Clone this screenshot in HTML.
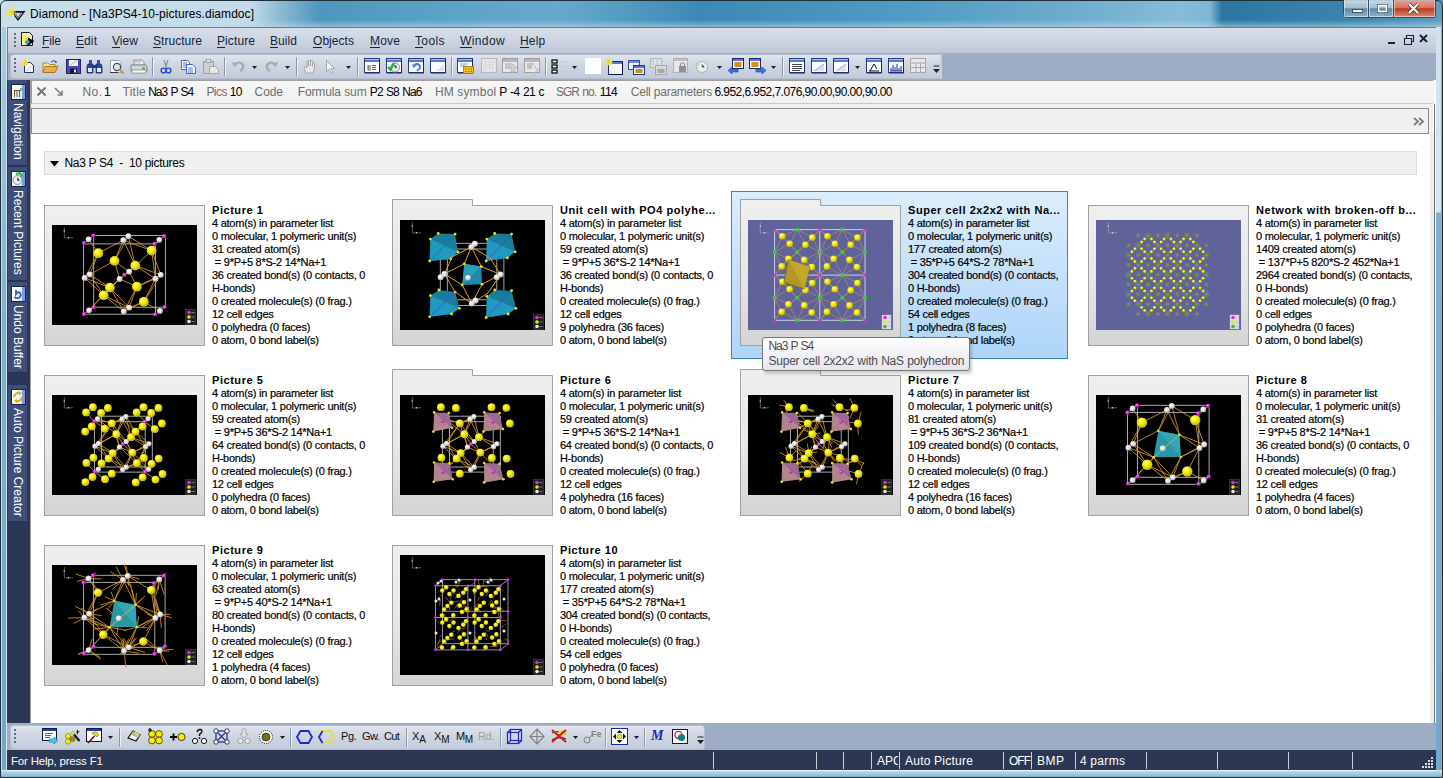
<!DOCTYPE html><html><head><meta charset="utf-8"><style>
html,body{margin:0;padding:0;}
body{width:1443px;height:778px;overflow:hidden;position:relative;font-family:"Liberation Sans",sans-serif;}
.t{position:absolute;white-space:nowrap;line-height:1;}
.b{position:absolute;}
svg{position:absolute;overflow:visible;}
</style></head><body>
<div class="b" style="left:0px;top:0px;width:1443px;height:778px;background:linear-gradient(90deg,#a3c6da 0px,#b9d5e5 8px,#b6d3e3 300px,#9cc3d9 1443px);"></div>
<div class="b" style="left:0px;top:0px;width:1443px;height:27px;background:linear-gradient(90deg,#c9dfeb 0px,#c4dbe9 250px,#8dbad4 280px,#4f95bd 320px,#5aa0c6 420px,#67a9cc 560px,#3d89b5 700px,#4f9bc4 900px,#6aa9cb 1050px,#86bcd8 1180px,#7db6d4 1210px,#2c77a2 1222px,#3a83ac 1343px,#5a9cc2 1440px);"></div>
<div class="b" style="left:0px;top:20px;width:1443px;height:7px;background:linear-gradient(180deg,rgba(255,255,255,0) 0,rgba(190,220,235,.55) 100%);"></div>
<div class="b" style="left:1px;top:27px;width:1px;height:751px;background:#c4deea;"></div>
<div class="b" style="left:2px;top:27px;width:4px;height:751px;background:linear-gradient(180deg,#a8cde0 0,#7fb0cc 40%,#74a6c2 100%);"></div>
<div class="b" style="left:6px;top:27px;width:1px;height:751px;background:#d4e8f2;"></div>
<div class="b" style="left:1435px;top:27px;width:1px;height:751px;background:#d4e8f2;"></div>
<div class="b" style="left:1436px;top:27px;width:5px;height:751px;background:linear-gradient(180deg,#cfe2ee 0,#d6e6f0 185px,#7fb0d4 186px,#74a8cc 100%);"></div>
<div class="b" style="left:1441px;top:27px;width:1px;height:751px;background:#5ab8ea;"></div>
<div class="b" style="left:0px;top:770px;width:1443px;height:8px;background:linear-gradient(180deg,#d6eaf4 0,#a9d0e4 30%,#8fc0dc 70%,#6fa8c8 100%);"></div>
<div class="b" style="left:7px;top:770px;width:1429px;height:1px;background:#e8f4fa;"></div>
<div class="b" style="left:0px;top:0px;width:1443px;height:778px;border:1px solid #1f2f3a;box-sizing:border-box;border-radius:6px 6px 0 0;"></div>
<div class="t" style="left:30px;top:8.14px;font-size:12px;color:#000;letter-spacing:0.054px;word-spacing:-0.054px;">Diamond - [Na3PS4-10-pictures.diamdoc]</div>
<div class="b" style="left:7px;top:27px;width:1429px;height:26px;background:linear-gradient(180deg,#d8dee9 0,#cdd4e1 50%,#bec7d8 100%);border-top:1px solid #6b7b94;border-left:1px solid #6b7b94;box-sizing:border-box;"></div>
<div class="b" style="left:7px;top:53px;width:1429px;height:27px;background:#9eacc4;border-left:1px solid #6b7b94;box-sizing:border-box;"></div>
<div class="t" style="left:42px;top:35.14px;font-size:12px;color:#14243a;letter-spacing:-0.125px;">File</div>
<div class="b" style="left:42px;top:47px;width:7px;height:1px;background:#14243a;"></div>
<div class="t" style="left:76px;top:35.14px;font-size:12px;color:#14243a;letter-spacing:0.094px;">Edit</div>
<div class="b" style="left:76px;top:47px;width:8px;height:1px;background:#14243a;"></div>
<div class="t" style="left:112px;top:35.14px;font-size:12px;color:#14243a;letter-spacing:0.056px;">View</div>
<div class="b" style="left:112px;top:47px;width:8px;height:1px;background:#14243a;"></div>
<div class="t" style="left:153px;top:35.14px;font-size:12px;color:#14243a;letter-spacing:0.035px;">Structure</div>
<div class="b" style="left:153px;top:47px;width:8px;height:1px;background:#14243a;"></div>
<div class="t" style="left:217px;top:35.14px;font-size:12px;color:#14243a;letter-spacing:0.102px;">Picture</div>
<div class="b" style="left:217px;top:47px;width:8px;height:1px;background:#14243a;"></div>
<div class="t" style="left:270px;top:35.14px;font-size:12px;color:#14243a;letter-spacing:0.069px;">Build</div>
<div class="b" style="left:270px;top:47px;width:8px;height:1px;background:#14243a;"></div>
<div class="t" style="left:313px;top:35.14px;font-size:12px;color:#14243a;letter-spacing:0.047px;">Objects</div>
<div class="b" style="left:313px;top:47px;width:9px;height:1px;background:#14243a;"></div>
<div class="t" style="left:370px;top:35.14px;font-size:12px;color:#14243a;letter-spacing:0.206px;">Move</div>
<div class="b" style="left:370px;top:47px;width:10px;height:1px;background:#14243a;"></div>
<div class="t" style="left:415px;top:35.14px;font-size:12px;color:#14243a;letter-spacing:0.362px;">Tools</div>
<div class="b" style="left:415px;top:47px;width:8px;height:1px;background:#14243a;"></div>
<div class="t" style="left:460px;top:35.14px;font-size:12px;color:#14243a;letter-spacing:0.396px;">Window</div>
<div class="b" style="left:460px;top:47px;width:12px;height:1px;background:#14243a;"></div>
<div class="t" style="left:520px;top:35.14px;font-size:12px;color:#14243a;letter-spacing:0.194px;">Help</div>
<div class="b" style="left:520px;top:47px;width:9px;height:1px;background:#14243a;"></div>
<div class="b" style="left:10px;top:54px;width:932px;height:25px;background:linear-gradient(180deg,#dfe4ed 0,#d0d7e3 40%,#c3cbda 100%);border-radius:3px;border:1px solid #b4bdcd;box-sizing:border-box;"></div>
<div class="b" style="left:940px;top:54px;width:2px;height:25px;background:#c9d0dd;"></div>
<div class="b" style="left:14px;top:58px;width:2px;height:2px;background:#5d6c86;"></div>
<div class="b" style="left:14px;top:62px;width:2px;height:2px;background:#5d6c86;"></div>
<div class="b" style="left:14px;top:66px;width:2px;height:2px;background:#5d6c86;"></div>
<div class="b" style="left:14px;top:70px;width:2px;height:2px;background:#5d6c86;"></div>
<div class="b" style="left:14px;top:33px;width:2px;height:2px;background:#5d6c86;"></div>
<div class="b" style="left:14px;top:37px;width:2px;height:2px;background:#5d6c86;"></div>
<div class="b" style="left:14px;top:41px;width:2px;height:2px;background:#5d6c86;"></div>
<div class="b" style="left:14px;top:45px;width:2px;height:2px;background:#5d6c86;"></div>
<svg style="left:21px;top:60px" width="14" height="14" viewBox="0 0 14 14"><path d="M3.5 2.5H9.5L12.5 5.5V12.5H3.5Z" fill="#f4f6fa" stroke="#24305a"/><path d="M5 11L11 6" stroke="#c8d0e0"/><circle cx="4" cy="3" r="3" fill="#f8e860" opacity=".9"/><path d="M1 3H7M4 0V6M2 1L6 5M6 1L2 5" stroke="#f0d000" stroke-width=".7"/></svg><svg style="left:42px;top:59px" width="18" height="15" viewBox="0 0 18 15"><path d="M1 4H6L7.5 5.5H13V13H1Z" fill="#f8e090" stroke="#8a6a10" stroke-width=".7"/><path d="M3 7.5H16L13 13.5H1Z" fill="#f0b040" stroke="#8a5a10" stroke-width=".7"/><path d="M9 3Q12 0 14.5 3" fill="none" stroke="#2a4a8a" stroke-width="1"/><path d="M13.5 1.5L15 3.5L12.5 3.8Z" fill="#2a4a8a"/></svg><svg style="left:66px;top:59px" width="15" height="15" viewBox="0 0 15 15"><rect x="0.5" y="0.5" width="14" height="14" fill="#4848b8" stroke="#202070"/><rect x="3" y="1" width="9" height="6" fill="#f0f0f8"/><path d="M4 6L11 1.5" stroke="#b0b8d0"/><rect x="4" y="9.5" width="7" height="5" fill="#181830"/><rect x="8" y="10.5" width="2" height="3" fill="#e0e0e0"/></svg><svg style="left:86px;top:59px" width="17" height="15" viewBox="0 0 17 15"><path d="M2 5H7V14H1V7Z M10 5H15L16 7V14H10Z" fill="#2848a0" stroke="#102060" stroke-width=".7"/><rect x="3" y="1" width="3" height="4" fill="#3050b0"/><rect x="11" y="1" width="3" height="4" fill="#3050b0"/><rect x="2" y="9" width="4" height="4" fill="#e8ecf8"/><rect x="11" y="9" width="4" height="4" fill="#e8ecf8"/><rect x="7" y="6" width="3" height="3" fill="#203880"/></svg><svg style="left:109px;top:59px" width="17" height="16" viewBox="0 0 17 16"><path d="M1.5 1.5H10L12 3.5V13.5H1.5Z" fill="#f8f8fc" stroke="#8890a8" stroke-width=".8"/><circle cx="8" cy="8" r="3.6" fill="#d8e4f0" stroke="#404858" stroke-width="1.2"/><path d="M10.5 10.5L14.5 14.5" stroke="#e09030" stroke-width="2.2"/><path d="M1 13.5H9" stroke="#303850"/></svg><svg style="left:130px;top:59px" width="18" height="15" viewBox="0 0 18 15"><path d="M4 1H12L14 3V6H4Z" fill="#f4f4f4" stroke="#707070" stroke-width=".7"/><path d="M1 6H16L17 8V12H1Z" fill="#d0d4dc" stroke="#606878" stroke-width=".7"/><rect x="2" y="11" width="14" height="3" fill="#f8f8f8" stroke="#707070" stroke-width=".6"/><rect x="12" y="8.5" width="3" height="2" fill="#20c020"/><path d="M5 2.5H11M5 4H11" stroke="#a0a0a0" stroke-width=".6"/></svg><div class="b" style="left:152px;top:57px;width:1px;height:19px;background:#8a96ab;"></div><div class="b" style="left:153px;top:57px;width:1px;height:19px;background:#eef1f6;"></div><svg style="left:160px;top:59px" width="12" height="15" viewBox="0 0 12 15"><path d="M4 1L6.5 8.5M8 1L5.5 8.5" stroke="#808890" stroke-width="1.1"/><circle cx="3.5" cy="11.5" r="2.4" fill="none" stroke="#2848c0" stroke-width="1.4"/><circle cx="8.5" cy="11.5" r="2.4" fill="none" stroke="#2848c0" stroke-width="1.4"/></svg><svg style="left:180px;top:59px" width="17" height="15" viewBox="0 0 17 15"><path d="M1.5 1.5H7.5L9.5 3.5V10.5H1.5Z" fill="#f4f6fc" stroke="#3858b8" stroke-width=".9"/><path d="M6.5 5.5H12.5L15.5 8.5V14.5H6.5Z" fill="#f4f6fc" stroke="#3858b8" stroke-width=".9"/><path d="M3 4H7M3 6H7M3 8H6M8 9H13M8 11H13M8 13H13" stroke="#3060d0" stroke-width=".8"/></svg><svg style="left:202px;top:59px" width="18" height="15" viewBox="0 0 18 15"><rect x="1.5" y="2.5" width="10" height="12" fill="#d0d0d0" stroke="#a0a0a0"/><rect x="4" y="0.5" width="5" height="3" fill="#e0e0e0" stroke="#a0a0a0"/><path d="M7.5 7.5H13.5L16.5 10.5V14.5H7.5Z" fill="#e8e8e8" stroke="#a8a8a8"/></svg><div class="b" style="left:224px;top:57px;width:1px;height:19px;background:#8a96ab;"></div><div class="b" style="left:225px;top:57px;width:1px;height:19px;background:#eef1f6;"></div><svg style="left:231px;top:59px" width="15" height="15" viewBox="0 0 15 15"><path d="M3 6Q8 1 12 6Q13 10 9 12" fill="none" stroke="#a8a8a8" stroke-width="2.2"/><path d="M1 3L3 8L7 5Z" fill="#a8a8a8"/></svg><svg style="left:252px;top:66px" width="6" height="4" viewBox="0 0 6 4"><path d="M0 0H5L2.5 3Z" fill="#1a1a2a"/></svg><svg style="left:264px;top:59px" width="15" height="15" viewBox="0 0 15 15"><path d="M12 6Q7 1 3 6Q2 10 6 12" fill="none" stroke="#a8a8a8" stroke-width="2.2"/><path d="M14 3L12 8L8 5Z" fill="#a8a8a8"/></svg><svg style="left:285px;top:66px" width="6" height="4" viewBox="0 0 6 4"><path d="M0 0H5L2.5 3Z" fill="#1a1a2a"/></svg><div class="b" style="left:296px;top:57px;width:1px;height:19px;background:#8a96ab;"></div><div class="b" style="left:297px;top:57px;width:1px;height:19px;background:#eef1f6;"></div><svg style="left:302px;top:59px" width="17" height="16" viewBox="0 0 17 16"><path d="M4 14L2 9Q2 7 4 8L5 9V3Q5 1.5 6.5 2V7V2Q7 0.5 8.5 1V7V2Q9.5 1 10.5 2.5V7.5V4Q11.5 3 12.5 4V10L11 14Z" fill="#e8e8e8" stroke="#a0a0a0" stroke-width=".9"/></svg><svg style="left:325px;top:59px" width="10" height="16" viewBox="0 0 10 16"><path d="M1.5 1.5V12.5L4 10L6 14.5L8 13.5L6 9.5H9.5Z" fill="#f0f0f0" stroke="#a0a0a0" stroke-width=".9"/></svg><svg style="left:346px;top:66px" width="6" height="4" viewBox="0 0 6 4"><path d="M0 0H5L2.5 3Z" fill="#1a1a2a"/></svg><div class="b" style="left:357px;top:57px;width:1px;height:19px;background:#8a96ab;"></div><div class="b" style="left:358px;top:57px;width:1px;height:19px;background:#eef1f6;"></div><svg style="left:364px;top:58px" width="17" height="16" viewBox="0 0 17 16"><rect x="0.5" y="0.5" width="15" height="14" fill="#fafbfe" stroke="#2a3a80"/><rect x="1" y="1" width="14" height="3" fill="#5878d8"/><rect x="1" y="1" width="14" height="1" fill="#a8c0f0"/><path d="M15.5 1V15H1" stroke="#1a2260" fill="none"/><path d="M4 7V12M4 8H7M4 10H7M4 12H7M8 7.5H12M8 9.5H12M8 11.5H12" stroke="#605820" stroke-width=".9"/></svg><svg style="left:386px;top:58px" width="17" height="16" viewBox="0 0 17 16"><rect x="0.5" y="0.5" width="15" height="14" fill="#fafbfe" stroke="#2a3a80"/><rect x="1" y="1" width="14" height="3" fill="#5878d8"/><rect x="1" y="1" width="14" height="1" fill="#a8c0f0"/><path d="M15.5 1V15H1" stroke="#1a2260" fill="none"/><circle cx="9" cy="9.5" r="4.5" fill="#e0e4ec" stroke="#909090"/><path d="M9 7V9.5H11" stroke="#606060"/><path d="M2 9L4.5 12L8 5" stroke="#20b020" stroke-width="2" fill="none"/></svg><svg style="left:408px;top:58px" width="17" height="16" viewBox="0 0 17 16"><rect x="0.5" y="0.5" width="15" height="14" fill="#fafbfe" stroke="#2a3a80"/><rect x="1" y="1" width="14" height="3" fill="#5878d8"/><rect x="1" y="1" width="14" height="1" fill="#a8c0f0"/><path d="M15.5 1V15H1" stroke="#1a2260" fill="none"/><path d="M6 8Q9 4 12 8Q12.5 11 9 12.5" fill="none" stroke="#4878c8" stroke-width="1.8"/><path d="M4 6L5.5 10L8.5 7.5Z" fill="#4878c8"/></svg><svg style="left:430px;top:58px" width="17" height="16" viewBox="0 0 17 16"><rect x="0.5" y="0.5" width="15" height="14" fill="#fafbfe" stroke="#2a3a80"/><rect x="1" y="1" width="14" height="3" fill="#5878d8"/><rect x="1" y="1" width="14" height="1" fill="#a8c0f0"/><path d="M15.5 1V15H1" stroke="#1a2260" fill="none"/><path d="M6 13L14 6V13Z" fill="#e0e0e8"/></svg><div class="b" style="left:451px;top:57px;width:1px;height:19px;background:#8a96ab;"></div><div class="b" style="left:452px;top:57px;width:1px;height:19px;background:#eef1f6;"></div><svg style="left:457px;top:58px" width="18" height="17" viewBox="0 0 18 17"><rect x="0.5" y="0.5" width="15" height="14" fill="#fafbfe" stroke="#2a3a80"/><rect x="1" y="1" width="14" height="3" fill="#5878d8"/><rect x="1" y="1" width="14" height="1" fill="#a8c0f0"/><path d="M15.5 1V15H1" stroke="#1a2260" fill="none"/><path d="M3 6H11M3 8H9" stroke="#707070" stroke-width=".7"/><rect x="6.5" y="8.5" width="10" height="7" fill="#f0c020" stroke="#a07010" stroke-width=".8"/><path d="M8.5 11H9.5M11.5 11H12.5M14 11H15M8.5 13.5H9.5M11.5 13.5H12.5M14 13.5H15" stroke="#805000" stroke-width="1"/></svg><svg style="left:481px;top:58px" width="17" height="16" viewBox="0 0 17 16"><rect x="0.5" y="0.5" width="15" height="14" fill="#e4e4e4" stroke="#b8b8b8"/><path d="M4 4H5M8 4H9M11 4H12M4 7H5M8 7H9M11 7H12M4 10H5M8 10H9M11 10H12" stroke="#b0b0b0"/></svg><svg style="left:502px;top:58px" width="17" height="16" viewBox="0 0 17 16"><rect x="0.5" y="0.5" width="15" height="14" fill="#e8e8e8" stroke="#a0a0a0"/><rect x="1" y="1" width="14" height="3" fill="#b8b8b8"/><path d="M3 6H10M3 8H8M3 10H8" stroke="#a0a0a0"/><path d="M9 14V10H7L11 6L15 10H13V14Z" fill="#d0d0d0" stroke="#a8a8a8" stroke-width=".6"/></svg><svg style="left:524px;top:58px" width="17" height="16" viewBox="0 0 17 16"><rect x="0.5" y="0.5" width="15" height="14" fill="#e8e8e8" stroke="#a0a0a0"/><rect x="1" y="1" width="14" height="3" fill="#b8b8b8"/><path d="M3 6H10M3 8H8M3 10H8" stroke="#a0a0a0"/><path d="M10 8L14 12L10 16" fill="none" stroke="#c0c0c0" stroke-width="1.4"/></svg><div class="b" style="left:545px;top:57px;width:1px;height:19px;background:#8a96ab;"></div><div class="b" style="left:546px;top:57px;width:1px;height:19px;background:#eef1f6;"></div><svg style="left:551px;top:59px" width="9" height="15" viewBox="0 0 9 15"><rect x="1" y="1" width="5" height="3" fill="#f0f0f0" stroke="#000" stroke-width="1.2"/><rect x="1" y="6" width="5" height="3" fill="#f0f0f0" stroke="#000" stroke-width="1.2"/><rect x="1" y="11" width="5" height="3" fill="#f0f0f0" stroke="#000" stroke-width="1.2"/></svg><svg style="left:559px;top:59px" width="12" height="15" viewBox="0 0 12 15"><path d="M1 2.5H11M1 7.5H11M1 12.5H11" stroke="#c8ccd4" stroke-width=".8"/></svg><svg style="left:572px;top:66px" width="6" height="4" viewBox="0 0 6 4"><path d="M0 0H5L2.5 3Z" fill="#1a1a2a"/></svg><svg style="left:585px;top:58px" width="16" height="16" viewBox="0 0 16 16"><rect x="0" y="0" width="16" height="16" fill="#fff"/></svg><svg style="left:605px;top:58px" width="18" height="17" viewBox="0 0 18 17"><rect x="3.5" y="3.5" width="14" height="13" fill="#f4f8fc" stroke="#1a2a70"/><rect x="4" y="4" width="13" height="2" fill="#5878d8"/><path d="M17.5 4V16.5H4" stroke="#0a1440" fill="none"/><circle cx="4" cy="4" r="3.2" fill="#f8e880"/><path d="M0.5 4H7.5M4 0.5V7.5M1.5 1.5L6.5 6.5M6.5 1.5L1.5 6.5" stroke="#e8c800" stroke-width=".7"/></svg><svg style="left:628px;top:58px" width="18" height="17" viewBox="0 0 18 17"><rect x="0.5" y="2.5" width="11" height="9" fill="#f0f4fa" stroke="#3050a0"/><rect x="1" y="3" width="10" height="2" fill="#7090d8"/><rect x="5.5" y="7.5" width="11" height="9" fill="#f0f4fa" stroke="#203880"/><rect x="6" y="8" width="10" height="2" fill="#5878d8"/><rect x="7.5" y="11" width="7" height="4" fill="#c89020"/></svg><svg style="left:650px;top:58px" width="18" height="17" viewBox="0 0 18 17"><rect x="0.5" y="0.5" width="11" height="9" fill="#e0e0e0" stroke="#b8b8b8"/><rect x="5.5" y="7.5" width="11" height="9" fill="#d8d8d8" stroke="#a8a8a8"/><rect x="7.5" y="11" width="7" height="4" fill="#a8a8a8"/><path d="M2 3H4M6 3H8M2 6H4M6 6H8" stroke="#b0b0b0"/></svg><svg style="left:673px;top:58px" width="16" height="17" viewBox="0 0 16 17"><rect x="0.5" y="0.5" width="14" height="14" fill="#e8e8e8" stroke="#b0b0b0"/><rect x="1" y="1" width="13" height="2" fill="#c0c0c0"/><rect x="6" y="8" width="7" height="6" fill="#909090"/><path d="M7.5 8V6Q9.5 3.5 11.5 6V8" fill="none" stroke="#909090" stroke-width="1.2"/></svg><svg style="left:694px;top:59px" width="15" height="15" viewBox="0 0 15 15"><circle cx="8" cy="8" r="5.5" fill="#ececec" stroke="#b8b8b8" stroke-width="1.2"/><path d="M8 5V8.5H10.5" stroke="#b0b0b0"/><path d="M1 7L3 4L5 7" fill="none" stroke="#c0c0c0"/></svg><svg style="left:717px;top:66px" width="6" height="4" viewBox="0 0 6 4"><path d="M0 0H5L2.5 3Z" fill="#1a1a2a"/></svg><svg style="left:727px;top:58px" width="18" height="17" viewBox="0 0 18 17"><rect x="5.5" y="0.5" width="11" height="10" fill="#f8f8f8" stroke="#1a2a60"/><rect x="6" y="1" width="10" height="2" fill="#5878d8"/><rect x="7.5" y="4" width="7" height="5" fill="#d09020"/><path d="M1 12.5L5 9V11H11V14H5V16Z" fill="#3078e0" stroke="#1848a0" stroke-width=".6"/></svg><svg style="left:749px;top:58px" width="18" height="17" viewBox="0 0 18 17"><rect x="0.5" y="0.5" width="11" height="10" fill="#f8f8f8" stroke="#1a2a60"/><rect x="1" y="1" width="10" height="2" fill="#5878d8"/><rect x="2.5" y="4" width="7" height="5" fill="#d09020"/><path d="M17 12.5L13 9V11H7V14H13V16Z" fill="#3078e0" stroke="#1848a0" stroke-width=".6"/></svg><svg style="left:771px;top:66px" width="6" height="4" viewBox="0 0 6 4"><path d="M0 0H5L2.5 3Z" fill="#1a1a2a"/></svg><div class="b" style="left:782px;top:57px;width:1px;height:19px;background:#8a96ab;"></div><div class="b" style="left:783px;top:57px;width:1px;height:19px;background:#eef1f6;"></div><svg style="left:789px;top:58px" width="16" height="16" viewBox="0 0 16 16"><rect x="0.5" y="0.5" width="15" height="14" fill="#fafbfe" stroke="#2a3a80"/><rect x="1" y="1" width="14" height="3" fill="#5878d8"/><rect x="1" y="1" width="14" height="1" fill="#a8c0f0"/><path d="M15.5 1V15H1" stroke="#1a2260" fill="none"/><path d="M3 6.5H13M3 8.5H13M3 10.5H13M3 12.5H11" stroke="#303030" stroke-width=".9"/></svg><svg style="left:811px;top:58px" width="16" height="16" viewBox="0 0 16 16"><rect x="0.5" y="0.5" width="15" height="14" fill="#fafbfe" stroke="#2a3a80"/><rect x="1" y="1" width="14" height="3" fill="#5878d8"/><rect x="1" y="1" width="14" height="1" fill="#a8c0f0"/><path d="M15.5 1V15H1" stroke="#1a2260" fill="none"/><path d="M3 13L13 6V13Z" fill="#d8e0ec"/><path d="M3 13L13 6" stroke="#a0b0c8"/></svg><svg style="left:833px;top:58px" width="16" height="16" viewBox="0 0 16 16"><rect x="0.5" y="0.5" width="15" height="14" fill="#fafbfe" stroke="#2a3a80"/><rect x="1" y="1" width="14" height="3" fill="#5878d8"/><rect x="1" y="1" width="14" height="1" fill="#a8c0f0"/><path d="M15.5 1V15H1" stroke="#1a2260" fill="none"/><path d="M3 13L13 6V13Z" fill="#d8e0ec"/><path d="M3 13L13 6" stroke="#a0b0c8"/></svg><svg style="left:855px;top:66px" width="6" height="4" viewBox="0 0 6 4"><path d="M0 0H5L2.5 3Z" fill="#1a1a2a"/></svg><svg style="left:866px;top:58px" width="16" height="16" viewBox="0 0 16 16"><rect x="0.5" y="0.5" width="15" height="14" fill="#fafbfe" stroke="#2a3a80"/><rect x="1" y="1" width="14" height="3" fill="#5878d8"/><rect x="1" y="1" width="14" height="1" fill="#a8c0f0"/><path d="M15.5 1V15H1" stroke="#1a2260" fill="none"/><path d="M3 13H13M4 13L8 6L11 11" fill="none" stroke="#101010" stroke-width="1"/></svg><svg style="left:888px;top:58px" width="16" height="16" viewBox="0 0 16 16"><rect x="0.5" y="0.5" width="15" height="14" fill="#fafbfe" stroke="#2a3a80"/><rect x="1" y="1" width="14" height="3" fill="#5878d8"/><rect x="1" y="1" width="14" height="1" fill="#a8c0f0"/><path d="M15.5 1V15H1" stroke="#1a2260" fill="none"/><path d="M2 13H14M3 13V10M5 13V7M7 13V9M9 13V6M11 13V10M13 13V8" stroke="#1a2aa0" stroke-width="1"/></svg><svg style="left:910px;top:58px" width="16" height="16" viewBox="0 0 16 16"><rect x="0.5" y="0.5" width="15" height="14" fill="#e8e8e8" stroke="#a8a8a8"/><path d="M1 5H15M1 9.5H15M6 5V14M10.5 5V14" stroke="#a8a8a8"/></svg><svg style="left:932px;top:64px" width="9" height="12" viewBox="0 0 9 12"><path d="M1.5 2H7.5" stroke="#202020"/><path d="M1 5H8L4.5 9Z" fill="#202020"/></svg>
<svg style="left:19px;top:31px" width="17" height="17" viewBox="0 0 17 17"><path d="M2.5 1.5H10.5L13.5 4.5V14.5H2.5Z" fill="#f8f0c0" stroke="#1a1a1a"/><path d="M8 6L15.5 10L9 15L6 11Z" fill="#101010"/><path d="M8 8L11 11L8 14L6 11Z" fill="#30b0c0"/><circle cx="6" cy="7" r="3" fill="#f8f040" opacity=".9"/></svg>
<svg style="left:3px;top:3px" width="24" height="22" viewBox="0 0 24 22"><path d="M7.5 8H22.5L15 18Z" fill="#101010"/><path d="M10.5 9.8H19.5L15 15.8Z" fill="#e8f0f8"/><path d="M12.5 10.5L15 14.5L17.5 10.5M10.5 9.8H19.5" fill="none" stroke="#404850" stroke-width=".9"/><path d="M9 11L11 13" stroke="#fff"/><circle cx="8" cy="9" r="3.2" fill="#f8f060" opacity=".8"/><path d="M3 9H13M8 4V14M4.5 5.5L11.5 12.5M11.5 5.5L4.5 12.5" stroke="#e8e000" stroke-width=".8"/><circle cx="11.5" cy="3" r=".9" fill="#f0e040"/><circle cx="6" cy="16.5" r=".9" fill="#f0e040"/></svg>
<div class="b" style="left:7px;top:80px;width:23px;height:643px;background:#2b3756;"></div>
<div class="b" style="left:8px;top:80px;width:19px;height:86px;background:#3e4e78;border-bottom:1px solid #26314d;box-sizing:border-box;"></div>
<svg style="left:11px;top:84px" width="16" height="17"><rect x="0.5" y="0.5" width="14" height="15" fill="#f6f8fc" stroke="#1a2444"/><rect x="11" y="1" width="3" height="14" fill="#7c9ae8"/><rect x="1" y="1" width="10" height="14" fill="url(#tg)"/><path d="M3.5 7V13M6 7V13M8.5 7V13M3 6.5H10M10 6.5V4" stroke="#6a6030" stroke-width="1"/></svg>
<div class="t" style="left:12px;top:103px;font-size:12px;color:#fff;transform-origin:0 0;transform:translate(12px,0) rotate(90deg);">Navigation</div>
<div class="b" style="left:8px;top:167px;width:19px;height:114px;background:#3e4e78;border-bottom:1px solid #26314d;box-sizing:border-box;"></div>
<svg style="left:11px;top:171px" width="16" height="17"><rect x="0.5" y="0.5" width="14" height="15" fill="#f6f8fc" stroke="#1a2444"/><rect x="11" y="1" width="3" height="14" fill="#7c9ae8"/><rect x="1" y="1" width="10" height="14" fill="url(#tg)"/><circle cx="6.5" cy="9" r="4.5" fill="#e8ecf0" stroke="#909090"/><path d="M6.5 6.5V9.5H8.5" stroke="#606060"/><path d="M5 3L9 2L11 6" fill="none" stroke="#20c020" stroke-width="2"/></svg>
<div class="t" style="left:12px;top:190px;font-size:12px;color:#fff;transform-origin:0 0;transform:translate(12px,0) rotate(90deg);">Recent Pictures</div>
<div class="b" style="left:8px;top:282px;width:19px;height:91px;background:#3e4e78;border-bottom:1px solid #26314d;box-sizing:border-box;"></div>
<svg style="left:11px;top:286px" width="16" height="17"><rect x="0.5" y="0.5" width="14" height="15" fill="#f6f8fc" stroke="#1a2444"/><rect x="11" y="1" width="3" height="14" fill="#7c9ae8"/><rect x="1" y="1" width="10" height="14" fill="url(#tg)"/><path d="M5 4V8Q7 5 9 7Q11 10 7.5 12Q5 12.5 3.5 11" fill="none" stroke="#3858c0" stroke-width="1.8"/></svg>
<div class="t" style="left:12px;top:305px;font-size:12px;color:#fff;transform-origin:0 0;transform:translate(12px,0) rotate(90deg);">Undo Buffer</div>
<div class="b" style="left:8px;top:385px;width:19px;height:137px;background:#3e4e78;border-bottom:1px solid #26314d;box-sizing:border-box;"></div>
<svg style="left:11px;top:389px" width="16" height="17"><rect x="0.5" y="0.5" width="14" height="15" fill="#f6f8fc" stroke="#1a2444"/><rect x="11" y="1" width="3" height="14" fill="#7c9ae8"/><rect x="1" y="1" width="10" height="14" fill="url(#tg)"/><path d="M3 8Q4 3 9 4M11 8Q10 13 5 12" fill="none" stroke="#e0b000" stroke-width="2"/><path d="M8 2L11 4.5L8 6Z M6 10L3 11.5L6 14Z" fill="#e0b000"/></svg>
<div class="t" style="left:12px;top:408px;font-size:12px;color:#fff;transform-origin:0 0;transform:translate(12px,0) rotate(90deg);">Auto Picture Creator</div>
<div class="b" style="left:30px;top:80px;width:1406px;height:643px;background:#fff;"></div>
<div class="b" style="left:31px;top:80px;width:1402px;height:24px;background:linear-gradient(180deg,#f7f7f7 0,#f0f0f0 100%);border-left:1px solid #9a9a9a;border-top:1px solid #a0a0a0;border-bottom:1px solid #c8c8c8;box-sizing:border-box;"></div>
<div class="b" style="left:31px;top:104px;width:1402px;height:30px;background:#f0f0f0;"></div>
<div class="b" style="left:31px;top:108px;width:1398px;height:26px;background:#f0f0f0;border:1px solid #8c8c8c;box-sizing:border-box;"></div>
<div class="b" style="left:30px;top:80px;width:1px;height:643px;background:#a0a0a0;"></div>
<div class="b" style="left:1430px;top:134px;width:4px;height:589px;background:#ececec;"></div>
<div class="b" style="left:1434px;top:104px;width:1px;height:619px;background:#707070;"></div>
<div class="b" style="left:1433px;top:80px;width:2px;height:24px;background:#f4f4f4;"></div>
<div class="t" style="left:82.5px;top:86.14px;font-size:12px;color:#6d6d6d;letter-spacing:0.393px;">No.</div>
<div class="t" style="left:104px;top:86.14px;font-size:12px;color:#000;">1</div>
<div class="t" style="left:122.6px;top:86.14px;font-size:12px;color:#6d6d6d;letter-spacing:0.234px;">Title</div>
<div class="t" style="left:148.2px;top:86.14px;font-size:12px;color:#000;letter-spacing:-1.017px;word-spacing:1.017px;">Na3 P S4</div>
<div class="t" style="left:206.4px;top:86.14px;font-size:12px;color:#6d6d6d;letter-spacing:-0.537px;">Pics</div>
<div class="t" style="left:229.7px;top:86.14px;font-size:12px;color:#000;letter-spacing:-0.586px;">10</div>
<div class="t" style="left:254.6px;top:86.14px;font-size:12px;color:#6d6d6d;letter-spacing:-0.109px;">Code</div>
<div class="t" style="left:297.7px;top:86.14px;font-size:12px;color:#6d6d6d;letter-spacing:-0.117px;word-spacing:0.117px;">Formula sum</div>
<div class="t" style="left:369.8px;top:86.14px;font-size:12px;color:#000;letter-spacing:-0.913px;word-spacing:0.913px;">P2 S8 Na6</div>
<div class="t" style="left:434.9px;top:86.14px;font-size:12px;color:#6d6d6d;letter-spacing:0.179px;word-spacing:-0.179px;">HM symbol</div>
<div class="t" style="left:499.3px;top:86.14px;font-size:12px;color:#000;letter-spacing:-0.509px;word-spacing:0.509px;">P -4 21 c</div>
<div class="t" style="left:556px;top:86.14px;font-size:12px;color:#6d6d6d;letter-spacing:-1.012px;word-spacing:1.012px;">SGR no.</div>
<div class="t" style="left:599.7px;top:86.14px;font-size:12px;color:#000;letter-spacing:-0.584px;">114</div>
<div class="t" style="left:630.8px;top:86.14px;font-size:12px;color:#6d6d6d;letter-spacing:-0.249px;word-spacing:0.249px;">Cell parameters</div>
<div class="t" style="left:714.4px;top:86.14px;font-size:12px;color:#000;letter-spacing:-0.552px;">6.952,6.952,7.076,90.00,90.00,90.00</div>
<div class="b" style="left:44px;top:151px;width:1373px;height:24px;background:#f0f0f0;border:1px solid #dcdcdc;box-sizing:border-box;"></div>
<svg style="left:50px;top:161px" width="10" height="6"><path d="M0 0H9L4.5 5.5Z" fill="#000"/></svg>
<div class="t" style="left:64.4px;top:157.14px;font-size:12px;color:#000;letter-spacing:-0.3px;">Na3 P S4&nbsp; -&nbsp; 10 pictures</div>
<svg width="0" height="0" style="left:0;top:0"><defs><radialGradient id="gy" cx="0.38" cy="0.35" r="0.7"><stop offset="0" stop-color="#ffffa0"/><stop offset="0.45" stop-color="#f4ec00"/><stop offset="1" stop-color="#b8b000"/></radialGradient><radialGradient id="gw" cx="0.38" cy="0.35" r="0.7"><stop offset="0" stop-color="#ffffff"/><stop offset="0.5" stop-color="#e4e4e4"/><stop offset="1" stop-color="#a8a8a8"/></radialGradient><radialGradient id="gm" cx="0.38" cy="0.35" r="0.7"><stop offset="0" stop-color="#ff80ff"/><stop offset="0.5" stop-color="#e020e0"/><stop offset="1" stop-color="#a000a0"/></radialGradient></defs></svg>
<svg width="0" height="0" style="left:0;top:0"><defs><linearGradient id="tg" x1="0" y1="0" x2="1" y2="1"><stop offset="0" stop-color="#ffffff"/><stop offset="1" stop-color="#dde6f2"/></linearGradient></defs></svg>
<div class="b" style="left:44px;top:205px;width:161px;height:141px;background:linear-gradient(180deg,#efefef 0,#e6e6e6 55%,#d4d4d4 100%);border:1px solid #a0a0a0;box-sizing:border-box;"></div>
<svg style="left:52px;top:225px" width="145" height="100" viewBox="0 0 145 100"><rect width="145" height="100" fill="#000"/><line x1="12.3" y1="2.0" x2="12.3" y2="13.0" stroke="#b0b0b0" stroke-width="0.5" opacity="1"/><line x1="12.3" y1="13.0" x2="21.0" y2="12.8" stroke="#b0b0b0" stroke-width="0.5" opacity="1"/><circle cx="12.3" cy="6.0" r="0.7" fill="#e0e0e0"/><circle cx="16.5" cy="12.8" r="0.7" fill="#e0e0e0"/><rect x="31.6" y="18.9" width="71.8" height="70.3" fill="none" stroke="#b8b8b8" stroke-width="0.9"/><rect x="41.7" y="10.5" width="71.7" height="71.7" fill="none" stroke="#b8b8b8" stroke-width="0.9"/><line x1="31.6" y1="18.9" x2="41.7" y2="10.5" stroke="#b8b8b8" stroke-width="0.9" opacity="1"/><line x1="103.4" y1="18.9" x2="113.4" y2="10.5" stroke="#b8b8b8" stroke-width="0.9" opacity="1"/><line x1="31.6" y1="89.2" x2="41.7" y2="82.2" stroke="#b8b8b8" stroke-width="0.9" opacity="1"/><line x1="103.4" y1="89.2" x2="113.4" y2="82.2" stroke="#b8b8b8" stroke-width="0.9" opacity="1"/><line x1="46.3" y1="28.2" x2="36.7" y2="14.3" stroke="#d89a28" stroke-width="0.85" opacity="1"/><line x1="46.3" y1="28.2" x2="71.3" y2="15.1" stroke="#d89a28" stroke-width="0.85" opacity="1"/><line x1="46.3" y1="28.2" x2="37.8" y2="49.5" stroke="#d89a28" stroke-width="0.85" opacity="1"/><line x1="46.3" y1="28.2" x2="32.7" y2="52.9" stroke="#d89a28" stroke-width="0.85" opacity="1"/><line x1="62.5" y1="35.9" x2="76.4" y2="11.2" stroke="#d89a28" stroke-width="0.85" opacity="1"/><line x1="62.5" y1="35.9" x2="71.3" y2="15.1" stroke="#d89a28" stroke-width="0.85" opacity="1"/><line x1="62.5" y1="35.9" x2="37.8" y2="49.5" stroke="#d89a28" stroke-width="0.85" opacity="1"/><line x1="62.5" y1="35.9" x2="77.2" y2="46.7" stroke="#d89a28" stroke-width="0.85" opacity="1"/><line x1="62.5" y1="35.9" x2="67.6" y2="54.0" stroke="#d89a28" stroke-width="0.85" opacity="1"/><line x1="83.3" y1="40.6" x2="76.4" y2="11.2" stroke="#d89a28" stroke-width="0.85" opacity="1"/><line x1="83.3" y1="40.6" x2="71.3" y2="15.1" stroke="#d89a28" stroke-width="0.85" opacity="1"/><line x1="83.3" y1="40.6" x2="77.2" y2="46.7" stroke="#d89a28" stroke-width="0.85" opacity="1"/><line x1="83.3" y1="40.6" x2="67.6" y2="54.0" stroke="#d89a28" stroke-width="0.85" opacity="1"/><line x1="83.3" y1="40.6" x2="108.8" y2="49.8" stroke="#d89a28" stroke-width="0.85" opacity="1"/><line x1="83.3" y1="40.6" x2="103.4" y2="53.7" stroke="#d89a28" stroke-width="0.85" opacity="1"/><line x1="99.6" y1="25.6" x2="76.4" y2="11.2" stroke="#d89a28" stroke-width="0.85" opacity="1"/><line x1="99.6" y1="25.6" x2="71.3" y2="15.1" stroke="#d89a28" stroke-width="0.85" opacity="1"/><line x1="99.6" y1="25.6" x2="107.3" y2="14.8" stroke="#d89a28" stroke-width="0.85" opacity="1"/><line x1="99.6" y1="25.6" x2="77.2" y2="46.7" stroke="#d89a28" stroke-width="0.85" opacity="1"/><line x1="99.6" y1="25.6" x2="108.8" y2="49.8" stroke="#d89a28" stroke-width="0.85" opacity="1"/><line x1="99.6" y1="25.6" x2="103.4" y2="53.7" stroke="#d89a28" stroke-width="0.85" opacity="1"/><line x1="57.9" y1="62.6" x2="37.8" y2="49.5" stroke="#d89a28" stroke-width="0.85" opacity="1"/><line x1="57.9" y1="62.6" x2="32.7" y2="52.9" stroke="#d89a28" stroke-width="0.85" opacity="1"/><line x1="57.9" y1="62.6" x2="77.2" y2="46.7" stroke="#d89a28" stroke-width="0.85" opacity="1"/><line x1="57.9" y1="62.6" x2="67.6" y2="54.0" stroke="#d89a28" stroke-width="0.85" opacity="1"/><line x1="57.9" y1="62.6" x2="37.1" y2="85.3" stroke="#d89a28" stroke-width="0.85" opacity="1"/><line x1="57.9" y1="62.6" x2="71.8" y2="86.4" stroke="#d89a28" stroke-width="0.85" opacity="1"/><line x1="57.9" y1="62.6" x2="77.2" y2="82.7" stroke="#d89a28" stroke-width="0.85" opacity="1"/><line x1="51.7" y1="70.3" x2="37.8" y2="49.5" stroke="#d89a28" stroke-width="0.85" opacity="1"/><line x1="51.7" y1="70.3" x2="32.7" y2="52.9" stroke="#d89a28" stroke-width="0.85" opacity="1"/><line x1="51.7" y1="70.3" x2="67.6" y2="54.0" stroke="#d89a28" stroke-width="0.85" opacity="1"/><line x1="51.7" y1="70.3" x2="37.1" y2="85.3" stroke="#d89a28" stroke-width="0.85" opacity="1"/><line x1="51.7" y1="70.3" x2="71.8" y2="86.4" stroke="#d89a28" stroke-width="0.85" opacity="1"/><line x1="51.7" y1="70.3" x2="77.2" y2="82.7" stroke="#d89a28" stroke-width="0.85" opacity="1"/><line x1="84.9" y1="61.7" x2="77.2" y2="46.7" stroke="#d89a28" stroke-width="0.85" opacity="1"/><line x1="84.9" y1="61.7" x2="67.6" y2="54.0" stroke="#d89a28" stroke-width="0.85" opacity="1"/><line x1="84.9" y1="61.7" x2="108.8" y2="49.8" stroke="#d89a28" stroke-width="0.85" opacity="1"/><line x1="84.9" y1="61.7" x2="103.4" y2="53.7" stroke="#d89a28" stroke-width="0.85" opacity="1"/><line x1="84.9" y1="61.7" x2="71.8" y2="86.4" stroke="#d89a28" stroke-width="0.85" opacity="1"/><line x1="84.9" y1="61.7" x2="77.2" y2="82.7" stroke="#d89a28" stroke-width="0.85" opacity="1"/><line x1="91.8" y1="76.8" x2="108.8" y2="49.8" stroke="#d89a28" stroke-width="0.85" opacity="1"/><line x1="91.8" y1="76.8" x2="103.4" y2="53.7" stroke="#d89a28" stroke-width="0.85" opacity="1"/><line x1="91.8" y1="76.8" x2="71.8" y2="86.4" stroke="#d89a28" stroke-width="0.85" opacity="1"/><line x1="91.8" y1="76.8" x2="77.2" y2="82.7" stroke="#d89a28" stroke-width="0.85" opacity="1"/><line x1="91.8" y1="76.8" x2="108.0" y2="86.0" stroke="#d89a28" stroke-width="0.85" opacity="1"/><line x1="99.6" y1="25.6" x2="102.6" y2="18.9" stroke="#d89a28" stroke-width="0.85" opacity="1"/><circle cx="41.4" cy="10.5" r="2.1" fill="url(#gm)"/><circle cx="32.1" cy="18.2" r="2.1" fill="url(#gm)"/><circle cx="112.4" cy="11.2" r="2.1" fill="url(#gm)"/><circle cx="102.6" cy="18.9" r="2.1" fill="url(#gm)"/><circle cx="72.5" cy="49.8" r="2.1" fill="url(#gm)"/><circle cx="42.0" cy="82.2" r="2.1" fill="url(#gm)"/><circle cx="32.1" cy="89.2" r="2.1" fill="url(#gm)"/><circle cx="112.7" cy="82.2" r="2.1" fill="url(#gm)"/><circle cx="103.1" cy="89.5" r="2.1" fill="url(#gm)"/><circle cx="36.7" cy="14.3" r="2.9" fill="url(#gw)"/><circle cx="76.4" cy="11.2" r="2.9" fill="url(#gw)"/><circle cx="71.3" cy="15.1" r="2.9" fill="url(#gw)"/><circle cx="107.3" cy="14.8" r="2.9" fill="url(#gw)"/><circle cx="37.8" cy="49.5" r="2.9" fill="url(#gw)"/><circle cx="32.7" cy="52.9" r="2.9" fill="url(#gw)"/><circle cx="77.2" cy="46.7" r="2.9" fill="url(#gw)"/><circle cx="67.6" cy="54.0" r="2.9" fill="url(#gw)"/><circle cx="108.8" cy="49.8" r="2.9" fill="url(#gw)"/><circle cx="103.4" cy="53.7" r="2.9" fill="url(#gw)"/><circle cx="37.1" cy="85.3" r="2.9" fill="url(#gw)"/><circle cx="71.8" cy="86.4" r="2.9" fill="url(#gw)"/><circle cx="77.2" cy="82.7" r="2.9" fill="url(#gw)"/><circle cx="108.0" cy="86.0" r="2.9" fill="url(#gw)"/><circle cx="46.3" cy="28.2" r="4.9" fill="url(#gy)"/><circle cx="62.5" cy="35.9" r="4.9" fill="url(#gy)"/><circle cx="83.3" cy="40.6" r="4.9" fill="url(#gy)"/><circle cx="99.6" cy="25.6" r="4.9" fill="url(#gy)"/><circle cx="57.9" cy="62.6" r="4.9" fill="url(#gy)"/><circle cx="51.7" cy="70.3" r="4.9" fill="url(#gy)"/><circle cx="84.9" cy="61.7" r="4.9" fill="url(#gy)"/><circle cx="91.8" cy="76.8" r="4.9" fill="url(#gy)"/><rect x="133.5" y="84.5" width="10" height="15" fill="#202020" stroke="#505050" stroke-width="0.5"/><circle cx="137.0" cy="87.5" r="1.8" fill="#e028d8"/><circle cx="137.0" cy="92.0" r="1.8" fill="#f0e800"/><circle cx="137.0" cy="96.5" r="1.8" fill="#e8e8e8"/><line x1="139.5" y1="87.5" x2="142.5" y2="87.5" stroke="#c0c0c0" stroke-width="0.6" opacity="1"/><line x1="139.5" y1="92.0" x2="142.5" y2="92.0" stroke="#c0c0c0" stroke-width="0.6" opacity="1"/><line x1="139.5" y1="96.5" x2="142.5" y2="96.5" stroke="#c0c0c0" stroke-width="0.6" opacity="1"/></svg>
<div class="t" style="left:212px;top:205.04px;font-size:11px;color:#000;font-weight:bold;letter-spacing:0.55px;">Picture 1</div>
<div class="t" style="left:212px;top:218.04px;font-size:11px;color:#000;letter-spacing:-0.25px;-webkit-text-stroke:0.2px #000;">4 atom(s) in parameter list</div>
<div class="t" style="left:212px;top:231.04px;font-size:11px;color:#000;letter-spacing:-0.25px;-webkit-text-stroke:0.2px #000;">0 molecular, 1 polymeric unit(s)</div>
<div class="t" style="left:212px;top:244.04px;font-size:11px;color:#000;letter-spacing:-0.25px;-webkit-text-stroke:0.2px #000;">31 created atom(s)</div>
<div class="t" style="left:212px;top:257.05px;font-size:11px;color:#000;letter-spacing:-0.25px;-webkit-text-stroke:0.2px #000;">&nbsp;=&nbsp;9*P+5&nbsp;8*S-2&nbsp;14*Na+1</div>
<div class="t" style="left:212px;top:270.05px;font-size:11px;color:#000;letter-spacing:-0.25px;-webkit-text-stroke:0.2px #000;">36 created bond(s) (0 contacts, 0</div>
<div class="t" style="left:212px;top:283.05px;font-size:11px;color:#000;letter-spacing:-0.25px;-webkit-text-stroke:0.2px #000;">H-bonds)</div>
<div class="t" style="left:212px;top:296.05px;font-size:11px;color:#000;letter-spacing:-0.25px;-webkit-text-stroke:0.2px #000;">0 created molecule(s) (0 frag.)</div>
<div class="t" style="left:212px;top:309.05px;font-size:11px;color:#000;letter-spacing:-0.25px;-webkit-text-stroke:0.2px #000;">12 cell edges</div>
<div class="t" style="left:212px;top:322.05px;font-size:11px;color:#000;letter-spacing:-0.25px;-webkit-text-stroke:0.2px #000;">0 polyhedra (0 faces)</div>
<div class="t" style="left:212px;top:335.05px;font-size:11px;color:#000;letter-spacing:-0.25px;-webkit-text-stroke:0.2px #000;">0 atom, 0 bond label(s)</div>
<svg style="left:392px;top:199px" width="161" height="147"><path d="M0.5 146.5V0.5H80.5V6.5H160.5V146.5Z" fill="url(#cg)" stroke="#a0a0a0"/></svg>
<svg style="left:400px;top:220px" width="145" height="110" viewBox="0 0 145 110"><rect width="145" height="110" fill="#000"/><line x1="12.3" y1="2.0" x2="12.3" y2="13.0" stroke="#b0b0b0" stroke-width="0.5" opacity="1"/><line x1="12.3" y1="13.0" x2="21.0" y2="12.8" stroke="#b0b0b0" stroke-width="0.5" opacity="1"/><circle cx="12.3" cy="6.0" r="0.7" fill="#e0e0e0"/><circle cx="16.5" cy="12.8" r="0.7" fill="#e0e0e0"/><rect x="40.3" y="29.0" width="56.5" height="56.5" fill="none" stroke="#b8b8b8" stroke-width="0.9"/><rect x="47.3" y="23.3" width="56.6" height="56.5" fill="none" stroke="#b8b8b8" stroke-width="0.9"/><line x1="40.3" y1="29.0" x2="47.3" y2="23.3" stroke="#b8b8b8" stroke-width="0.9" opacity="1"/><line x1="96.8" y1="29.0" x2="103.9" y2="23.3" stroke="#b8b8b8" stroke-width="0.9" opacity="1"/><line x1="40.3" y1="85.5" x2="47.3" y2="79.8" stroke="#b8b8b8" stroke-width="0.9" opacity="1"/><line x1="96.8" y1="85.5" x2="103.9" y2="79.8" stroke="#b8b8b8" stroke-width="0.9" opacity="1"/><polygon points="30.4,19.1 38.2,13.4 55.1,14.1 57.9,31.8 50.9,38.9 29.7,41.0" fill="#1a7d9c" opacity="1" stroke="none" stroke-width="0.6"/><polygon points="30.4,19.1 57.9,31.8 50.9,38.9 29.7,41.0" fill="#22a0c8" opacity="0.8" stroke="none" stroke-width="0.6"/><line x1="29.7" y1="41.0" x2="55.1" y2="14.1" stroke="#3050e0" stroke-width="0.8" opacity="1"/><circle cx="30.4" cy="19.1" r="1.4" fill="#f0e800"/><circle cx="38.2" cy="13.4" r="1.4" fill="#f0e800"/><circle cx="55.1" cy="14.1" r="1.4" fill="#f0e800"/><circle cx="57.9" cy="31.8" r="1.4" fill="#f0e800"/><circle cx="50.9" cy="38.9" r="1.4" fill="#f0e800"/><circle cx="29.7" cy="41.0" r="1.4" fill="#f0e800"/><polygon points="86.9,19.1 94.7,13.4 111.6,14.1 115.2,31.8 107.4,37.9 86.2,41.0" fill="#1a7d9c" opacity="1" stroke="none" stroke-width="0.6"/><polygon points="86.9,19.1 115.2,31.8 107.4,37.9 86.2,41.0" fill="#22a0c8" opacity="0.8" stroke="none" stroke-width="0.6"/><line x1="86.2" y1="41.0" x2="111.6" y2="14.1" stroke="#3050e0" stroke-width="0.8" opacity="1"/><circle cx="86.9" cy="19.1" r="1.4" fill="#f0e800"/><circle cx="94.7" cy="13.4" r="1.4" fill="#f0e800"/><circle cx="111.6" cy="14.1" r="1.4" fill="#f0e800"/><circle cx="115.2" cy="31.8" r="1.4" fill="#f0e800"/><circle cx="107.4" cy="37.9" r="1.4" fill="#f0e800"/><circle cx="86.2" cy="41.0" r="1.4" fill="#f0e800"/><polygon points="30.4,75.6 38.9,70.0 55.1,72.1 59.4,88.3 51.6,94.0 29.7,96.8" fill="#1a7d9c" opacity="1" stroke="none" stroke-width="0.6"/><polygon points="30.4,75.6 59.4,88.3 51.6,94.0 29.7,96.8" fill="#22a0c8" opacity="0.8" stroke="none" stroke-width="0.6"/><line x1="29.7" y1="96.8" x2="55.1" y2="72.1" stroke="#3050e0" stroke-width="0.8" opacity="1"/><circle cx="30.4" cy="75.6" r="1.4" fill="#f0e800"/><circle cx="38.9" cy="70.0" r="1.4" fill="#f0e800"/><circle cx="55.1" cy="72.1" r="1.4" fill="#f0e800"/><circle cx="59.4" cy="88.3" r="1.4" fill="#f0e800"/><circle cx="51.6" cy="94.0" r="1.4" fill="#f0e800"/><circle cx="29.7" cy="96.8" r="1.4" fill="#f0e800"/><polygon points="86.9,76.3 94.7,70.0 111.6,70.7 115.9,88.3 108.1,94.0 86.2,97.5" fill="#1a7d9c" opacity="1" stroke="none" stroke-width="0.6"/><polygon points="86.9,76.3 115.9,88.3 108.1,94.0 86.2,97.5" fill="#22a0c8" opacity="0.8" stroke="none" stroke-width="0.6"/><line x1="86.2" y1="97.5" x2="111.6" y2="70.7" stroke="#3050e0" stroke-width="0.8" opacity="1"/><circle cx="86.9" cy="76.3" r="1.4" fill="#f0e800"/><circle cx="94.7" cy="70.0" r="1.4" fill="#f0e800"/><circle cx="111.6" cy="70.7" r="1.4" fill="#f0e800"/><circle cx="115.9" cy="88.3" r="1.4" fill="#f0e800"/><circle cx="108.1" cy="94.0" r="1.4" fill="#f0e800"/><circle cx="86.2" cy="97.5" r="1.4" fill="#f0e800"/><line x1="71.4" y1="26.9" x2="52.0" y2="37.0" stroke="#e0a020" stroke-width="1.0" opacity="1"/><line x1="71.4" y1="26.9" x2="90.0" y2="38.0" stroke="#e0a020" stroke-width="1.0" opacity="1"/><line x1="71.4" y1="26.9" x2="64.3" y2="43.8" stroke="#e0a020" stroke-width="1.0" opacity="1"/><line x1="71.4" y1="26.9" x2="81.3" y2="46.6" stroke="#e0a020" stroke-width="1.0" opacity="1"/><line x1="44.5" y1="54.0" x2="52.0" y2="37.0" stroke="#e0a020" stroke-width="1.0" opacity="1"/><line x1="44.5" y1="54.0" x2="55.0" y2="72.0" stroke="#e0a020" stroke-width="1.0" opacity="1"/><line x1="44.5" y1="54.0" x2="64.3" y2="43.8" stroke="#e0a020" stroke-width="1.0" opacity="1"/><line x1="44.5" y1="54.0" x2="62.2" y2="65.0" stroke="#e0a020" stroke-width="1.0" opacity="1"/><line x1="100.6" y1="54.4" x2="90.0" y2="38.0" stroke="#e0a020" stroke-width="1.0" opacity="1"/><line x1="100.6" y1="54.4" x2="88.0" y2="73.0" stroke="#e0a020" stroke-width="1.0" opacity="1"/><line x1="100.6" y1="54.4" x2="81.3" y2="46.6" stroke="#e0a020" stroke-width="1.0" opacity="1"/><line x1="100.6" y1="54.4" x2="82.0" y2="64.3" stroke="#e0a020" stroke-width="1.0" opacity="1"/><line x1="71.8" y1="83.4" x2="55.0" y2="72.0" stroke="#e0a020" stroke-width="1.0" opacity="1"/><line x1="71.8" y1="83.4" x2="88.0" y2="73.0" stroke="#e0a020" stroke-width="1.0" opacity="1"/><line x1="71.8" y1="83.4" x2="82.0" y2="64.3" stroke="#e0a020" stroke-width="1.0" opacity="1"/><line x1="71.8" y1="83.4" x2="62.2" y2="65.0" stroke="#e0a020" stroke-width="1.0" opacity="1"/><polygon points="64.3,43.8 81.3,46.6 82.0,64.3 62.2,65.0" fill="#1c8aa8" opacity="1" stroke="none" stroke-width="0.6"/><polygon points="64.3,43.8 81.3,46.6 62.2,65.0" fill="#2aa8c4" opacity="0.7" stroke="none" stroke-width="0.6"/><circle cx="64.3" cy="43.8" r="1.4" fill="#f0e800"/><circle cx="81.3" cy="46.6" r="1.4" fill="#f0e800"/><circle cx="82.0" cy="64.3" r="1.4" fill="#f0e800"/><circle cx="62.2" cy="65.0" r="1.4" fill="#f0e800"/><circle cx="74.9" cy="23.7" r="3" fill="url(#gw)"/><circle cx="71.4" cy="26.9" r="3" fill="url(#gw)"/><circle cx="44.5" cy="54.0" r="3" fill="url(#gw)"/><circle cx="40.7" cy="57.2" r="3" fill="url(#gw)"/><circle cx="100.6" cy="54.4" r="3" fill="url(#gw)"/><circle cx="96.8" cy="57.2" r="3" fill="url(#gw)"/><circle cx="75.6" cy="80.6" r="3" fill="url(#gw)"/><circle cx="71.8" cy="83.4" r="3" fill="url(#gw)"/><circle cx="68.1" cy="57.7" r="2.8" fill="url(#gw)"/><rect x="133.5" y="94.5" width="10" height="15" fill="#202020" stroke="#505050" stroke-width="0.5"/><circle cx="137.0" cy="97.5" r="1.8" fill="#e028d8"/><circle cx="137.0" cy="102.0" r="1.8" fill="#f0e800"/><circle cx="137.0" cy="106.5" r="1.8" fill="#e8e8e8"/><line x1="139.5" y1="97.5" x2="142.5" y2="97.5" stroke="#c0c0c0" stroke-width="0.6" opacity="1"/><line x1="139.5" y1="102.0" x2="142.5" y2="102.0" stroke="#c0c0c0" stroke-width="0.6" opacity="1"/><line x1="139.5" y1="106.5" x2="142.5" y2="106.5" stroke="#c0c0c0" stroke-width="0.6" opacity="1"/></svg>
<div class="t" style="left:560px;top:205.04px;font-size:11px;color:#000;font-weight:bold;letter-spacing:0.55px;">Unit cell with PO4 polyhe...</div>
<div class="t" style="left:560px;top:218.04px;font-size:11px;color:#000;letter-spacing:-0.25px;-webkit-text-stroke:0.2px #000;">4 atom(s) in parameter list</div>
<div class="t" style="left:560px;top:231.04px;font-size:11px;color:#000;letter-spacing:-0.25px;-webkit-text-stroke:0.2px #000;">0 molecular, 1 polymeric unit(s)</div>
<div class="t" style="left:560px;top:244.04px;font-size:11px;color:#000;letter-spacing:-0.25px;-webkit-text-stroke:0.2px #000;">59 created atom(s)</div>
<div class="t" style="left:560px;top:257.05px;font-size:11px;color:#000;letter-spacing:-0.25px;-webkit-text-stroke:0.2px #000;">&nbsp;=&nbsp;9*P+5&nbsp;36*S-2&nbsp;14*Na+1</div>
<div class="t" style="left:560px;top:270.05px;font-size:11px;color:#000;letter-spacing:-0.25px;-webkit-text-stroke:0.2px #000;">36 created bond(s) (0 contacts, 0</div>
<div class="t" style="left:560px;top:283.05px;font-size:11px;color:#000;letter-spacing:-0.25px;-webkit-text-stroke:0.2px #000;">H-bonds)</div>
<div class="t" style="left:560px;top:296.05px;font-size:11px;color:#000;letter-spacing:-0.25px;-webkit-text-stroke:0.2px #000;">0 created molecule(s) (0 frag.)</div>
<div class="t" style="left:560px;top:309.05px;font-size:11px;color:#000;letter-spacing:-0.25px;-webkit-text-stroke:0.2px #000;">12 cell edges</div>
<div class="t" style="left:560px;top:322.05px;font-size:11px;color:#000;letter-spacing:-0.25px;-webkit-text-stroke:0.2px #000;">9 polyhedra (36 faces)</div>
<div class="t" style="left:560px;top:335.05px;font-size:11px;color:#000;letter-spacing:-0.25px;-webkit-text-stroke:0.2px #000;">0 atom, 0 bond label(s)</div>
<div class="b" style="left:731px;top:191px;width:337px;height:168px;background:linear-gradient(180deg,#dcedfc 0,#c4e0fa 50%,#aed5f8 100%);border:1px solid #3d80c4;box-sizing:border-box;"></div>
<svg style="left:740px;top:199px" width="161" height="147"><path d="M0.5 146.5V0.5H80.5V6.5H160.5V146.5Z" fill="url(#cg)" stroke="#a0a0a0"/></svg>
<svg style="left:748px;top:220px" width="145" height="110" viewBox="0 0 145 110"><rect width="145" height="110" fill="#60639a"/><line x1="12.3" y1="2.0" x2="12.3" y2="13.0" stroke="#b0b0b0" stroke-width="0.5" opacity="1"/><line x1="12.3" y1="13.0" x2="21.0" y2="12.8" stroke="#b0b0b0" stroke-width="0.5" opacity="1"/><circle cx="12.3" cy="6.0" r="0.7" fill="#e0e0e0"/><circle cx="16.5" cy="12.8" r="0.7" fill="#e0e0e0"/><line x1="34.3" y1="16.2" x2="26.6" y2="32.3" stroke="#c8905a" stroke-width="0.6" opacity="1"/><line x1="34.3" y1="16.2" x2="49.2" y2="9.6" stroke="#c8905a" stroke-width="0.6" opacity="1"/><line x1="34.3" y1="16.2" x2="49.2" y2="32.3" stroke="#c8905a" stroke-width="0.6" opacity="1"/><line x1="34.3" y1="16.2" x2="26.6" y2="9.6" stroke="#c8905a" stroke-width="0.6" opacity="1"/><line x1="64.3" y1="17.6" x2="49.2" y2="9.6" stroke="#c8905a" stroke-width="0.6" opacity="1"/><line x1="64.3" y1="17.6" x2="49.2" y2="32.3" stroke="#c8905a" stroke-width="0.6" opacity="1"/><line x1="64.3" y1="17.6" x2="71.8" y2="32.3" stroke="#c8905a" stroke-width="0.6" opacity="1"/><line x1="64.3" y1="17.6" x2="71.8" y2="9.6" stroke="#c8905a" stroke-width="0.6" opacity="1"/><line x1="41.7" y1="23.7" x2="26.6" y2="32.3" stroke="#c8905a" stroke-width="0.6" opacity="1"/><line x1="41.7" y1="23.7" x2="49.2" y2="9.6" stroke="#c8905a" stroke-width="0.6" opacity="1"/><line x1="41.7" y1="23.7" x2="49.2" y2="32.3" stroke="#c8905a" stroke-width="0.6" opacity="1"/><line x1="41.7" y1="23.7" x2="26.6" y2="9.6" stroke="#c8905a" stroke-width="0.6" opacity="1"/><line x1="57.5" y1="24.7" x2="49.2" y2="9.6" stroke="#c8905a" stroke-width="0.6" opacity="1"/><line x1="57.5" y1="24.7" x2="49.2" y2="32.3" stroke="#c8905a" stroke-width="0.6" opacity="1"/><line x1="57.5" y1="24.7" x2="71.8" y2="32.3" stroke="#c8905a" stroke-width="0.6" opacity="1"/><line x1="57.5" y1="24.7" x2="71.8" y2="9.6" stroke="#c8905a" stroke-width="0.6" opacity="1"/><line x1="40.5" y1="38.8" x2="26.6" y2="32.3" stroke="#c8905a" stroke-width="0.6" opacity="1"/><line x1="40.5" y1="38.8" x2="49.2" y2="32.3" stroke="#c8905a" stroke-width="0.6" opacity="1"/><line x1="40.5" y1="38.8" x2="49.2" y2="55.1" stroke="#c8905a" stroke-width="0.6" opacity="1"/><line x1="40.5" y1="38.8" x2="26.6" y2="55.1" stroke="#c8905a" stroke-width="0.6" opacity="1"/><line x1="56.3" y1="39.9" x2="49.2" y2="32.3" stroke="#c8905a" stroke-width="0.6" opacity="1"/><line x1="56.3" y1="39.9" x2="49.2" y2="55.1" stroke="#c8905a" stroke-width="0.6" opacity="1"/><line x1="56.3" y1="39.9" x2="71.8" y2="32.3" stroke="#c8905a" stroke-width="0.6" opacity="1"/><line x1="56.3" y1="39.9" x2="71.8" y2="55.1" stroke="#c8905a" stroke-width="0.6" opacity="1"/><line x1="33.7" y1="46.4" x2="26.6" y2="32.3" stroke="#c8905a" stroke-width="0.6" opacity="1"/><line x1="33.7" y1="46.4" x2="49.2" y2="32.3" stroke="#c8905a" stroke-width="0.6" opacity="1"/><line x1="33.7" y1="46.4" x2="49.2" y2="55.1" stroke="#c8905a" stroke-width="0.6" opacity="1"/><line x1="33.7" y1="46.4" x2="26.6" y2="55.1" stroke="#c8905a" stroke-width="0.6" opacity="1"/><line x1="63.8" y1="47.1" x2="49.2" y2="32.3" stroke="#c8905a" stroke-width="0.6" opacity="1"/><line x1="63.8" y1="47.1" x2="49.2" y2="55.1" stroke="#c8905a" stroke-width="0.6" opacity="1"/><line x1="63.8" y1="47.1" x2="71.8" y2="32.3" stroke="#c8905a" stroke-width="0.6" opacity="1"/><line x1="63.8" y1="47.1" x2="71.8" y2="55.1" stroke="#c8905a" stroke-width="0.6" opacity="1"/><line x1="34.3" y1="61.7" x2="26.6" y2="77.7" stroke="#c8905a" stroke-width="0.6" opacity="1"/><line x1="34.3" y1="61.7" x2="49.2" y2="55.1" stroke="#c8905a" stroke-width="0.6" opacity="1"/><line x1="34.3" y1="61.7" x2="49.2" y2="77.7" stroke="#c8905a" stroke-width="0.6" opacity="1"/><line x1="34.3" y1="61.7" x2="26.6" y2="55.1" stroke="#c8905a" stroke-width="0.6" opacity="1"/><line x1="64.3" y1="63.1" x2="49.2" y2="55.1" stroke="#c8905a" stroke-width="0.6" opacity="1"/><line x1="64.3" y1="63.1" x2="49.2" y2="77.7" stroke="#c8905a" stroke-width="0.6" opacity="1"/><line x1="64.3" y1="63.1" x2="71.8" y2="77.7" stroke="#c8905a" stroke-width="0.6" opacity="1"/><line x1="64.3" y1="63.1" x2="71.8" y2="55.1" stroke="#c8905a" stroke-width="0.6" opacity="1"/><line x1="41.7" y1="69.2" x2="26.6" y2="77.7" stroke="#c8905a" stroke-width="0.6" opacity="1"/><line x1="41.7" y1="69.2" x2="49.2" y2="55.1" stroke="#c8905a" stroke-width="0.6" opacity="1"/><line x1="41.7" y1="69.2" x2="49.2" y2="77.7" stroke="#c8905a" stroke-width="0.6" opacity="1"/><line x1="41.7" y1="69.2" x2="26.6" y2="55.1" stroke="#c8905a" stroke-width="0.6" opacity="1"/><line x1="57.5" y1="70.2" x2="49.2" y2="55.1" stroke="#c8905a" stroke-width="0.6" opacity="1"/><line x1="57.5" y1="70.2" x2="49.2" y2="77.7" stroke="#c8905a" stroke-width="0.6" opacity="1"/><line x1="57.5" y1="70.2" x2="71.8" y2="77.7" stroke="#c8905a" stroke-width="0.6" opacity="1"/><line x1="57.5" y1="70.2" x2="71.8" y2="55.1" stroke="#c8905a" stroke-width="0.6" opacity="1"/><line x1="40.5" y1="84.3" x2="26.6" y2="77.7" stroke="#c8905a" stroke-width="0.6" opacity="1"/><line x1="40.5" y1="84.3" x2="49.2" y2="77.7" stroke="#c8905a" stroke-width="0.6" opacity="1"/><line x1="40.5" y1="84.3" x2="49.2" y2="100.3" stroke="#c8905a" stroke-width="0.6" opacity="1"/><line x1="40.5" y1="84.3" x2="26.6" y2="100.3" stroke="#c8905a" stroke-width="0.6" opacity="1"/><line x1="56.3" y1="85.4" x2="49.2" y2="77.7" stroke="#c8905a" stroke-width="0.6" opacity="1"/><line x1="56.3" y1="85.4" x2="49.2" y2="100.3" stroke="#c8905a" stroke-width="0.6" opacity="1"/><line x1="56.3" y1="85.4" x2="71.8" y2="77.7" stroke="#c8905a" stroke-width="0.6" opacity="1"/><line x1="56.3" y1="85.4" x2="71.8" y2="100.3" stroke="#c8905a" stroke-width="0.6" opacity="1"/><line x1="33.7" y1="91.9" x2="26.6" y2="77.7" stroke="#c8905a" stroke-width="0.6" opacity="1"/><line x1="33.7" y1="91.9" x2="49.2" y2="77.7" stroke="#c8905a" stroke-width="0.6" opacity="1"/><line x1="33.7" y1="91.9" x2="49.2" y2="100.3" stroke="#c8905a" stroke-width="0.6" opacity="1"/><line x1="33.7" y1="91.9" x2="26.6" y2="100.3" stroke="#c8905a" stroke-width="0.6" opacity="1"/><line x1="63.8" y1="92.6" x2="49.2" y2="77.7" stroke="#c8905a" stroke-width="0.6" opacity="1"/><line x1="63.8" y1="92.6" x2="49.2" y2="100.3" stroke="#c8905a" stroke-width="0.6" opacity="1"/><line x1="63.8" y1="92.6" x2="71.8" y2="77.7" stroke="#c8905a" stroke-width="0.6" opacity="1"/><line x1="63.8" y1="92.6" x2="71.8" y2="100.3" stroke="#c8905a" stroke-width="0.6" opacity="1"/><line x1="79.5" y1="16.2" x2="71.8" y2="32.3" stroke="#c8905a" stroke-width="0.6" opacity="1"/><line x1="79.5" y1="16.2" x2="94.4" y2="9.6" stroke="#c8905a" stroke-width="0.6" opacity="1"/><line x1="79.5" y1="16.2" x2="94.4" y2="32.3" stroke="#c8905a" stroke-width="0.6" opacity="1"/><line x1="79.5" y1="16.2" x2="71.8" y2="9.6" stroke="#c8905a" stroke-width="0.6" opacity="1"/><line x1="109.5" y1="17.6" x2="94.4" y2="9.6" stroke="#c8905a" stroke-width="0.6" opacity="1"/><line x1="109.5" y1="17.6" x2="94.4" y2="32.3" stroke="#c8905a" stroke-width="0.6" opacity="1"/><line x1="109.5" y1="17.6" x2="117.0" y2="32.3" stroke="#c8905a" stroke-width="0.6" opacity="1"/><line x1="109.5" y1="17.6" x2="117.0" y2="9.6" stroke="#c8905a" stroke-width="0.6" opacity="1"/><line x1="86.9" y1="23.7" x2="71.8" y2="32.3" stroke="#c8905a" stroke-width="0.6" opacity="1"/><line x1="86.9" y1="23.7" x2="94.4" y2="9.6" stroke="#c8905a" stroke-width="0.6" opacity="1"/><line x1="86.9" y1="23.7" x2="94.4" y2="32.3" stroke="#c8905a" stroke-width="0.6" opacity="1"/><line x1="86.9" y1="23.7" x2="71.8" y2="9.6" stroke="#c8905a" stroke-width="0.6" opacity="1"/><line x1="102.7" y1="24.7" x2="94.4" y2="9.6" stroke="#c8905a" stroke-width="0.6" opacity="1"/><line x1="102.7" y1="24.7" x2="94.4" y2="32.3" stroke="#c8905a" stroke-width="0.6" opacity="1"/><line x1="102.7" y1="24.7" x2="117.0" y2="32.3" stroke="#c8905a" stroke-width="0.6" opacity="1"/><line x1="102.7" y1="24.7" x2="117.0" y2="9.6" stroke="#c8905a" stroke-width="0.6" opacity="1"/><line x1="85.7" y1="38.8" x2="71.8" y2="32.3" stroke="#c8905a" stroke-width="0.6" opacity="1"/><line x1="85.7" y1="38.8" x2="94.4" y2="32.3" stroke="#c8905a" stroke-width="0.6" opacity="1"/><line x1="85.7" y1="38.8" x2="94.4" y2="55.1" stroke="#c8905a" stroke-width="0.6" opacity="1"/><line x1="85.7" y1="38.8" x2="71.8" y2="55.1" stroke="#c8905a" stroke-width="0.6" opacity="1"/><line x1="101.5" y1="39.9" x2="94.4" y2="32.3" stroke="#c8905a" stroke-width="0.6" opacity="1"/><line x1="101.5" y1="39.9" x2="94.4" y2="55.1" stroke="#c8905a" stroke-width="0.6" opacity="1"/><line x1="101.5" y1="39.9" x2="117.0" y2="32.3" stroke="#c8905a" stroke-width="0.6" opacity="1"/><line x1="101.5" y1="39.9" x2="117.0" y2="55.1" stroke="#c8905a" stroke-width="0.6" opacity="1"/><line x1="78.9" y1="46.4" x2="71.8" y2="32.3" stroke="#c8905a" stroke-width="0.6" opacity="1"/><line x1="78.9" y1="46.4" x2="94.4" y2="32.3" stroke="#c8905a" stroke-width="0.6" opacity="1"/><line x1="78.9" y1="46.4" x2="94.4" y2="55.1" stroke="#c8905a" stroke-width="0.6" opacity="1"/><line x1="78.9" y1="46.4" x2="71.8" y2="55.1" stroke="#c8905a" stroke-width="0.6" opacity="1"/><line x1="109.0" y1="47.1" x2="94.4" y2="32.3" stroke="#c8905a" stroke-width="0.6" opacity="1"/><line x1="109.0" y1="47.1" x2="94.4" y2="55.1" stroke="#c8905a" stroke-width="0.6" opacity="1"/><line x1="109.0" y1="47.1" x2="117.0" y2="32.3" stroke="#c8905a" stroke-width="0.6" opacity="1"/><line x1="109.0" y1="47.1" x2="117.0" y2="55.1" stroke="#c8905a" stroke-width="0.6" opacity="1"/><line x1="79.5" y1="61.7" x2="71.8" y2="77.7" stroke="#c8905a" stroke-width="0.6" opacity="1"/><line x1="79.5" y1="61.7" x2="94.4" y2="55.1" stroke="#c8905a" stroke-width="0.6" opacity="1"/><line x1="79.5" y1="61.7" x2="94.4" y2="77.7" stroke="#c8905a" stroke-width="0.6" opacity="1"/><line x1="79.5" y1="61.7" x2="71.8" y2="55.1" stroke="#c8905a" stroke-width="0.6" opacity="1"/><line x1="109.5" y1="63.1" x2="94.4" y2="55.1" stroke="#c8905a" stroke-width="0.6" opacity="1"/><line x1="109.5" y1="63.1" x2="94.4" y2="77.7" stroke="#c8905a" stroke-width="0.6" opacity="1"/><line x1="109.5" y1="63.1" x2="117.0" y2="77.7" stroke="#c8905a" stroke-width="0.6" opacity="1"/><line x1="109.5" y1="63.1" x2="117.0" y2="55.1" stroke="#c8905a" stroke-width="0.6" opacity="1"/><line x1="86.9" y1="69.2" x2="71.8" y2="77.7" stroke="#c8905a" stroke-width="0.6" opacity="1"/><line x1="86.9" y1="69.2" x2="94.4" y2="55.1" stroke="#c8905a" stroke-width="0.6" opacity="1"/><line x1="86.9" y1="69.2" x2="94.4" y2="77.7" stroke="#c8905a" stroke-width="0.6" opacity="1"/><line x1="86.9" y1="69.2" x2="71.8" y2="55.1" stroke="#c8905a" stroke-width="0.6" opacity="1"/><line x1="102.7" y1="70.2" x2="94.4" y2="55.1" stroke="#c8905a" stroke-width="0.6" opacity="1"/><line x1="102.7" y1="70.2" x2="94.4" y2="77.7" stroke="#c8905a" stroke-width="0.6" opacity="1"/><line x1="102.7" y1="70.2" x2="117.0" y2="77.7" stroke="#c8905a" stroke-width="0.6" opacity="1"/><line x1="102.7" y1="70.2" x2="117.0" y2="55.1" stroke="#c8905a" stroke-width="0.6" opacity="1"/><line x1="85.7" y1="84.3" x2="71.8" y2="77.7" stroke="#c8905a" stroke-width="0.6" opacity="1"/><line x1="85.7" y1="84.3" x2="94.4" y2="77.7" stroke="#c8905a" stroke-width="0.6" opacity="1"/><line x1="85.7" y1="84.3" x2="94.4" y2="100.3" stroke="#c8905a" stroke-width="0.6" opacity="1"/><line x1="85.7" y1="84.3" x2="71.8" y2="100.3" stroke="#c8905a" stroke-width="0.6" opacity="1"/><line x1="101.5" y1="85.4" x2="94.4" y2="77.7" stroke="#c8905a" stroke-width="0.6" opacity="1"/><line x1="101.5" y1="85.4" x2="94.4" y2="100.3" stroke="#c8905a" stroke-width="0.6" opacity="1"/><line x1="101.5" y1="85.4" x2="117.0" y2="77.7" stroke="#c8905a" stroke-width="0.6" opacity="1"/><line x1="101.5" y1="85.4" x2="117.0" y2="100.3" stroke="#c8905a" stroke-width="0.6" opacity="1"/><line x1="78.9" y1="91.9" x2="71.8" y2="77.7" stroke="#c8905a" stroke-width="0.6" opacity="1"/><line x1="78.9" y1="91.9" x2="94.4" y2="77.7" stroke="#c8905a" stroke-width="0.6" opacity="1"/><line x1="78.9" y1="91.9" x2="94.4" y2="100.3" stroke="#c8905a" stroke-width="0.6" opacity="1"/><line x1="78.9" y1="91.9" x2="71.8" y2="100.3" stroke="#c8905a" stroke-width="0.6" opacity="1"/><line x1="109.0" y1="92.6" x2="94.4" y2="77.7" stroke="#c8905a" stroke-width="0.6" opacity="1"/><line x1="109.0" y1="92.6" x2="94.4" y2="100.3" stroke="#c8905a" stroke-width="0.6" opacity="1"/><line x1="109.0" y1="92.6" x2="117.0" y2="77.7" stroke="#c8905a" stroke-width="0.6" opacity="1"/><line x1="109.0" y1="92.6" x2="117.0" y2="100.3" stroke="#c8905a" stroke-width="0.6" opacity="1"/><line x1="26.6" y1="9.6" x2="117.0" y2="9.6" stroke="#e8e8f4" stroke-width="0.8" opacity="1"/><line x1="26.6" y1="9.6" x2="26.6" y2="100.3" stroke="#e8e8f4" stroke-width="0.8" opacity="1"/><line x1="26.6" y1="55.1" x2="117.0" y2="55.1" stroke="#e8e8f4" stroke-width="0.8" opacity="1"/><line x1="71.8" y1="9.6" x2="71.8" y2="100.3" stroke="#e8e8f4" stroke-width="0.8" opacity="1"/><line x1="26.6" y1="100.3" x2="117.0" y2="100.3" stroke="#e8e8f4" stroke-width="0.8" opacity="1"/><line x1="117.0" y1="9.6" x2="117.0" y2="100.3" stroke="#e8e8f4" stroke-width="0.8" opacity="1"/><circle cx="26.6" cy="9.6" r="1.6" fill="#d030d0"/><circle cx="26.6" cy="55.1" r="1.6" fill="#d030d0"/><circle cx="26.6" cy="100.3" r="1.6" fill="#d030d0"/><circle cx="71.8" cy="9.6" r="1.6" fill="#d030d0"/><circle cx="71.8" cy="55.1" r="1.6" fill="#d030d0"/><circle cx="71.8" cy="100.3" r="1.6" fill="#d030d0"/><circle cx="117.0" cy="9.6" r="1.6" fill="#d030d0"/><circle cx="117.0" cy="55.1" r="1.6" fill="#d030d0"/><circle cx="117.0" cy="100.3" r="1.6" fill="#d030d0"/><circle cx="26.6" cy="32.3" r="2.0" fill="#30d040"/><circle cx="26.6" cy="77.7" r="2.0" fill="#30d040"/><circle cx="49.2" cy="9.6" r="2.0" fill="#30d040"/><circle cx="49.2" cy="32.3" r="2.0" fill="#30d040"/><circle cx="49.2" cy="55.1" r="2.0" fill="#30d040"/><circle cx="49.2" cy="77.7" r="2.0" fill="#30d040"/><circle cx="49.2" cy="100.3" r="2.0" fill="#30d040"/><circle cx="71.8" cy="32.3" r="2.0" fill="#30d040"/><circle cx="71.8" cy="77.7" r="2.0" fill="#30d040"/><circle cx="94.4" cy="9.6" r="2.0" fill="#30d040"/><circle cx="94.4" cy="32.3" r="2.0" fill="#30d040"/><circle cx="94.4" cy="55.1" r="2.0" fill="#30d040"/><circle cx="94.4" cy="77.7" r="2.0" fill="#30d040"/><circle cx="94.4" cy="100.3" r="2.0" fill="#30d040"/><circle cx="117.0" cy="32.3" r="2.0" fill="#30d040"/><circle cx="117.0" cy="77.7" r="2.0" fill="#30d040"/><circle cx="34.3" cy="16.2" r="3.3" fill="url(#gy)"/><circle cx="64.3" cy="17.6" r="3.3" fill="url(#gy)"/><circle cx="41.7" cy="23.7" r="3.3" fill="url(#gy)"/><circle cx="57.5" cy="24.7" r="3.3" fill="url(#gy)"/><circle cx="40.5" cy="38.8" r="3.3" fill="url(#gy)"/><circle cx="56.3" cy="39.9" r="3.3" fill="url(#gy)"/><circle cx="33.7" cy="46.4" r="3.3" fill="url(#gy)"/><circle cx="63.8" cy="47.1" r="3.3" fill="url(#gy)"/><circle cx="34.3" cy="61.7" r="3.3" fill="url(#gy)"/><circle cx="64.3" cy="63.1" r="3.3" fill="url(#gy)"/><circle cx="41.7" cy="69.2" r="3.3" fill="url(#gy)"/><circle cx="57.5" cy="70.2" r="3.3" fill="url(#gy)"/><circle cx="40.5" cy="84.3" r="3.3" fill="url(#gy)"/><circle cx="56.3" cy="85.4" r="3.3" fill="url(#gy)"/><circle cx="33.7" cy="91.9" r="3.3" fill="url(#gy)"/><circle cx="63.8" cy="92.6" r="3.3" fill="url(#gy)"/><circle cx="79.5" cy="16.2" r="3.3" fill="url(#gy)"/><circle cx="109.5" cy="17.6" r="3.3" fill="url(#gy)"/><circle cx="86.9" cy="23.7" r="3.3" fill="url(#gy)"/><circle cx="102.7" cy="24.7" r="3.3" fill="url(#gy)"/><circle cx="85.7" cy="38.8" r="3.3" fill="url(#gy)"/><circle cx="101.5" cy="39.9" r="3.3" fill="url(#gy)"/><circle cx="78.9" cy="46.4" r="3.3" fill="url(#gy)"/><circle cx="109.0" cy="47.1" r="3.3" fill="url(#gy)"/><circle cx="79.5" cy="61.7" r="3.3" fill="url(#gy)"/><circle cx="109.5" cy="63.1" r="3.3" fill="url(#gy)"/><circle cx="86.9" cy="69.2" r="3.3" fill="url(#gy)"/><circle cx="102.7" cy="70.2" r="3.3" fill="url(#gy)"/><circle cx="85.7" cy="84.3" r="3.3" fill="url(#gy)"/><circle cx="101.5" cy="85.4" r="3.3" fill="url(#gy)"/><circle cx="78.9" cy="91.9" r="3.3" fill="url(#gy)"/><circle cx="109.0" cy="92.6" r="3.3" fill="url(#gy)"/><polygon points="40.3,39.6 62.2,46.6 56.5,69.2 36.0,62.2" fill="#b89a20" opacity="0.95" stroke="#6a5a10" stroke-width="0.6"/><polygon points="40.3,39.6 62.2,46.6 56.5,69.2" fill="#d0b030" opacity="0.6" stroke="none" stroke-width="0.6"/><rect x="133.5" y="94.5" width="10" height="15" fill="#d8d8e8" stroke="#505050" stroke-width="0.5"/><circle cx="137.0" cy="97.5" r="1.8" fill="#e028d8"/><circle cx="137.0" cy="102.0" r="1.8" fill="#f0e800"/><circle cx="137.0" cy="106.5" r="1.8" fill="#30c030"/><line x1="139.5" y1="97.5" x2="142.5" y2="97.5" stroke="#c0c0c0" stroke-width="0.6" opacity="1"/><line x1="139.5" y1="102.0" x2="142.5" y2="102.0" stroke="#c0c0c0" stroke-width="0.6" opacity="1"/><line x1="139.5" y1="106.5" x2="142.5" y2="106.5" stroke="#c0c0c0" stroke-width="0.6" opacity="1"/></svg>
<div class="t" style="left:908px;top:205.04px;font-size:11px;color:#000;font-weight:bold;letter-spacing:0.55px;">Super cell 2x2x2 with Na...</div>
<div class="t" style="left:908px;top:218.04px;font-size:11px;color:#000;letter-spacing:-0.25px;-webkit-text-stroke:0.2px #000;">4 atom(s) in parameter list</div>
<div class="t" style="left:908px;top:231.04px;font-size:11px;color:#000;letter-spacing:-0.25px;-webkit-text-stroke:0.2px #000;">0 molecular, 1 polymeric unit(s)</div>
<div class="t" style="left:908px;top:244.04px;font-size:11px;color:#000;letter-spacing:-0.25px;-webkit-text-stroke:0.2px #000;">177 created atom(s)</div>
<div class="t" style="left:908px;top:257.05px;font-size:11px;color:#000;letter-spacing:-0.25px;-webkit-text-stroke:0.2px #000;">&nbsp;=&nbsp;35*P+5&nbsp;64*S-2&nbsp;78*Na+1</div>
<div class="t" style="left:908px;top:270.05px;font-size:11px;color:#000;letter-spacing:-0.25px;-webkit-text-stroke:0.2px #000;">304 created bond(s) (0 contacts,</div>
<div class="t" style="left:908px;top:283.05px;font-size:11px;color:#000;letter-spacing:-0.25px;-webkit-text-stroke:0.2px #000;">0 H-bonds)</div>
<div class="t" style="left:908px;top:296.05px;font-size:11px;color:#000;letter-spacing:-0.25px;-webkit-text-stroke:0.2px #000;">0 created molecule(s) (0 frag.)</div>
<div class="t" style="left:908px;top:309.05px;font-size:11px;color:#000;letter-spacing:-0.25px;-webkit-text-stroke:0.2px #000;">54 cell edges</div>
<div class="t" style="left:908px;top:322.05px;font-size:11px;color:#000;letter-spacing:-0.25px;-webkit-text-stroke:0.2px #000;">1 polyhedra (8 faces)</div>
<div class="t" style="left:908px;top:335.05px;font-size:11px;color:#000;letter-spacing:-0.25px;-webkit-text-stroke:0.2px #000;">0 atom, 0 bond label(s)</div>
<div class="b" style="left:1088px;top:205px;width:161px;height:141px;background:linear-gradient(180deg,#efefef 0,#e6e6e6 55%,#d4d4d4 100%);border:1px solid #a0a0a0;box-sizing:border-box;"></div>
<svg style="left:1096px;top:220px" width="145" height="110" viewBox="0 0 145 110"><rect width="145" height="110" fill="#60639a"/><line x1="12.3" y1="2.0" x2="12.3" y2="13.0" stroke="#b0b0b0" stroke-width="0.5" opacity="1"/><line x1="12.3" y1="13.0" x2="21.0" y2="12.8" stroke="#b0b0b0" stroke-width="0.5" opacity="1"/><circle cx="12.3" cy="6.0" r="0.7" fill="#e0e0e0"/><circle cx="16.5" cy="12.8" r="0.7" fill="#e0e0e0"/><line x1="32.5" y1="25.3" x2="34.7" y2="26.2" stroke="#b88a60" stroke-width="0.55" opacity="0.8"/><line x1="32.5" y1="25.3" x2="33.4" y2="27.5" stroke="#b88a60" stroke-width="0.55" opacity="0.8"/><line x1="32.5" y1="25.3" x2="31.6" y2="27.6" stroke="#b88a60" stroke-width="0.55" opacity="0.8"/><line x1="32.5" y1="25.3" x2="30.3" y2="26.3" stroke="#b88a60" stroke-width="0.55" opacity="0.8"/><line x1="32.5" y1="25.3" x2="30.3" y2="24.4" stroke="#b88a60" stroke-width="0.55" opacity="0.8"/><line x1="32.5" y1="25.3" x2="31.6" y2="23.1" stroke="#b88a60" stroke-width="0.55" opacity="0.8"/><line x1="32.5" y1="25.3" x2="33.4" y2="23.1" stroke="#b88a60" stroke-width="0.55" opacity="0.8"/><line x1="32.5" y1="25.3" x2="34.7" y2="24.4" stroke="#b88a60" stroke-width="0.55" opacity="0.8"/><line x1="32.5" y1="35.1" x2="35.8" y2="36.5" stroke="#b88a60" stroke-width="0.55" opacity="0.8"/><line x1="32.5" y1="35.1" x2="33.9" y2="38.4" stroke="#b88a60" stroke-width="0.55" opacity="0.8"/><line x1="32.5" y1="35.1" x2="31.2" y2="38.5" stroke="#b88a60" stroke-width="0.55" opacity="0.8"/><line x1="32.5" y1="35.1" x2="29.2" y2="36.5" stroke="#b88a60" stroke-width="0.55" opacity="0.8"/><line x1="32.5" y1="35.1" x2="29.2" y2="33.8" stroke="#b88a60" stroke-width="0.55" opacity="0.8"/><line x1="32.5" y1="35.1" x2="31.1" y2="31.8" stroke="#b88a60" stroke-width="0.55" opacity="0.8"/><line x1="32.5" y1="35.1" x2="33.9" y2="31.8" stroke="#b88a60" stroke-width="0.55" opacity="0.8"/><line x1="32.5" y1="35.1" x2="35.8" y2="33.7" stroke="#b88a60" stroke-width="0.55" opacity="0.8"/><line x1="32.5" y1="44.9" x2="34.7" y2="45.8" stroke="#b88a60" stroke-width="0.55" opacity="0.8"/><line x1="32.5" y1="44.9" x2="33.4" y2="47.1" stroke="#b88a60" stroke-width="0.55" opacity="0.8"/><line x1="32.5" y1="44.9" x2="31.6" y2="47.2" stroke="#b88a60" stroke-width="0.55" opacity="0.8"/><line x1="32.5" y1="44.9" x2="30.3" y2="45.9" stroke="#b88a60" stroke-width="0.55" opacity="0.8"/><line x1="32.5" y1="44.9" x2="30.3" y2="44.0" stroke="#b88a60" stroke-width="0.55" opacity="0.8"/><line x1="32.5" y1="44.9" x2="31.6" y2="42.7" stroke="#b88a60" stroke-width="0.55" opacity="0.8"/><line x1="32.5" y1="44.9" x2="33.4" y2="42.7" stroke="#b88a60" stroke-width="0.55" opacity="0.8"/><line x1="32.5" y1="44.9" x2="34.7" y2="44.0" stroke="#b88a60" stroke-width="0.55" opacity="0.8"/><line x1="32.5" y1="54.7" x2="35.8" y2="56.1" stroke="#b88a60" stroke-width="0.55" opacity="0.8"/><line x1="32.5" y1="54.7" x2="33.9" y2="58.0" stroke="#b88a60" stroke-width="0.55" opacity="0.8"/><line x1="32.5" y1="54.7" x2="31.2" y2="58.1" stroke="#b88a60" stroke-width="0.55" opacity="0.8"/><line x1="32.5" y1="54.7" x2="29.2" y2="56.1" stroke="#b88a60" stroke-width="0.55" opacity="0.8"/><line x1="32.5" y1="54.7" x2="29.2" y2="53.4" stroke="#b88a60" stroke-width="0.55" opacity="0.8"/><line x1="32.5" y1="54.7" x2="31.1" y2="51.4" stroke="#b88a60" stroke-width="0.55" opacity="0.8"/><line x1="32.5" y1="54.7" x2="33.9" y2="51.4" stroke="#b88a60" stroke-width="0.55" opacity="0.8"/><line x1="32.5" y1="54.7" x2="35.8" y2="53.3" stroke="#b88a60" stroke-width="0.55" opacity="0.8"/><line x1="32.5" y1="64.5" x2="34.7" y2="65.4" stroke="#b88a60" stroke-width="0.55" opacity="0.8"/><line x1="32.5" y1="64.5" x2="33.4" y2="66.7" stroke="#b88a60" stroke-width="0.55" opacity="0.8"/><line x1="32.5" y1="64.5" x2="31.6" y2="66.7" stroke="#b88a60" stroke-width="0.55" opacity="0.8"/><line x1="32.5" y1="64.5" x2="30.3" y2="65.5" stroke="#b88a60" stroke-width="0.55" opacity="0.8"/><line x1="32.5" y1="64.5" x2="30.3" y2="63.6" stroke="#b88a60" stroke-width="0.55" opacity="0.8"/><line x1="32.5" y1="64.5" x2="31.6" y2="62.3" stroke="#b88a60" stroke-width="0.55" opacity="0.8"/><line x1="32.5" y1="64.5" x2="33.4" y2="62.3" stroke="#b88a60" stroke-width="0.55" opacity="0.8"/><line x1="32.5" y1="64.5" x2="34.7" y2="63.6" stroke="#b88a60" stroke-width="0.55" opacity="0.8"/><line x1="32.5" y1="74.3" x2="35.8" y2="75.7" stroke="#b88a60" stroke-width="0.55" opacity="0.8"/><line x1="32.5" y1="74.3" x2="33.9" y2="77.6" stroke="#b88a60" stroke-width="0.55" opacity="0.8"/><line x1="32.5" y1="74.3" x2="31.2" y2="77.6" stroke="#b88a60" stroke-width="0.55" opacity="0.8"/><line x1="32.5" y1="74.3" x2="29.2" y2="75.7" stroke="#b88a60" stroke-width="0.55" opacity="0.8"/><line x1="32.5" y1="74.3" x2="29.2" y2="73.0" stroke="#b88a60" stroke-width="0.55" opacity="0.8"/><line x1="32.5" y1="74.3" x2="31.1" y2="71.0" stroke="#b88a60" stroke-width="0.55" opacity="0.8"/><line x1="32.5" y1="74.3" x2="33.9" y2="71.0" stroke="#b88a60" stroke-width="0.55" opacity="0.8"/><line x1="32.5" y1="74.3" x2="35.8" y2="72.9" stroke="#b88a60" stroke-width="0.55" opacity="0.8"/><line x1="32.5" y1="84.1" x2="34.7" y2="85.0" stroke="#b88a60" stroke-width="0.55" opacity="0.8"/><line x1="32.5" y1="84.1" x2="33.4" y2="86.3" stroke="#b88a60" stroke-width="0.55" opacity="0.8"/><line x1="32.5" y1="84.1" x2="31.6" y2="86.3" stroke="#b88a60" stroke-width="0.55" opacity="0.8"/><line x1="32.5" y1="84.1" x2="30.3" y2="85.0" stroke="#b88a60" stroke-width="0.55" opacity="0.8"/><line x1="32.5" y1="84.1" x2="30.3" y2="83.2" stroke="#b88a60" stroke-width="0.55" opacity="0.8"/><line x1="32.5" y1="84.1" x2="31.6" y2="81.9" stroke="#b88a60" stroke-width="0.55" opacity="0.8"/><line x1="32.5" y1="84.1" x2="33.4" y2="81.9" stroke="#b88a60" stroke-width="0.55" opacity="0.8"/><line x1="32.5" y1="84.1" x2="34.7" y2="83.2" stroke="#b88a60" stroke-width="0.55" opacity="0.8"/><line x1="42.3" y1="15.5" x2="44.5" y2="16.4" stroke="#b88a60" stroke-width="0.55" opacity="0.8"/><line x1="42.3" y1="15.5" x2="43.2" y2="17.8" stroke="#b88a60" stroke-width="0.55" opacity="0.8"/><line x1="42.3" y1="15.5" x2="41.4" y2="17.8" stroke="#b88a60" stroke-width="0.55" opacity="0.8"/><line x1="42.3" y1="15.5" x2="40.0" y2="16.5" stroke="#b88a60" stroke-width="0.55" opacity="0.8"/><line x1="42.3" y1="15.5" x2="40.0" y2="14.6" stroke="#b88a60" stroke-width="0.55" opacity="0.8"/><line x1="42.3" y1="15.5" x2="41.3" y2="13.3" stroke="#b88a60" stroke-width="0.55" opacity="0.8"/><line x1="42.3" y1="15.5" x2="43.2" y2="13.3" stroke="#b88a60" stroke-width="0.55" opacity="0.8"/><line x1="42.3" y1="15.5" x2="44.5" y2="14.6" stroke="#b88a60" stroke-width="0.55" opacity="0.8"/><line x1="42.3" y1="25.3" x2="45.6" y2="26.7" stroke="#b88a60" stroke-width="0.55" opacity="0.8"/><line x1="42.3" y1="25.3" x2="43.7" y2="28.7" stroke="#b88a60" stroke-width="0.55" opacity="0.8"/><line x1="42.3" y1="25.3" x2="40.9" y2="28.7" stroke="#b88a60" stroke-width="0.55" opacity="0.8"/><line x1="42.3" y1="25.3" x2="38.9" y2="26.7" stroke="#b88a60" stroke-width="0.55" opacity="0.8"/><line x1="42.3" y1="25.3" x2="38.9" y2="24.0" stroke="#b88a60" stroke-width="0.55" opacity="0.8"/><line x1="42.3" y1="25.3" x2="40.8" y2="22.0" stroke="#b88a60" stroke-width="0.55" opacity="0.8"/><line x1="42.3" y1="25.3" x2="43.6" y2="22.0" stroke="#b88a60" stroke-width="0.55" opacity="0.8"/><line x1="42.3" y1="25.3" x2="45.6" y2="23.9" stroke="#b88a60" stroke-width="0.55" opacity="0.8"/><line x1="42.3" y1="35.1" x2="44.5" y2="36.0" stroke="#b88a60" stroke-width="0.55" opacity="0.8"/><line x1="42.3" y1="35.1" x2="43.2" y2="37.3" stroke="#b88a60" stroke-width="0.55" opacity="0.8"/><line x1="42.3" y1="35.1" x2="41.4" y2="37.4" stroke="#b88a60" stroke-width="0.55" opacity="0.8"/><line x1="42.3" y1="35.1" x2="40.0" y2="36.1" stroke="#b88a60" stroke-width="0.55" opacity="0.8"/><line x1="42.3" y1="35.1" x2="40.0" y2="34.2" stroke="#b88a60" stroke-width="0.55" opacity="0.8"/><line x1="42.3" y1="35.1" x2="41.3" y2="32.9" stroke="#b88a60" stroke-width="0.55" opacity="0.8"/><line x1="42.3" y1="35.1" x2="43.2" y2="32.9" stroke="#b88a60" stroke-width="0.55" opacity="0.8"/><line x1="42.3" y1="35.1" x2="44.5" y2="34.2" stroke="#b88a60" stroke-width="0.55" opacity="0.8"/><line x1="42.3" y1="44.9" x2="45.6" y2="46.3" stroke="#b88a60" stroke-width="0.55" opacity="0.8"/><line x1="42.3" y1="44.9" x2="43.7" y2="48.2" stroke="#b88a60" stroke-width="0.55" opacity="0.8"/><line x1="42.3" y1="44.9" x2="40.9" y2="48.3" stroke="#b88a60" stroke-width="0.55" opacity="0.8"/><line x1="42.3" y1="44.9" x2="38.9" y2="46.3" stroke="#b88a60" stroke-width="0.55" opacity="0.8"/><line x1="42.3" y1="44.9" x2="38.9" y2="43.6" stroke="#b88a60" stroke-width="0.55" opacity="0.8"/><line x1="42.3" y1="44.9" x2="40.8" y2="41.6" stroke="#b88a60" stroke-width="0.55" opacity="0.8"/><line x1="42.3" y1="44.9" x2="43.6" y2="41.6" stroke="#b88a60" stroke-width="0.55" opacity="0.8"/><line x1="42.3" y1="44.9" x2="45.6" y2="43.5" stroke="#b88a60" stroke-width="0.55" opacity="0.8"/><line x1="42.3" y1="54.7" x2="44.5" y2="55.6" stroke="#b88a60" stroke-width="0.55" opacity="0.8"/><line x1="42.3" y1="54.7" x2="43.2" y2="56.9" stroke="#b88a60" stroke-width="0.55" opacity="0.8"/><line x1="42.3" y1="54.7" x2="41.4" y2="56.9" stroke="#b88a60" stroke-width="0.55" opacity="0.8"/><line x1="42.3" y1="54.7" x2="40.0" y2="55.7" stroke="#b88a60" stroke-width="0.55" opacity="0.8"/><line x1="42.3" y1="54.7" x2="40.0" y2="53.8" stroke="#b88a60" stroke-width="0.55" opacity="0.8"/><line x1="42.3" y1="54.7" x2="41.3" y2="52.5" stroke="#b88a60" stroke-width="0.55" opacity="0.8"/><line x1="42.3" y1="54.7" x2="43.2" y2="52.5" stroke="#b88a60" stroke-width="0.55" opacity="0.8"/><line x1="42.3" y1="54.7" x2="44.5" y2="53.8" stroke="#b88a60" stroke-width="0.55" opacity="0.8"/><line x1="42.3" y1="64.5" x2="45.6" y2="65.9" stroke="#b88a60" stroke-width="0.55" opacity="0.8"/><line x1="42.3" y1="64.5" x2="43.7" y2="67.8" stroke="#b88a60" stroke-width="0.55" opacity="0.8"/><line x1="42.3" y1="64.5" x2="40.9" y2="67.9" stroke="#b88a60" stroke-width="0.55" opacity="0.8"/><line x1="42.3" y1="64.5" x2="38.9" y2="65.9" stroke="#b88a60" stroke-width="0.55" opacity="0.8"/><line x1="42.3" y1="64.5" x2="38.9" y2="63.2" stroke="#b88a60" stroke-width="0.55" opacity="0.8"/><line x1="42.3" y1="64.5" x2="40.8" y2="61.2" stroke="#b88a60" stroke-width="0.55" opacity="0.8"/><line x1="42.3" y1="64.5" x2="43.6" y2="61.2" stroke="#b88a60" stroke-width="0.55" opacity="0.8"/><line x1="42.3" y1="64.5" x2="45.6" y2="63.1" stroke="#b88a60" stroke-width="0.55" opacity="0.8"/><line x1="42.3" y1="74.3" x2="44.5" y2="75.2" stroke="#b88a60" stroke-width="0.55" opacity="0.8"/><line x1="42.3" y1="74.3" x2="43.2" y2="76.5" stroke="#b88a60" stroke-width="0.55" opacity="0.8"/><line x1="42.3" y1="74.3" x2="41.4" y2="76.5" stroke="#b88a60" stroke-width="0.55" opacity="0.8"/><line x1="42.3" y1="74.3" x2="40.0" y2="75.2" stroke="#b88a60" stroke-width="0.55" opacity="0.8"/><line x1="42.3" y1="74.3" x2="40.0" y2="73.4" stroke="#b88a60" stroke-width="0.55" opacity="0.8"/><line x1="42.3" y1="74.3" x2="41.3" y2="72.1" stroke="#b88a60" stroke-width="0.55" opacity="0.8"/><line x1="42.3" y1="74.3" x2="43.2" y2="72.1" stroke="#b88a60" stroke-width="0.55" opacity="0.8"/><line x1="42.3" y1="74.3" x2="44.5" y2="73.4" stroke="#b88a60" stroke-width="0.55" opacity="0.8"/><line x1="42.3" y1="84.1" x2="45.6" y2="85.4" stroke="#b88a60" stroke-width="0.55" opacity="0.8"/><line x1="42.3" y1="84.1" x2="43.7" y2="87.4" stroke="#b88a60" stroke-width="0.55" opacity="0.8"/><line x1="42.3" y1="84.1" x2="40.9" y2="87.4" stroke="#b88a60" stroke-width="0.55" opacity="0.8"/><line x1="42.3" y1="84.1" x2="38.9" y2="85.5" stroke="#b88a60" stroke-width="0.55" opacity="0.8"/><line x1="42.3" y1="84.1" x2="38.9" y2="82.8" stroke="#b88a60" stroke-width="0.55" opacity="0.8"/><line x1="42.3" y1="84.1" x2="40.8" y2="80.8" stroke="#b88a60" stroke-width="0.55" opacity="0.8"/><line x1="42.3" y1="84.1" x2="43.6" y2="80.8" stroke="#b88a60" stroke-width="0.55" opacity="0.8"/><line x1="42.3" y1="84.1" x2="45.6" y2="82.7" stroke="#b88a60" stroke-width="0.55" opacity="0.8"/><line x1="42.3" y1="93.9" x2="44.5" y2="94.8" stroke="#b88a60" stroke-width="0.55" opacity="0.8"/><line x1="42.3" y1="93.9" x2="43.2" y2="96.1" stroke="#b88a60" stroke-width="0.55" opacity="0.8"/><line x1="42.3" y1="93.9" x2="41.4" y2="96.1" stroke="#b88a60" stroke-width="0.55" opacity="0.8"/><line x1="42.3" y1="93.9" x2="40.0" y2="94.8" stroke="#b88a60" stroke-width="0.55" opacity="0.8"/><line x1="42.3" y1="93.9" x2="40.0" y2="93.0" stroke="#b88a60" stroke-width="0.55" opacity="0.8"/><line x1="42.3" y1="93.9" x2="41.3" y2="91.7" stroke="#b88a60" stroke-width="0.55" opacity="0.8"/><line x1="42.3" y1="93.9" x2="43.2" y2="91.7" stroke="#b88a60" stroke-width="0.55" opacity="0.8"/><line x1="42.3" y1="93.9" x2="44.5" y2="93.0" stroke="#b88a60" stroke-width="0.55" opacity="0.8"/><line x1="52.0" y1="15.5" x2="55.3" y2="16.9" stroke="#b88a60" stroke-width="0.55" opacity="0.8"/><line x1="52.0" y1="15.5" x2="53.4" y2="18.9" stroke="#b88a60" stroke-width="0.55" opacity="0.8"/><line x1="52.0" y1="15.5" x2="50.7" y2="18.9" stroke="#b88a60" stroke-width="0.55" opacity="0.8"/><line x1="52.0" y1="15.5" x2="48.7" y2="17.0" stroke="#b88a60" stroke-width="0.55" opacity="0.8"/><line x1="52.0" y1="15.5" x2="48.7" y2="14.2" stroke="#b88a60" stroke-width="0.55" opacity="0.8"/><line x1="52.0" y1="15.5" x2="50.6" y2="12.2" stroke="#b88a60" stroke-width="0.55" opacity="0.8"/><line x1="52.0" y1="15.5" x2="53.4" y2="12.2" stroke="#b88a60" stroke-width="0.55" opacity="0.8"/><line x1="52.0" y1="15.5" x2="55.3" y2="14.1" stroke="#b88a60" stroke-width="0.55" opacity="0.8"/><line x1="52.0" y1="25.3" x2="54.2" y2="26.2" stroke="#b88a60" stroke-width="0.55" opacity="0.8"/><line x1="52.0" y1="25.3" x2="52.9" y2="27.5" stroke="#b88a60" stroke-width="0.55" opacity="0.8"/><line x1="52.0" y1="25.3" x2="51.1" y2="27.6" stroke="#b88a60" stroke-width="0.55" opacity="0.8"/><line x1="52.0" y1="25.3" x2="49.8" y2="26.3" stroke="#b88a60" stroke-width="0.55" opacity="0.8"/><line x1="52.0" y1="25.3" x2="49.8" y2="24.4" stroke="#b88a60" stroke-width="0.55" opacity="0.8"/><line x1="52.0" y1="25.3" x2="51.1" y2="23.1" stroke="#b88a60" stroke-width="0.55" opacity="0.8"/><line x1="52.0" y1="25.3" x2="52.9" y2="23.1" stroke="#b88a60" stroke-width="0.55" opacity="0.8"/><line x1="52.0" y1="25.3" x2="54.2" y2="24.4" stroke="#b88a60" stroke-width="0.55" opacity="0.8"/><line x1="52.0" y1="35.1" x2="55.3" y2="36.5" stroke="#b88a60" stroke-width="0.55" opacity="0.8"/><line x1="52.0" y1="35.1" x2="53.4" y2="38.4" stroke="#b88a60" stroke-width="0.55" opacity="0.8"/><line x1="52.0" y1="35.1" x2="50.7" y2="38.5" stroke="#b88a60" stroke-width="0.55" opacity="0.8"/><line x1="52.0" y1="35.1" x2="48.7" y2="36.5" stroke="#b88a60" stroke-width="0.55" opacity="0.8"/><line x1="52.0" y1="35.1" x2="48.7" y2="33.8" stroke="#b88a60" stroke-width="0.55" opacity="0.8"/><line x1="52.0" y1="35.1" x2="50.6" y2="31.8" stroke="#b88a60" stroke-width="0.55" opacity="0.8"/><line x1="52.0" y1="35.1" x2="53.4" y2="31.8" stroke="#b88a60" stroke-width="0.55" opacity="0.8"/><line x1="52.0" y1="35.1" x2="55.3" y2="33.7" stroke="#b88a60" stroke-width="0.55" opacity="0.8"/><line x1="52.0" y1="44.9" x2="54.2" y2="45.8" stroke="#b88a60" stroke-width="0.55" opacity="0.8"/><line x1="52.0" y1="44.9" x2="52.9" y2="47.1" stroke="#b88a60" stroke-width="0.55" opacity="0.8"/><line x1="52.0" y1="44.9" x2="51.1" y2="47.2" stroke="#b88a60" stroke-width="0.55" opacity="0.8"/><line x1="52.0" y1="44.9" x2="49.8" y2="45.9" stroke="#b88a60" stroke-width="0.55" opacity="0.8"/><line x1="52.0" y1="44.9" x2="49.8" y2="44.0" stroke="#b88a60" stroke-width="0.55" opacity="0.8"/><line x1="52.0" y1="44.9" x2="51.1" y2="42.7" stroke="#b88a60" stroke-width="0.55" opacity="0.8"/><line x1="52.0" y1="44.9" x2="52.9" y2="42.7" stroke="#b88a60" stroke-width="0.55" opacity="0.8"/><line x1="52.0" y1="44.9" x2="54.2" y2="44.0" stroke="#b88a60" stroke-width="0.55" opacity="0.8"/><line x1="52.0" y1="54.7" x2="55.3" y2="56.1" stroke="#b88a60" stroke-width="0.55" opacity="0.8"/><line x1="52.0" y1="54.7" x2="53.4" y2="58.0" stroke="#b88a60" stroke-width="0.55" opacity="0.8"/><line x1="52.0" y1="54.7" x2="50.7" y2="58.1" stroke="#b88a60" stroke-width="0.55" opacity="0.8"/><line x1="52.0" y1="54.7" x2="48.7" y2="56.1" stroke="#b88a60" stroke-width="0.55" opacity="0.8"/><line x1="52.0" y1="54.7" x2="48.7" y2="53.4" stroke="#b88a60" stroke-width="0.55" opacity="0.8"/><line x1="52.0" y1="54.7" x2="50.6" y2="51.4" stroke="#b88a60" stroke-width="0.55" opacity="0.8"/><line x1="52.0" y1="54.7" x2="53.4" y2="51.4" stroke="#b88a60" stroke-width="0.55" opacity="0.8"/><line x1="52.0" y1="54.7" x2="55.3" y2="53.3" stroke="#b88a60" stroke-width="0.55" opacity="0.8"/><line x1="52.0" y1="64.5" x2="54.2" y2="65.4" stroke="#b88a60" stroke-width="0.55" opacity="0.8"/><line x1="52.0" y1="64.5" x2="52.9" y2="66.7" stroke="#b88a60" stroke-width="0.55" opacity="0.8"/><line x1="52.0" y1="64.5" x2="51.1" y2="66.7" stroke="#b88a60" stroke-width="0.55" opacity="0.8"/><line x1="52.0" y1="64.5" x2="49.8" y2="65.5" stroke="#b88a60" stroke-width="0.55" opacity="0.8"/><line x1="52.0" y1="64.5" x2="49.8" y2="63.6" stroke="#b88a60" stroke-width="0.55" opacity="0.8"/><line x1="52.0" y1="64.5" x2="51.1" y2="62.3" stroke="#b88a60" stroke-width="0.55" opacity="0.8"/><line x1="52.0" y1="64.5" x2="52.9" y2="62.3" stroke="#b88a60" stroke-width="0.55" opacity="0.8"/><line x1="52.0" y1="64.5" x2="54.2" y2="63.6" stroke="#b88a60" stroke-width="0.55" opacity="0.8"/><line x1="52.0" y1="74.3" x2="55.3" y2="75.7" stroke="#b88a60" stroke-width="0.55" opacity="0.8"/><line x1="52.0" y1="74.3" x2="53.4" y2="77.6" stroke="#b88a60" stroke-width="0.55" opacity="0.8"/><line x1="52.0" y1="74.3" x2="50.7" y2="77.6" stroke="#b88a60" stroke-width="0.55" opacity="0.8"/><line x1="52.0" y1="74.3" x2="48.7" y2="75.7" stroke="#b88a60" stroke-width="0.55" opacity="0.8"/><line x1="52.0" y1="74.3" x2="48.7" y2="73.0" stroke="#b88a60" stroke-width="0.55" opacity="0.8"/><line x1="52.0" y1="74.3" x2="50.6" y2="71.0" stroke="#b88a60" stroke-width="0.55" opacity="0.8"/><line x1="52.0" y1="74.3" x2="53.4" y2="71.0" stroke="#b88a60" stroke-width="0.55" opacity="0.8"/><line x1="52.0" y1="74.3" x2="55.3" y2="72.9" stroke="#b88a60" stroke-width="0.55" opacity="0.8"/><line x1="52.0" y1="84.1" x2="54.2" y2="85.0" stroke="#b88a60" stroke-width="0.55" opacity="0.8"/><line x1="52.0" y1="84.1" x2="52.9" y2="86.3" stroke="#b88a60" stroke-width="0.55" opacity="0.8"/><line x1="52.0" y1="84.1" x2="51.1" y2="86.3" stroke="#b88a60" stroke-width="0.55" opacity="0.8"/><line x1="52.0" y1="84.1" x2="49.8" y2="85.0" stroke="#b88a60" stroke-width="0.55" opacity="0.8"/><line x1="52.0" y1="84.1" x2="49.8" y2="83.2" stroke="#b88a60" stroke-width="0.55" opacity="0.8"/><line x1="52.0" y1="84.1" x2="51.1" y2="81.9" stroke="#b88a60" stroke-width="0.55" opacity="0.8"/><line x1="52.0" y1="84.1" x2="52.9" y2="81.9" stroke="#b88a60" stroke-width="0.55" opacity="0.8"/><line x1="52.0" y1="84.1" x2="54.2" y2="83.2" stroke="#b88a60" stroke-width="0.55" opacity="0.8"/><line x1="52.0" y1="93.9" x2="55.3" y2="95.2" stroke="#b88a60" stroke-width="0.55" opacity="0.8"/><line x1="52.0" y1="93.9" x2="53.4" y2="97.2" stroke="#b88a60" stroke-width="0.55" opacity="0.8"/><line x1="52.0" y1="93.9" x2="50.7" y2="97.2" stroke="#b88a60" stroke-width="0.55" opacity="0.8"/><line x1="52.0" y1="93.9" x2="48.7" y2="95.3" stroke="#b88a60" stroke-width="0.55" opacity="0.8"/><line x1="52.0" y1="93.9" x2="48.7" y2="92.5" stroke="#b88a60" stroke-width="0.55" opacity="0.8"/><line x1="52.0" y1="93.9" x2="50.6" y2="90.6" stroke="#b88a60" stroke-width="0.55" opacity="0.8"/><line x1="52.0" y1="93.9" x2="53.4" y2="90.6" stroke="#b88a60" stroke-width="0.55" opacity="0.8"/><line x1="52.0" y1="93.9" x2="55.3" y2="92.5" stroke="#b88a60" stroke-width="0.55" opacity="0.8"/><line x1="61.8" y1="15.5" x2="64.0" y2="16.4" stroke="#b88a60" stroke-width="0.55" opacity="0.8"/><line x1="61.8" y1="15.5" x2="62.7" y2="17.8" stroke="#b88a60" stroke-width="0.55" opacity="0.8"/><line x1="61.8" y1="15.5" x2="60.9" y2="17.8" stroke="#b88a60" stroke-width="0.55" opacity="0.8"/><line x1="61.8" y1="15.5" x2="59.5" y2="16.5" stroke="#b88a60" stroke-width="0.55" opacity="0.8"/><line x1="61.8" y1="15.5" x2="59.5" y2="14.6" stroke="#b88a60" stroke-width="0.55" opacity="0.8"/><line x1="61.8" y1="15.5" x2="60.8" y2="13.3" stroke="#b88a60" stroke-width="0.55" opacity="0.8"/><line x1="61.8" y1="15.5" x2="62.7" y2="13.3" stroke="#b88a60" stroke-width="0.55" opacity="0.8"/><line x1="61.8" y1="15.5" x2="64.0" y2="14.6" stroke="#b88a60" stroke-width="0.55" opacity="0.8"/><line x1="61.8" y1="25.3" x2="65.1" y2="26.7" stroke="#b88a60" stroke-width="0.55" opacity="0.8"/><line x1="61.8" y1="25.3" x2="63.2" y2="28.7" stroke="#b88a60" stroke-width="0.55" opacity="0.8"/><line x1="61.8" y1="25.3" x2="60.4" y2="28.7" stroke="#b88a60" stroke-width="0.55" opacity="0.8"/><line x1="61.8" y1="25.3" x2="58.4" y2="26.7" stroke="#b88a60" stroke-width="0.55" opacity="0.8"/><line x1="61.8" y1="25.3" x2="58.4" y2="24.0" stroke="#b88a60" stroke-width="0.55" opacity="0.8"/><line x1="61.8" y1="25.3" x2="60.4" y2="22.0" stroke="#b88a60" stroke-width="0.55" opacity="0.8"/><line x1="61.8" y1="25.3" x2="63.1" y2="22.0" stroke="#b88a60" stroke-width="0.55" opacity="0.8"/><line x1="61.8" y1="25.3" x2="65.1" y2="23.9" stroke="#b88a60" stroke-width="0.55" opacity="0.8"/><line x1="61.8" y1="35.1" x2="64.0" y2="36.0" stroke="#b88a60" stroke-width="0.55" opacity="0.8"/><line x1="61.8" y1="35.1" x2="62.7" y2="37.3" stroke="#b88a60" stroke-width="0.55" opacity="0.8"/><line x1="61.8" y1="35.1" x2="60.9" y2="37.4" stroke="#b88a60" stroke-width="0.55" opacity="0.8"/><line x1="61.8" y1="35.1" x2="59.5" y2="36.1" stroke="#b88a60" stroke-width="0.55" opacity="0.8"/><line x1="61.8" y1="35.1" x2="59.5" y2="34.2" stroke="#b88a60" stroke-width="0.55" opacity="0.8"/><line x1="61.8" y1="35.1" x2="60.8" y2="32.9" stroke="#b88a60" stroke-width="0.55" opacity="0.8"/><line x1="61.8" y1="35.1" x2="62.7" y2="32.9" stroke="#b88a60" stroke-width="0.55" opacity="0.8"/><line x1="61.8" y1="35.1" x2="64.0" y2="34.2" stroke="#b88a60" stroke-width="0.55" opacity="0.8"/><line x1="61.8" y1="44.9" x2="65.1" y2="46.3" stroke="#b88a60" stroke-width="0.55" opacity="0.8"/><line x1="61.8" y1="44.9" x2="63.2" y2="48.2" stroke="#b88a60" stroke-width="0.55" opacity="0.8"/><line x1="61.8" y1="44.9" x2="60.4" y2="48.3" stroke="#b88a60" stroke-width="0.55" opacity="0.8"/><line x1="61.8" y1="44.9" x2="58.4" y2="46.3" stroke="#b88a60" stroke-width="0.55" opacity="0.8"/><line x1="61.8" y1="44.9" x2="58.4" y2="43.6" stroke="#b88a60" stroke-width="0.55" opacity="0.8"/><line x1="61.8" y1="44.9" x2="60.4" y2="41.6" stroke="#b88a60" stroke-width="0.55" opacity="0.8"/><line x1="61.8" y1="44.9" x2="63.1" y2="41.6" stroke="#b88a60" stroke-width="0.55" opacity="0.8"/><line x1="61.8" y1="44.9" x2="65.1" y2="43.5" stroke="#b88a60" stroke-width="0.55" opacity="0.8"/><line x1="61.8" y1="54.7" x2="64.0" y2="55.6" stroke="#b88a60" stroke-width="0.55" opacity="0.8"/><line x1="61.8" y1="54.7" x2="62.7" y2="56.9" stroke="#b88a60" stroke-width="0.55" opacity="0.8"/><line x1="61.8" y1="54.7" x2="60.9" y2="56.9" stroke="#b88a60" stroke-width="0.55" opacity="0.8"/><line x1="61.8" y1="54.7" x2="59.5" y2="55.7" stroke="#b88a60" stroke-width="0.55" opacity="0.8"/><line x1="61.8" y1="54.7" x2="59.5" y2="53.8" stroke="#b88a60" stroke-width="0.55" opacity="0.8"/><line x1="61.8" y1="54.7" x2="60.8" y2="52.5" stroke="#b88a60" stroke-width="0.55" opacity="0.8"/><line x1="61.8" y1="54.7" x2="62.7" y2="52.5" stroke="#b88a60" stroke-width="0.55" opacity="0.8"/><line x1="61.8" y1="54.7" x2="64.0" y2="53.8" stroke="#b88a60" stroke-width="0.55" opacity="0.8"/><line x1="61.8" y1="64.5" x2="65.1" y2="65.9" stroke="#b88a60" stroke-width="0.55" opacity="0.8"/><line x1="61.8" y1="64.5" x2="63.2" y2="67.8" stroke="#b88a60" stroke-width="0.55" opacity="0.8"/><line x1="61.8" y1="64.5" x2="60.4" y2="67.9" stroke="#b88a60" stroke-width="0.55" opacity="0.8"/><line x1="61.8" y1="64.5" x2="58.4" y2="65.9" stroke="#b88a60" stroke-width="0.55" opacity="0.8"/><line x1="61.8" y1="64.5" x2="58.4" y2="63.2" stroke="#b88a60" stroke-width="0.55" opacity="0.8"/><line x1="61.8" y1="64.5" x2="60.4" y2="61.2" stroke="#b88a60" stroke-width="0.55" opacity="0.8"/><line x1="61.8" y1="64.5" x2="63.1" y2="61.2" stroke="#b88a60" stroke-width="0.55" opacity="0.8"/><line x1="61.8" y1="64.5" x2="65.1" y2="63.1" stroke="#b88a60" stroke-width="0.55" opacity="0.8"/><line x1="61.8" y1="74.3" x2="64.0" y2="75.2" stroke="#b88a60" stroke-width="0.55" opacity="0.8"/><line x1="61.8" y1="74.3" x2="62.7" y2="76.5" stroke="#b88a60" stroke-width="0.55" opacity="0.8"/><line x1="61.8" y1="74.3" x2="60.9" y2="76.5" stroke="#b88a60" stroke-width="0.55" opacity="0.8"/><line x1="61.8" y1="74.3" x2="59.5" y2="75.2" stroke="#b88a60" stroke-width="0.55" opacity="0.8"/><line x1="61.8" y1="74.3" x2="59.5" y2="73.4" stroke="#b88a60" stroke-width="0.55" opacity="0.8"/><line x1="61.8" y1="74.3" x2="60.8" y2="72.1" stroke="#b88a60" stroke-width="0.55" opacity="0.8"/><line x1="61.8" y1="74.3" x2="62.7" y2="72.1" stroke="#b88a60" stroke-width="0.55" opacity="0.8"/><line x1="61.8" y1="74.3" x2="64.0" y2="73.4" stroke="#b88a60" stroke-width="0.55" opacity="0.8"/><line x1="61.8" y1="84.1" x2="65.1" y2="85.4" stroke="#b88a60" stroke-width="0.55" opacity="0.8"/><line x1="61.8" y1="84.1" x2="63.2" y2="87.4" stroke="#b88a60" stroke-width="0.55" opacity="0.8"/><line x1="61.8" y1="84.1" x2="60.4" y2="87.4" stroke="#b88a60" stroke-width="0.55" opacity="0.8"/><line x1="61.8" y1="84.1" x2="58.4" y2="85.5" stroke="#b88a60" stroke-width="0.55" opacity="0.8"/><line x1="61.8" y1="84.1" x2="58.4" y2="82.8" stroke="#b88a60" stroke-width="0.55" opacity="0.8"/><line x1="61.8" y1="84.1" x2="60.4" y2="80.8" stroke="#b88a60" stroke-width="0.55" opacity="0.8"/><line x1="61.8" y1="84.1" x2="63.1" y2="80.8" stroke="#b88a60" stroke-width="0.55" opacity="0.8"/><line x1="61.8" y1="84.1" x2="65.1" y2="82.7" stroke="#b88a60" stroke-width="0.55" opacity="0.8"/><line x1="61.8" y1="93.9" x2="64.0" y2="94.8" stroke="#b88a60" stroke-width="0.55" opacity="0.8"/><line x1="61.8" y1="93.9" x2="62.7" y2="96.1" stroke="#b88a60" stroke-width="0.55" opacity="0.8"/><line x1="61.8" y1="93.9" x2="60.9" y2="96.1" stroke="#b88a60" stroke-width="0.55" opacity="0.8"/><line x1="61.8" y1="93.9" x2="59.5" y2="94.8" stroke="#b88a60" stroke-width="0.55" opacity="0.8"/><line x1="61.8" y1="93.9" x2="59.5" y2="93.0" stroke="#b88a60" stroke-width="0.55" opacity="0.8"/><line x1="61.8" y1="93.9" x2="60.8" y2="91.7" stroke="#b88a60" stroke-width="0.55" opacity="0.8"/><line x1="61.8" y1="93.9" x2="62.7" y2="91.7" stroke="#b88a60" stroke-width="0.55" opacity="0.8"/><line x1="61.8" y1="93.9" x2="64.0" y2="93.0" stroke="#b88a60" stroke-width="0.55" opacity="0.8"/><line x1="71.5" y1="15.5" x2="74.8" y2="16.9" stroke="#b88a60" stroke-width="0.55" opacity="0.8"/><line x1="71.5" y1="15.5" x2="72.9" y2="18.9" stroke="#b88a60" stroke-width="0.55" opacity="0.8"/><line x1="71.5" y1="15.5" x2="70.2" y2="18.9" stroke="#b88a60" stroke-width="0.55" opacity="0.8"/><line x1="71.5" y1="15.5" x2="68.2" y2="17.0" stroke="#b88a60" stroke-width="0.55" opacity="0.8"/><line x1="71.5" y1="15.5" x2="68.2" y2="14.2" stroke="#b88a60" stroke-width="0.55" opacity="0.8"/><line x1="71.5" y1="15.5" x2="70.1" y2="12.2" stroke="#b88a60" stroke-width="0.55" opacity="0.8"/><line x1="71.5" y1="15.5" x2="72.9" y2="12.2" stroke="#b88a60" stroke-width="0.55" opacity="0.8"/><line x1="71.5" y1="15.5" x2="74.8" y2="14.1" stroke="#b88a60" stroke-width="0.55" opacity="0.8"/><line x1="71.5" y1="25.3" x2="73.7" y2="26.2" stroke="#b88a60" stroke-width="0.55" opacity="0.8"/><line x1="71.5" y1="25.3" x2="72.4" y2="27.5" stroke="#b88a60" stroke-width="0.55" opacity="0.8"/><line x1="71.5" y1="25.3" x2="70.6" y2="27.6" stroke="#b88a60" stroke-width="0.55" opacity="0.8"/><line x1="71.5" y1="25.3" x2="69.3" y2="26.3" stroke="#b88a60" stroke-width="0.55" opacity="0.8"/><line x1="71.5" y1="25.3" x2="69.3" y2="24.4" stroke="#b88a60" stroke-width="0.55" opacity="0.8"/><line x1="71.5" y1="25.3" x2="70.6" y2="23.1" stroke="#b88a60" stroke-width="0.55" opacity="0.8"/><line x1="71.5" y1="25.3" x2="72.4" y2="23.1" stroke="#b88a60" stroke-width="0.55" opacity="0.8"/><line x1="71.5" y1="25.3" x2="73.7" y2="24.4" stroke="#b88a60" stroke-width="0.55" opacity="0.8"/><line x1="71.5" y1="35.1" x2="74.8" y2="36.5" stroke="#b88a60" stroke-width="0.55" opacity="0.8"/><line x1="71.5" y1="35.1" x2="72.9" y2="38.4" stroke="#b88a60" stroke-width="0.55" opacity="0.8"/><line x1="71.5" y1="35.1" x2="70.2" y2="38.5" stroke="#b88a60" stroke-width="0.55" opacity="0.8"/><line x1="71.5" y1="35.1" x2="68.2" y2="36.5" stroke="#b88a60" stroke-width="0.55" opacity="0.8"/><line x1="71.5" y1="35.1" x2="68.2" y2="33.8" stroke="#b88a60" stroke-width="0.55" opacity="0.8"/><line x1="71.5" y1="35.1" x2="70.1" y2="31.8" stroke="#b88a60" stroke-width="0.55" opacity="0.8"/><line x1="71.5" y1="35.1" x2="72.9" y2="31.8" stroke="#b88a60" stroke-width="0.55" opacity="0.8"/><line x1="71.5" y1="35.1" x2="74.8" y2="33.7" stroke="#b88a60" stroke-width="0.55" opacity="0.8"/><line x1="71.5" y1="44.9" x2="73.7" y2="45.8" stroke="#b88a60" stroke-width="0.55" opacity="0.8"/><line x1="71.5" y1="44.9" x2="72.4" y2="47.1" stroke="#b88a60" stroke-width="0.55" opacity="0.8"/><line x1="71.5" y1="44.9" x2="70.6" y2="47.2" stroke="#b88a60" stroke-width="0.55" opacity="0.8"/><line x1="71.5" y1="44.9" x2="69.3" y2="45.9" stroke="#b88a60" stroke-width="0.55" opacity="0.8"/><line x1="71.5" y1="44.9" x2="69.3" y2="44.0" stroke="#b88a60" stroke-width="0.55" opacity="0.8"/><line x1="71.5" y1="44.9" x2="70.6" y2="42.7" stroke="#b88a60" stroke-width="0.55" opacity="0.8"/><line x1="71.5" y1="44.9" x2="72.4" y2="42.7" stroke="#b88a60" stroke-width="0.55" opacity="0.8"/><line x1="71.5" y1="44.9" x2="73.7" y2="44.0" stroke="#b88a60" stroke-width="0.55" opacity="0.8"/><line x1="71.5" y1="54.7" x2="74.8" y2="56.1" stroke="#b88a60" stroke-width="0.55" opacity="0.8"/><line x1="71.5" y1="54.7" x2="72.9" y2="58.0" stroke="#b88a60" stroke-width="0.55" opacity="0.8"/><line x1="71.5" y1="54.7" x2="70.2" y2="58.1" stroke="#b88a60" stroke-width="0.55" opacity="0.8"/><line x1="71.5" y1="54.7" x2="68.2" y2="56.1" stroke="#b88a60" stroke-width="0.55" opacity="0.8"/><line x1="71.5" y1="54.7" x2="68.2" y2="53.4" stroke="#b88a60" stroke-width="0.55" opacity="0.8"/><line x1="71.5" y1="54.7" x2="70.1" y2="51.4" stroke="#b88a60" stroke-width="0.55" opacity="0.8"/><line x1="71.5" y1="54.7" x2="72.9" y2="51.4" stroke="#b88a60" stroke-width="0.55" opacity="0.8"/><line x1="71.5" y1="54.7" x2="74.8" y2="53.3" stroke="#b88a60" stroke-width="0.55" opacity="0.8"/><line x1="71.5" y1="64.5" x2="73.7" y2="65.4" stroke="#b88a60" stroke-width="0.55" opacity="0.8"/><line x1="71.5" y1="64.5" x2="72.4" y2="66.7" stroke="#b88a60" stroke-width="0.55" opacity="0.8"/><line x1="71.5" y1="64.5" x2="70.6" y2="66.7" stroke="#b88a60" stroke-width="0.55" opacity="0.8"/><line x1="71.5" y1="64.5" x2="69.3" y2="65.5" stroke="#b88a60" stroke-width="0.55" opacity="0.8"/><line x1="71.5" y1="64.5" x2="69.3" y2="63.6" stroke="#b88a60" stroke-width="0.55" opacity="0.8"/><line x1="71.5" y1="64.5" x2="70.6" y2="62.3" stroke="#b88a60" stroke-width="0.55" opacity="0.8"/><line x1="71.5" y1="64.5" x2="72.4" y2="62.3" stroke="#b88a60" stroke-width="0.55" opacity="0.8"/><line x1="71.5" y1="64.5" x2="73.7" y2="63.6" stroke="#b88a60" stroke-width="0.55" opacity="0.8"/><line x1="71.5" y1="74.3" x2="74.8" y2="75.7" stroke="#b88a60" stroke-width="0.55" opacity="0.8"/><line x1="71.5" y1="74.3" x2="72.9" y2="77.6" stroke="#b88a60" stroke-width="0.55" opacity="0.8"/><line x1="71.5" y1="74.3" x2="70.2" y2="77.6" stroke="#b88a60" stroke-width="0.55" opacity="0.8"/><line x1="71.5" y1="74.3" x2="68.2" y2="75.7" stroke="#b88a60" stroke-width="0.55" opacity="0.8"/><line x1="71.5" y1="74.3" x2="68.2" y2="73.0" stroke="#b88a60" stroke-width="0.55" opacity="0.8"/><line x1="71.5" y1="74.3" x2="70.1" y2="71.0" stroke="#b88a60" stroke-width="0.55" opacity="0.8"/><line x1="71.5" y1="74.3" x2="72.9" y2="71.0" stroke="#b88a60" stroke-width="0.55" opacity="0.8"/><line x1="71.5" y1="74.3" x2="74.8" y2="72.9" stroke="#b88a60" stroke-width="0.55" opacity="0.8"/><line x1="71.5" y1="84.1" x2="73.7" y2="85.0" stroke="#b88a60" stroke-width="0.55" opacity="0.8"/><line x1="71.5" y1="84.1" x2="72.4" y2="86.3" stroke="#b88a60" stroke-width="0.55" opacity="0.8"/><line x1="71.5" y1="84.1" x2="70.6" y2="86.3" stroke="#b88a60" stroke-width="0.55" opacity="0.8"/><line x1="71.5" y1="84.1" x2="69.3" y2="85.0" stroke="#b88a60" stroke-width="0.55" opacity="0.8"/><line x1="71.5" y1="84.1" x2="69.3" y2="83.2" stroke="#b88a60" stroke-width="0.55" opacity="0.8"/><line x1="71.5" y1="84.1" x2="70.6" y2="81.9" stroke="#b88a60" stroke-width="0.55" opacity="0.8"/><line x1="71.5" y1="84.1" x2="72.4" y2="81.9" stroke="#b88a60" stroke-width="0.55" opacity="0.8"/><line x1="71.5" y1="84.1" x2="73.7" y2="83.2" stroke="#b88a60" stroke-width="0.55" opacity="0.8"/><line x1="71.5" y1="93.9" x2="74.8" y2="95.2" stroke="#b88a60" stroke-width="0.55" opacity="0.8"/><line x1="71.5" y1="93.9" x2="72.9" y2="97.2" stroke="#b88a60" stroke-width="0.55" opacity="0.8"/><line x1="71.5" y1="93.9" x2="70.2" y2="97.2" stroke="#b88a60" stroke-width="0.55" opacity="0.8"/><line x1="71.5" y1="93.9" x2="68.2" y2="95.3" stroke="#b88a60" stroke-width="0.55" opacity="0.8"/><line x1="71.5" y1="93.9" x2="68.2" y2="92.5" stroke="#b88a60" stroke-width="0.55" opacity="0.8"/><line x1="71.5" y1="93.9" x2="70.1" y2="90.6" stroke="#b88a60" stroke-width="0.55" opacity="0.8"/><line x1="71.5" y1="93.9" x2="72.9" y2="90.6" stroke="#b88a60" stroke-width="0.55" opacity="0.8"/><line x1="71.5" y1="93.9" x2="74.8" y2="92.5" stroke="#b88a60" stroke-width="0.55" opacity="0.8"/><line x1="81.3" y1="15.5" x2="83.5" y2="16.4" stroke="#b88a60" stroke-width="0.55" opacity="0.8"/><line x1="81.3" y1="15.5" x2="82.2" y2="17.8" stroke="#b88a60" stroke-width="0.55" opacity="0.8"/><line x1="81.3" y1="15.5" x2="80.4" y2="17.8" stroke="#b88a60" stroke-width="0.55" opacity="0.8"/><line x1="81.3" y1="15.5" x2="79.1" y2="16.5" stroke="#b88a60" stroke-width="0.55" opacity="0.8"/><line x1="81.3" y1="15.5" x2="79.0" y2="14.6" stroke="#b88a60" stroke-width="0.55" opacity="0.8"/><line x1="81.3" y1="15.5" x2="80.3" y2="13.3" stroke="#b88a60" stroke-width="0.55" opacity="0.8"/><line x1="81.3" y1="15.5" x2="82.2" y2="13.3" stroke="#b88a60" stroke-width="0.55" opacity="0.8"/><line x1="81.3" y1="15.5" x2="83.5" y2="14.6" stroke="#b88a60" stroke-width="0.55" opacity="0.8"/><line x1="81.3" y1="25.3" x2="84.6" y2="26.7" stroke="#b88a60" stroke-width="0.55" opacity="0.8"/><line x1="81.3" y1="25.3" x2="82.7" y2="28.7" stroke="#b88a60" stroke-width="0.55" opacity="0.8"/><line x1="81.3" y1="25.3" x2="79.9" y2="28.7" stroke="#b88a60" stroke-width="0.55" opacity="0.8"/><line x1="81.3" y1="25.3" x2="77.9" y2="26.7" stroke="#b88a60" stroke-width="0.55" opacity="0.8"/><line x1="81.3" y1="25.3" x2="77.9" y2="24.0" stroke="#b88a60" stroke-width="0.55" opacity="0.8"/><line x1="81.3" y1="25.3" x2="79.9" y2="22.0" stroke="#b88a60" stroke-width="0.55" opacity="0.8"/><line x1="81.3" y1="25.3" x2="82.6" y2="22.0" stroke="#b88a60" stroke-width="0.55" opacity="0.8"/><line x1="81.3" y1="25.3" x2="84.6" y2="23.9" stroke="#b88a60" stroke-width="0.55" opacity="0.8"/><line x1="81.3" y1="35.1" x2="83.5" y2="36.0" stroke="#b88a60" stroke-width="0.55" opacity="0.8"/><line x1="81.3" y1="35.1" x2="82.2" y2="37.3" stroke="#b88a60" stroke-width="0.55" opacity="0.8"/><line x1="81.3" y1="35.1" x2="80.4" y2="37.4" stroke="#b88a60" stroke-width="0.55" opacity="0.8"/><line x1="81.3" y1="35.1" x2="79.1" y2="36.1" stroke="#b88a60" stroke-width="0.55" opacity="0.8"/><line x1="81.3" y1="35.1" x2="79.0" y2="34.2" stroke="#b88a60" stroke-width="0.55" opacity="0.8"/><line x1="81.3" y1="35.1" x2="80.3" y2="32.9" stroke="#b88a60" stroke-width="0.55" opacity="0.8"/><line x1="81.3" y1="35.1" x2="82.2" y2="32.9" stroke="#b88a60" stroke-width="0.55" opacity="0.8"/><line x1="81.3" y1="35.1" x2="83.5" y2="34.2" stroke="#b88a60" stroke-width="0.55" opacity="0.8"/><line x1="81.3" y1="44.9" x2="84.6" y2="46.3" stroke="#b88a60" stroke-width="0.55" opacity="0.8"/><line x1="81.3" y1="44.9" x2="82.7" y2="48.2" stroke="#b88a60" stroke-width="0.55" opacity="0.8"/><line x1="81.3" y1="44.9" x2="79.9" y2="48.3" stroke="#b88a60" stroke-width="0.55" opacity="0.8"/><line x1="81.3" y1="44.9" x2="77.9" y2="46.3" stroke="#b88a60" stroke-width="0.55" opacity="0.8"/><line x1="81.3" y1="44.9" x2="77.9" y2="43.6" stroke="#b88a60" stroke-width="0.55" opacity="0.8"/><line x1="81.3" y1="44.9" x2="79.9" y2="41.6" stroke="#b88a60" stroke-width="0.55" opacity="0.8"/><line x1="81.3" y1="44.9" x2="82.6" y2="41.6" stroke="#b88a60" stroke-width="0.55" opacity="0.8"/><line x1="81.3" y1="44.9" x2="84.6" y2="43.5" stroke="#b88a60" stroke-width="0.55" opacity="0.8"/><line x1="81.3" y1="54.7" x2="83.5" y2="55.6" stroke="#b88a60" stroke-width="0.55" opacity="0.8"/><line x1="81.3" y1="54.7" x2="82.2" y2="56.9" stroke="#b88a60" stroke-width="0.55" opacity="0.8"/><line x1="81.3" y1="54.7" x2="80.4" y2="56.9" stroke="#b88a60" stroke-width="0.55" opacity="0.8"/><line x1="81.3" y1="54.7" x2="79.1" y2="55.7" stroke="#b88a60" stroke-width="0.55" opacity="0.8"/><line x1="81.3" y1="54.7" x2="79.0" y2="53.8" stroke="#b88a60" stroke-width="0.55" opacity="0.8"/><line x1="81.3" y1="54.7" x2="80.3" y2="52.5" stroke="#b88a60" stroke-width="0.55" opacity="0.8"/><line x1="81.3" y1="54.7" x2="82.2" y2="52.5" stroke="#b88a60" stroke-width="0.55" opacity="0.8"/><line x1="81.3" y1="54.7" x2="83.5" y2="53.8" stroke="#b88a60" stroke-width="0.55" opacity="0.8"/><line x1="81.3" y1="64.5" x2="84.6" y2="65.9" stroke="#b88a60" stroke-width="0.55" opacity="0.8"/><line x1="81.3" y1="64.5" x2="82.7" y2="67.8" stroke="#b88a60" stroke-width="0.55" opacity="0.8"/><line x1="81.3" y1="64.5" x2="79.9" y2="67.9" stroke="#b88a60" stroke-width="0.55" opacity="0.8"/><line x1="81.3" y1="64.5" x2="77.9" y2="65.9" stroke="#b88a60" stroke-width="0.55" opacity="0.8"/><line x1="81.3" y1="64.5" x2="77.9" y2="63.2" stroke="#b88a60" stroke-width="0.55" opacity="0.8"/><line x1="81.3" y1="64.5" x2="79.9" y2="61.2" stroke="#b88a60" stroke-width="0.55" opacity="0.8"/><line x1="81.3" y1="64.5" x2="82.6" y2="61.2" stroke="#b88a60" stroke-width="0.55" opacity="0.8"/><line x1="81.3" y1="64.5" x2="84.6" y2="63.1" stroke="#b88a60" stroke-width="0.55" opacity="0.8"/><line x1="81.3" y1="74.3" x2="83.5" y2="75.2" stroke="#b88a60" stroke-width="0.55" opacity="0.8"/><line x1="81.3" y1="74.3" x2="82.2" y2="76.5" stroke="#b88a60" stroke-width="0.55" opacity="0.8"/><line x1="81.3" y1="74.3" x2="80.4" y2="76.5" stroke="#b88a60" stroke-width="0.55" opacity="0.8"/><line x1="81.3" y1="74.3" x2="79.1" y2="75.2" stroke="#b88a60" stroke-width="0.55" opacity="0.8"/><line x1="81.3" y1="74.3" x2="79.0" y2="73.4" stroke="#b88a60" stroke-width="0.55" opacity="0.8"/><line x1="81.3" y1="74.3" x2="80.3" y2="72.1" stroke="#b88a60" stroke-width="0.55" opacity="0.8"/><line x1="81.3" y1="74.3" x2="82.2" y2="72.1" stroke="#b88a60" stroke-width="0.55" opacity="0.8"/><line x1="81.3" y1="74.3" x2="83.5" y2="73.4" stroke="#b88a60" stroke-width="0.55" opacity="0.8"/><line x1="81.3" y1="84.1" x2="84.6" y2="85.4" stroke="#b88a60" stroke-width="0.55" opacity="0.8"/><line x1="81.3" y1="84.1" x2="82.7" y2="87.4" stroke="#b88a60" stroke-width="0.55" opacity="0.8"/><line x1="81.3" y1="84.1" x2="79.9" y2="87.4" stroke="#b88a60" stroke-width="0.55" opacity="0.8"/><line x1="81.3" y1="84.1" x2="77.9" y2="85.5" stroke="#b88a60" stroke-width="0.55" opacity="0.8"/><line x1="81.3" y1="84.1" x2="77.9" y2="82.8" stroke="#b88a60" stroke-width="0.55" opacity="0.8"/><line x1="81.3" y1="84.1" x2="79.9" y2="80.8" stroke="#b88a60" stroke-width="0.55" opacity="0.8"/><line x1="81.3" y1="84.1" x2="82.6" y2="80.8" stroke="#b88a60" stroke-width="0.55" opacity="0.8"/><line x1="81.3" y1="84.1" x2="84.6" y2="82.7" stroke="#b88a60" stroke-width="0.55" opacity="0.8"/><line x1="81.3" y1="93.9" x2="83.5" y2="94.8" stroke="#b88a60" stroke-width="0.55" opacity="0.8"/><line x1="81.3" y1="93.9" x2="82.2" y2="96.1" stroke="#b88a60" stroke-width="0.55" opacity="0.8"/><line x1="81.3" y1="93.9" x2="80.4" y2="96.1" stroke="#b88a60" stroke-width="0.55" opacity="0.8"/><line x1="81.3" y1="93.9" x2="79.1" y2="94.8" stroke="#b88a60" stroke-width="0.55" opacity="0.8"/><line x1="81.3" y1="93.9" x2="79.0" y2="93.0" stroke="#b88a60" stroke-width="0.55" opacity="0.8"/><line x1="81.3" y1="93.9" x2="80.3" y2="91.7" stroke="#b88a60" stroke-width="0.55" opacity="0.8"/><line x1="81.3" y1="93.9" x2="82.2" y2="91.7" stroke="#b88a60" stroke-width="0.55" opacity="0.8"/><line x1="81.3" y1="93.9" x2="83.5" y2="93.0" stroke="#b88a60" stroke-width="0.55" opacity="0.8"/><line x1="91.0" y1="15.5" x2="94.3" y2="16.9" stroke="#b88a60" stroke-width="0.55" opacity="0.8"/><line x1="91.0" y1="15.5" x2="92.4" y2="18.9" stroke="#b88a60" stroke-width="0.55" opacity="0.8"/><line x1="91.0" y1="15.5" x2="89.7" y2="18.9" stroke="#b88a60" stroke-width="0.55" opacity="0.8"/><line x1="91.0" y1="15.5" x2="87.7" y2="17.0" stroke="#b88a60" stroke-width="0.55" opacity="0.8"/><line x1="91.0" y1="15.5" x2="87.7" y2="14.2" stroke="#b88a60" stroke-width="0.55" opacity="0.8"/><line x1="91.0" y1="15.5" x2="89.6" y2="12.2" stroke="#b88a60" stroke-width="0.55" opacity="0.8"/><line x1="91.0" y1="15.5" x2="92.4" y2="12.2" stroke="#b88a60" stroke-width="0.55" opacity="0.8"/><line x1="91.0" y1="15.5" x2="94.3" y2="14.1" stroke="#b88a60" stroke-width="0.55" opacity="0.8"/><line x1="91.0" y1="25.3" x2="93.2" y2="26.2" stroke="#b88a60" stroke-width="0.55" opacity="0.8"/><line x1="91.0" y1="25.3" x2="91.9" y2="27.5" stroke="#b88a60" stroke-width="0.55" opacity="0.8"/><line x1="91.0" y1="25.3" x2="90.1" y2="27.6" stroke="#b88a60" stroke-width="0.55" opacity="0.8"/><line x1="91.0" y1="25.3" x2="88.8" y2="26.3" stroke="#b88a60" stroke-width="0.55" opacity="0.8"/><line x1="91.0" y1="25.3" x2="88.8" y2="24.4" stroke="#b88a60" stroke-width="0.55" opacity="0.8"/><line x1="91.0" y1="25.3" x2="90.1" y2="23.1" stroke="#b88a60" stroke-width="0.55" opacity="0.8"/><line x1="91.0" y1="25.3" x2="91.9" y2="23.1" stroke="#b88a60" stroke-width="0.55" opacity="0.8"/><line x1="91.0" y1="25.3" x2="93.2" y2="24.4" stroke="#b88a60" stroke-width="0.55" opacity="0.8"/><line x1="91.0" y1="35.1" x2="94.3" y2="36.5" stroke="#b88a60" stroke-width="0.55" opacity="0.8"/><line x1="91.0" y1="35.1" x2="92.4" y2="38.4" stroke="#b88a60" stroke-width="0.55" opacity="0.8"/><line x1="91.0" y1="35.1" x2="89.7" y2="38.5" stroke="#b88a60" stroke-width="0.55" opacity="0.8"/><line x1="91.0" y1="35.1" x2="87.7" y2="36.5" stroke="#b88a60" stroke-width="0.55" opacity="0.8"/><line x1="91.0" y1="35.1" x2="87.7" y2="33.8" stroke="#b88a60" stroke-width="0.55" opacity="0.8"/><line x1="91.0" y1="35.1" x2="89.6" y2="31.8" stroke="#b88a60" stroke-width="0.55" opacity="0.8"/><line x1="91.0" y1="35.1" x2="92.4" y2="31.8" stroke="#b88a60" stroke-width="0.55" opacity="0.8"/><line x1="91.0" y1="35.1" x2="94.3" y2="33.7" stroke="#b88a60" stroke-width="0.55" opacity="0.8"/><line x1="91.0" y1="44.9" x2="93.2" y2="45.8" stroke="#b88a60" stroke-width="0.55" opacity="0.8"/><line x1="91.0" y1="44.9" x2="91.9" y2="47.1" stroke="#b88a60" stroke-width="0.55" opacity="0.8"/><line x1="91.0" y1="44.9" x2="90.1" y2="47.2" stroke="#b88a60" stroke-width="0.55" opacity="0.8"/><line x1="91.0" y1="44.9" x2="88.8" y2="45.9" stroke="#b88a60" stroke-width="0.55" opacity="0.8"/><line x1="91.0" y1="44.9" x2="88.8" y2="44.0" stroke="#b88a60" stroke-width="0.55" opacity="0.8"/><line x1="91.0" y1="44.9" x2="90.1" y2="42.7" stroke="#b88a60" stroke-width="0.55" opacity="0.8"/><line x1="91.0" y1="44.9" x2="91.9" y2="42.7" stroke="#b88a60" stroke-width="0.55" opacity="0.8"/><line x1="91.0" y1="44.9" x2="93.2" y2="44.0" stroke="#b88a60" stroke-width="0.55" opacity="0.8"/><line x1="91.0" y1="54.7" x2="94.3" y2="56.1" stroke="#b88a60" stroke-width="0.55" opacity="0.8"/><line x1="91.0" y1="54.7" x2="92.4" y2="58.0" stroke="#b88a60" stroke-width="0.55" opacity="0.8"/><line x1="91.0" y1="54.7" x2="89.7" y2="58.1" stroke="#b88a60" stroke-width="0.55" opacity="0.8"/><line x1="91.0" y1="54.7" x2="87.7" y2="56.1" stroke="#b88a60" stroke-width="0.55" opacity="0.8"/><line x1="91.0" y1="54.7" x2="87.7" y2="53.4" stroke="#b88a60" stroke-width="0.55" opacity="0.8"/><line x1="91.0" y1="54.7" x2="89.6" y2="51.4" stroke="#b88a60" stroke-width="0.55" opacity="0.8"/><line x1="91.0" y1="54.7" x2="92.4" y2="51.4" stroke="#b88a60" stroke-width="0.55" opacity="0.8"/><line x1="91.0" y1="54.7" x2="94.3" y2="53.3" stroke="#b88a60" stroke-width="0.55" opacity="0.8"/><line x1="91.0" y1="64.5" x2="93.2" y2="65.4" stroke="#b88a60" stroke-width="0.55" opacity="0.8"/><line x1="91.0" y1="64.5" x2="91.9" y2="66.7" stroke="#b88a60" stroke-width="0.55" opacity="0.8"/><line x1="91.0" y1="64.5" x2="90.1" y2="66.7" stroke="#b88a60" stroke-width="0.55" opacity="0.8"/><line x1="91.0" y1="64.5" x2="88.8" y2="65.5" stroke="#b88a60" stroke-width="0.55" opacity="0.8"/><line x1="91.0" y1="64.5" x2="88.8" y2="63.6" stroke="#b88a60" stroke-width="0.55" opacity="0.8"/><line x1="91.0" y1="64.5" x2="90.1" y2="62.3" stroke="#b88a60" stroke-width="0.55" opacity="0.8"/><line x1="91.0" y1="64.5" x2="91.9" y2="62.3" stroke="#b88a60" stroke-width="0.55" opacity="0.8"/><line x1="91.0" y1="64.5" x2="93.2" y2="63.6" stroke="#b88a60" stroke-width="0.55" opacity="0.8"/><line x1="91.0" y1="74.3" x2="94.3" y2="75.7" stroke="#b88a60" stroke-width="0.55" opacity="0.8"/><line x1="91.0" y1="74.3" x2="92.4" y2="77.6" stroke="#b88a60" stroke-width="0.55" opacity="0.8"/><line x1="91.0" y1="74.3" x2="89.7" y2="77.6" stroke="#b88a60" stroke-width="0.55" opacity="0.8"/><line x1="91.0" y1="74.3" x2="87.7" y2="75.7" stroke="#b88a60" stroke-width="0.55" opacity="0.8"/><line x1="91.0" y1="74.3" x2="87.7" y2="73.0" stroke="#b88a60" stroke-width="0.55" opacity="0.8"/><line x1="91.0" y1="74.3" x2="89.6" y2="71.0" stroke="#b88a60" stroke-width="0.55" opacity="0.8"/><line x1="91.0" y1="74.3" x2="92.4" y2="71.0" stroke="#b88a60" stroke-width="0.55" opacity="0.8"/><line x1="91.0" y1="74.3" x2="94.3" y2="72.9" stroke="#b88a60" stroke-width="0.55" opacity="0.8"/><line x1="91.0" y1="84.1" x2="93.2" y2="85.0" stroke="#b88a60" stroke-width="0.55" opacity="0.8"/><line x1="91.0" y1="84.1" x2="91.9" y2="86.3" stroke="#b88a60" stroke-width="0.55" opacity="0.8"/><line x1="91.0" y1="84.1" x2="90.1" y2="86.3" stroke="#b88a60" stroke-width="0.55" opacity="0.8"/><line x1="91.0" y1="84.1" x2="88.8" y2="85.0" stroke="#b88a60" stroke-width="0.55" opacity="0.8"/><line x1="91.0" y1="84.1" x2="88.8" y2="83.2" stroke="#b88a60" stroke-width="0.55" opacity="0.8"/><line x1="91.0" y1="84.1" x2="90.1" y2="81.9" stroke="#b88a60" stroke-width="0.55" opacity="0.8"/><line x1="91.0" y1="84.1" x2="91.9" y2="81.9" stroke="#b88a60" stroke-width="0.55" opacity="0.8"/><line x1="91.0" y1="84.1" x2="93.2" y2="83.2" stroke="#b88a60" stroke-width="0.55" opacity="0.8"/><line x1="91.0" y1="93.9" x2="94.3" y2="95.2" stroke="#b88a60" stroke-width="0.55" opacity="0.8"/><line x1="91.0" y1="93.9" x2="92.4" y2="97.2" stroke="#b88a60" stroke-width="0.55" opacity="0.8"/><line x1="91.0" y1="93.9" x2="89.7" y2="97.2" stroke="#b88a60" stroke-width="0.55" opacity="0.8"/><line x1="91.0" y1="93.9" x2="87.7" y2="95.3" stroke="#b88a60" stroke-width="0.55" opacity="0.8"/><line x1="91.0" y1="93.9" x2="87.7" y2="92.5" stroke="#b88a60" stroke-width="0.55" opacity="0.8"/><line x1="91.0" y1="93.9" x2="89.6" y2="90.6" stroke="#b88a60" stroke-width="0.55" opacity="0.8"/><line x1="91.0" y1="93.9" x2="92.4" y2="90.6" stroke="#b88a60" stroke-width="0.55" opacity="0.8"/><line x1="91.0" y1="93.9" x2="94.3" y2="92.5" stroke="#b88a60" stroke-width="0.55" opacity="0.8"/><line x1="100.8" y1="15.5" x2="103.0" y2="16.4" stroke="#b88a60" stroke-width="0.55" opacity="0.8"/><line x1="100.8" y1="15.5" x2="101.7" y2="17.8" stroke="#b88a60" stroke-width="0.55" opacity="0.8"/><line x1="100.8" y1="15.5" x2="99.9" y2="17.8" stroke="#b88a60" stroke-width="0.55" opacity="0.8"/><line x1="100.8" y1="15.5" x2="98.6" y2="16.5" stroke="#b88a60" stroke-width="0.55" opacity="0.8"/><line x1="100.8" y1="15.5" x2="98.5" y2="14.6" stroke="#b88a60" stroke-width="0.55" opacity="0.8"/><line x1="100.8" y1="15.5" x2="99.8" y2="13.3" stroke="#b88a60" stroke-width="0.55" opacity="0.8"/><line x1="100.8" y1="15.5" x2="101.7" y2="13.3" stroke="#b88a60" stroke-width="0.55" opacity="0.8"/><line x1="100.8" y1="15.5" x2="103.0" y2="14.6" stroke="#b88a60" stroke-width="0.55" opacity="0.8"/><line x1="100.8" y1="25.3" x2="104.1" y2="26.7" stroke="#b88a60" stroke-width="0.55" opacity="0.8"/><line x1="100.8" y1="25.3" x2="102.2" y2="28.7" stroke="#b88a60" stroke-width="0.55" opacity="0.8"/><line x1="100.8" y1="25.3" x2="99.4" y2="28.7" stroke="#b88a60" stroke-width="0.55" opacity="0.8"/><line x1="100.8" y1="25.3" x2="97.4" y2="26.7" stroke="#b88a60" stroke-width="0.55" opacity="0.8"/><line x1="100.8" y1="25.3" x2="97.4" y2="24.0" stroke="#b88a60" stroke-width="0.55" opacity="0.8"/><line x1="100.8" y1="25.3" x2="99.4" y2="22.0" stroke="#b88a60" stroke-width="0.55" opacity="0.8"/><line x1="100.8" y1="25.3" x2="102.1" y2="22.0" stroke="#b88a60" stroke-width="0.55" opacity="0.8"/><line x1="100.8" y1="25.3" x2="104.1" y2="23.9" stroke="#b88a60" stroke-width="0.55" opacity="0.8"/><line x1="100.8" y1="35.1" x2="103.0" y2="36.0" stroke="#b88a60" stroke-width="0.55" opacity="0.8"/><line x1="100.8" y1="35.1" x2="101.7" y2="37.3" stroke="#b88a60" stroke-width="0.55" opacity="0.8"/><line x1="100.8" y1="35.1" x2="99.9" y2="37.4" stroke="#b88a60" stroke-width="0.55" opacity="0.8"/><line x1="100.8" y1="35.1" x2="98.6" y2="36.1" stroke="#b88a60" stroke-width="0.55" opacity="0.8"/><line x1="100.8" y1="35.1" x2="98.5" y2="34.2" stroke="#b88a60" stroke-width="0.55" opacity="0.8"/><line x1="100.8" y1="35.1" x2="99.8" y2="32.9" stroke="#b88a60" stroke-width="0.55" opacity="0.8"/><line x1="100.8" y1="35.1" x2="101.7" y2="32.9" stroke="#b88a60" stroke-width="0.55" opacity="0.8"/><line x1="100.8" y1="35.1" x2="103.0" y2="34.2" stroke="#b88a60" stroke-width="0.55" opacity="0.8"/><line x1="100.8" y1="44.9" x2="104.1" y2="46.3" stroke="#b88a60" stroke-width="0.55" opacity="0.8"/><line x1="100.8" y1="44.9" x2="102.2" y2="48.2" stroke="#b88a60" stroke-width="0.55" opacity="0.8"/><line x1="100.8" y1="44.9" x2="99.4" y2="48.3" stroke="#b88a60" stroke-width="0.55" opacity="0.8"/><line x1="100.8" y1="44.9" x2="97.4" y2="46.3" stroke="#b88a60" stroke-width="0.55" opacity="0.8"/><line x1="100.8" y1="44.9" x2="97.4" y2="43.6" stroke="#b88a60" stroke-width="0.55" opacity="0.8"/><line x1="100.8" y1="44.9" x2="99.4" y2="41.6" stroke="#b88a60" stroke-width="0.55" opacity="0.8"/><line x1="100.8" y1="44.9" x2="102.1" y2="41.6" stroke="#b88a60" stroke-width="0.55" opacity="0.8"/><line x1="100.8" y1="44.9" x2="104.1" y2="43.5" stroke="#b88a60" stroke-width="0.55" opacity="0.8"/><line x1="100.8" y1="54.7" x2="103.0" y2="55.6" stroke="#b88a60" stroke-width="0.55" opacity="0.8"/><line x1="100.8" y1="54.7" x2="101.7" y2="56.9" stroke="#b88a60" stroke-width="0.55" opacity="0.8"/><line x1="100.8" y1="54.7" x2="99.9" y2="56.9" stroke="#b88a60" stroke-width="0.55" opacity="0.8"/><line x1="100.8" y1="54.7" x2="98.6" y2="55.7" stroke="#b88a60" stroke-width="0.55" opacity="0.8"/><line x1="100.8" y1="54.7" x2="98.5" y2="53.8" stroke="#b88a60" stroke-width="0.55" opacity="0.8"/><line x1="100.8" y1="54.7" x2="99.8" y2="52.5" stroke="#b88a60" stroke-width="0.55" opacity="0.8"/><line x1="100.8" y1="54.7" x2="101.7" y2="52.5" stroke="#b88a60" stroke-width="0.55" opacity="0.8"/><line x1="100.8" y1="54.7" x2="103.0" y2="53.8" stroke="#b88a60" stroke-width="0.55" opacity="0.8"/><line x1="100.8" y1="64.5" x2="104.1" y2="65.9" stroke="#b88a60" stroke-width="0.55" opacity="0.8"/><line x1="100.8" y1="64.5" x2="102.2" y2="67.8" stroke="#b88a60" stroke-width="0.55" opacity="0.8"/><line x1="100.8" y1="64.5" x2="99.4" y2="67.9" stroke="#b88a60" stroke-width="0.55" opacity="0.8"/><line x1="100.8" y1="64.5" x2="97.4" y2="65.9" stroke="#b88a60" stroke-width="0.55" opacity="0.8"/><line x1="100.8" y1="64.5" x2="97.4" y2="63.2" stroke="#b88a60" stroke-width="0.55" opacity="0.8"/><line x1="100.8" y1="64.5" x2="99.4" y2="61.2" stroke="#b88a60" stroke-width="0.55" opacity="0.8"/><line x1="100.8" y1="64.5" x2="102.1" y2="61.2" stroke="#b88a60" stroke-width="0.55" opacity="0.8"/><line x1="100.8" y1="64.5" x2="104.1" y2="63.1" stroke="#b88a60" stroke-width="0.55" opacity="0.8"/><line x1="100.8" y1="74.3" x2="103.0" y2="75.2" stroke="#b88a60" stroke-width="0.55" opacity="0.8"/><line x1="100.8" y1="74.3" x2="101.7" y2="76.5" stroke="#b88a60" stroke-width="0.55" opacity="0.8"/><line x1="100.8" y1="74.3" x2="99.9" y2="76.5" stroke="#b88a60" stroke-width="0.55" opacity="0.8"/><line x1="100.8" y1="74.3" x2="98.6" y2="75.2" stroke="#b88a60" stroke-width="0.55" opacity="0.8"/><line x1="100.8" y1="74.3" x2="98.5" y2="73.4" stroke="#b88a60" stroke-width="0.55" opacity="0.8"/><line x1="100.8" y1="74.3" x2="99.8" y2="72.1" stroke="#b88a60" stroke-width="0.55" opacity="0.8"/><line x1="100.8" y1="74.3" x2="101.7" y2="72.1" stroke="#b88a60" stroke-width="0.55" opacity="0.8"/><line x1="100.8" y1="74.3" x2="103.0" y2="73.4" stroke="#b88a60" stroke-width="0.55" opacity="0.8"/><line x1="100.8" y1="84.1" x2="104.1" y2="85.4" stroke="#b88a60" stroke-width="0.55" opacity="0.8"/><line x1="100.8" y1="84.1" x2="102.2" y2="87.4" stroke="#b88a60" stroke-width="0.55" opacity="0.8"/><line x1="100.8" y1="84.1" x2="99.4" y2="87.4" stroke="#b88a60" stroke-width="0.55" opacity="0.8"/><line x1="100.8" y1="84.1" x2="97.4" y2="85.5" stroke="#b88a60" stroke-width="0.55" opacity="0.8"/><line x1="100.8" y1="84.1" x2="97.4" y2="82.8" stroke="#b88a60" stroke-width="0.55" opacity="0.8"/><line x1="100.8" y1="84.1" x2="99.4" y2="80.8" stroke="#b88a60" stroke-width="0.55" opacity="0.8"/><line x1="100.8" y1="84.1" x2="102.1" y2="80.8" stroke="#b88a60" stroke-width="0.55" opacity="0.8"/><line x1="100.8" y1="84.1" x2="104.1" y2="82.7" stroke="#b88a60" stroke-width="0.55" opacity="0.8"/><line x1="100.8" y1="93.9" x2="103.0" y2="94.8" stroke="#b88a60" stroke-width="0.55" opacity="0.8"/><line x1="100.8" y1="93.9" x2="101.7" y2="96.1" stroke="#b88a60" stroke-width="0.55" opacity="0.8"/><line x1="100.8" y1="93.9" x2="99.9" y2="96.1" stroke="#b88a60" stroke-width="0.55" opacity="0.8"/><line x1="100.8" y1="93.9" x2="98.6" y2="94.8" stroke="#b88a60" stroke-width="0.55" opacity="0.8"/><line x1="100.8" y1="93.9" x2="98.5" y2="93.0" stroke="#b88a60" stroke-width="0.55" opacity="0.8"/><line x1="100.8" y1="93.9" x2="99.8" y2="91.7" stroke="#b88a60" stroke-width="0.55" opacity="0.8"/><line x1="100.8" y1="93.9" x2="101.7" y2="91.7" stroke="#b88a60" stroke-width="0.55" opacity="0.8"/><line x1="100.8" y1="93.9" x2="103.0" y2="93.0" stroke="#b88a60" stroke-width="0.55" opacity="0.8"/><line x1="110.5" y1="25.3" x2="112.7" y2="26.2" stroke="#b88a60" stroke-width="0.55" opacity="0.8"/><line x1="110.5" y1="25.3" x2="111.5" y2="27.5" stroke="#b88a60" stroke-width="0.55" opacity="0.8"/><line x1="110.5" y1="25.3" x2="109.6" y2="27.6" stroke="#b88a60" stroke-width="0.55" opacity="0.8"/><line x1="110.5" y1="25.3" x2="108.3" y2="26.3" stroke="#b88a60" stroke-width="0.55" opacity="0.8"/><line x1="110.5" y1="25.3" x2="108.3" y2="24.4" stroke="#b88a60" stroke-width="0.55" opacity="0.8"/><line x1="110.5" y1="25.3" x2="109.6" y2="23.1" stroke="#b88a60" stroke-width="0.55" opacity="0.8"/><line x1="110.5" y1="25.3" x2="111.4" y2="23.1" stroke="#b88a60" stroke-width="0.55" opacity="0.8"/><line x1="110.5" y1="25.3" x2="112.7" y2="24.4" stroke="#b88a60" stroke-width="0.55" opacity="0.8"/><line x1="110.5" y1="35.1" x2="113.9" y2="36.5" stroke="#b88a60" stroke-width="0.55" opacity="0.8"/><line x1="110.5" y1="35.1" x2="111.9" y2="38.4" stroke="#b88a60" stroke-width="0.55" opacity="0.8"/><line x1="110.5" y1="35.1" x2="109.2" y2="38.5" stroke="#b88a60" stroke-width="0.55" opacity="0.8"/><line x1="110.5" y1="35.1" x2="107.2" y2="36.5" stroke="#b88a60" stroke-width="0.55" opacity="0.8"/><line x1="110.5" y1="35.1" x2="107.2" y2="33.8" stroke="#b88a60" stroke-width="0.55" opacity="0.8"/><line x1="110.5" y1="35.1" x2="109.1" y2="31.8" stroke="#b88a60" stroke-width="0.55" opacity="0.8"/><line x1="110.5" y1="35.1" x2="111.9" y2="31.8" stroke="#b88a60" stroke-width="0.55" opacity="0.8"/><line x1="110.5" y1="35.1" x2="113.8" y2="33.7" stroke="#b88a60" stroke-width="0.55" opacity="0.8"/><line x1="110.5" y1="44.9" x2="112.7" y2="45.8" stroke="#b88a60" stroke-width="0.55" opacity="0.8"/><line x1="110.5" y1="44.9" x2="111.5" y2="47.1" stroke="#b88a60" stroke-width="0.55" opacity="0.8"/><line x1="110.5" y1="44.9" x2="109.6" y2="47.2" stroke="#b88a60" stroke-width="0.55" opacity="0.8"/><line x1="110.5" y1="44.9" x2="108.3" y2="45.9" stroke="#b88a60" stroke-width="0.55" opacity="0.8"/><line x1="110.5" y1="44.9" x2="108.3" y2="44.0" stroke="#b88a60" stroke-width="0.55" opacity="0.8"/><line x1="110.5" y1="44.9" x2="109.6" y2="42.7" stroke="#b88a60" stroke-width="0.55" opacity="0.8"/><line x1="110.5" y1="44.9" x2="111.4" y2="42.7" stroke="#b88a60" stroke-width="0.55" opacity="0.8"/><line x1="110.5" y1="44.9" x2="112.7" y2="44.0" stroke="#b88a60" stroke-width="0.55" opacity="0.8"/><line x1="110.5" y1="54.7" x2="113.9" y2="56.1" stroke="#b88a60" stroke-width="0.55" opacity="0.8"/><line x1="110.5" y1="54.7" x2="111.9" y2="58.0" stroke="#b88a60" stroke-width="0.55" opacity="0.8"/><line x1="110.5" y1="54.7" x2="109.2" y2="58.1" stroke="#b88a60" stroke-width="0.55" opacity="0.8"/><line x1="110.5" y1="54.7" x2="107.2" y2="56.1" stroke="#b88a60" stroke-width="0.55" opacity="0.8"/><line x1="110.5" y1="54.7" x2="107.2" y2="53.4" stroke="#b88a60" stroke-width="0.55" opacity="0.8"/><line x1="110.5" y1="54.7" x2="109.1" y2="51.4" stroke="#b88a60" stroke-width="0.55" opacity="0.8"/><line x1="110.5" y1="54.7" x2="111.9" y2="51.4" stroke="#b88a60" stroke-width="0.55" opacity="0.8"/><line x1="110.5" y1="54.7" x2="113.8" y2="53.3" stroke="#b88a60" stroke-width="0.55" opacity="0.8"/><line x1="110.5" y1="64.5" x2="112.7" y2="65.4" stroke="#b88a60" stroke-width="0.55" opacity="0.8"/><line x1="110.5" y1="64.5" x2="111.5" y2="66.7" stroke="#b88a60" stroke-width="0.55" opacity="0.8"/><line x1="110.5" y1="64.5" x2="109.6" y2="66.7" stroke="#b88a60" stroke-width="0.55" opacity="0.8"/><line x1="110.5" y1="64.5" x2="108.3" y2="65.5" stroke="#b88a60" stroke-width="0.55" opacity="0.8"/><line x1="110.5" y1="64.5" x2="108.3" y2="63.6" stroke="#b88a60" stroke-width="0.55" opacity="0.8"/><line x1="110.5" y1="64.5" x2="109.6" y2="62.3" stroke="#b88a60" stroke-width="0.55" opacity="0.8"/><line x1="110.5" y1="64.5" x2="111.4" y2="62.3" stroke="#b88a60" stroke-width="0.55" opacity="0.8"/><line x1="110.5" y1="64.5" x2="112.7" y2="63.6" stroke="#b88a60" stroke-width="0.55" opacity="0.8"/><line x1="110.5" y1="74.3" x2="113.9" y2="75.7" stroke="#b88a60" stroke-width="0.55" opacity="0.8"/><line x1="110.5" y1="74.3" x2="111.9" y2="77.6" stroke="#b88a60" stroke-width="0.55" opacity="0.8"/><line x1="110.5" y1="74.3" x2="109.2" y2="77.6" stroke="#b88a60" stroke-width="0.55" opacity="0.8"/><line x1="110.5" y1="74.3" x2="107.2" y2="75.7" stroke="#b88a60" stroke-width="0.55" opacity="0.8"/><line x1="110.5" y1="74.3" x2="107.2" y2="73.0" stroke="#b88a60" stroke-width="0.55" opacity="0.8"/><line x1="110.5" y1="74.3" x2="109.1" y2="71.0" stroke="#b88a60" stroke-width="0.55" opacity="0.8"/><line x1="110.5" y1="74.3" x2="111.9" y2="71.0" stroke="#b88a60" stroke-width="0.55" opacity="0.8"/><line x1="110.5" y1="74.3" x2="113.8" y2="72.9" stroke="#b88a60" stroke-width="0.55" opacity="0.8"/><line x1="110.5" y1="84.1" x2="112.7" y2="85.0" stroke="#b88a60" stroke-width="0.55" opacity="0.8"/><line x1="110.5" y1="84.1" x2="111.5" y2="86.3" stroke="#b88a60" stroke-width="0.55" opacity="0.8"/><line x1="110.5" y1="84.1" x2="109.6" y2="86.3" stroke="#b88a60" stroke-width="0.55" opacity="0.8"/><line x1="110.5" y1="84.1" x2="108.3" y2="85.0" stroke="#b88a60" stroke-width="0.55" opacity="0.8"/><line x1="110.5" y1="84.1" x2="108.3" y2="83.2" stroke="#b88a60" stroke-width="0.55" opacity="0.8"/><line x1="110.5" y1="84.1" x2="109.6" y2="81.9" stroke="#b88a60" stroke-width="0.55" opacity="0.8"/><line x1="110.5" y1="84.1" x2="111.4" y2="81.9" stroke="#b88a60" stroke-width="0.55" opacity="0.8"/><line x1="110.5" y1="84.1" x2="112.7" y2="83.2" stroke="#b88a60" stroke-width="0.55" opacity="0.8"/><circle cx="32.5" cy="25.3" r="0.9" fill="#30c030"/><circle cx="32.5" cy="35.1" r="1.2" fill="#30c030"/><circle cx="32.5" cy="44.9" r="0.9" fill="#30c030"/><circle cx="32.5" cy="54.7" r="1.2" fill="#30c030"/><circle cx="32.5" cy="64.5" r="0.9" fill="#30c030"/><circle cx="32.5" cy="74.3" r="1.2" fill="#30c030"/><circle cx="32.5" cy="84.1" r="0.9" fill="#30c030"/><circle cx="42.3" cy="15.5" r="0.9" fill="#30c030"/><circle cx="42.3" cy="25.3" r="1.2" fill="#30c030"/><circle cx="42.3" cy="35.1" r="0.9" fill="#30c030"/><circle cx="42.3" cy="44.9" r="1.2" fill="#30c030"/><circle cx="42.3" cy="54.7" r="0.9" fill="#30c030"/><circle cx="42.3" cy="64.5" r="1.2" fill="#30c030"/><circle cx="42.3" cy="74.3" r="0.9" fill="#30c030"/><circle cx="42.3" cy="84.1" r="1.2" fill="#30c030"/><circle cx="42.3" cy="93.9" r="0.9" fill="#30c030"/><circle cx="52.0" cy="15.5" r="1.2" fill="#30c030"/><circle cx="52.0" cy="25.3" r="0.9" fill="#30c030"/><circle cx="52.0" cy="35.1" r="1.2" fill="#30c030"/><circle cx="52.0" cy="44.9" r="0.9" fill="#30c030"/><circle cx="52.0" cy="54.7" r="1.2" fill="#30c030"/><circle cx="52.0" cy="64.5" r="0.9" fill="#30c030"/><circle cx="52.0" cy="74.3" r="1.2" fill="#30c030"/><circle cx="52.0" cy="84.1" r="0.9" fill="#30c030"/><circle cx="52.0" cy="93.9" r="1.2" fill="#30c030"/><circle cx="61.8" cy="15.5" r="0.9" fill="#30c030"/><circle cx="61.8" cy="25.3" r="1.2" fill="#30c030"/><circle cx="61.8" cy="35.1" r="0.9" fill="#30c030"/><circle cx="61.8" cy="44.9" r="1.2" fill="#30c030"/><circle cx="61.8" cy="54.7" r="0.9" fill="#30c030"/><circle cx="61.8" cy="64.5" r="1.2" fill="#30c030"/><circle cx="61.8" cy="74.3" r="0.9" fill="#30c030"/><circle cx="61.8" cy="84.1" r="1.2" fill="#30c030"/><circle cx="61.8" cy="93.9" r="0.9" fill="#30c030"/><circle cx="71.5" cy="15.5" r="1.2" fill="#30c030"/><circle cx="71.5" cy="25.3" r="0.9" fill="#30c030"/><circle cx="71.5" cy="35.1" r="1.2" fill="#30c030"/><circle cx="71.5" cy="44.9" r="0.9" fill="#30c030"/><circle cx="71.5" cy="54.7" r="1.2" fill="#30c030"/><circle cx="71.5" cy="64.5" r="0.9" fill="#30c030"/><circle cx="71.5" cy="74.3" r="1.2" fill="#30c030"/><circle cx="71.5" cy="84.1" r="0.9" fill="#30c030"/><circle cx="71.5" cy="93.9" r="1.2" fill="#30c030"/><circle cx="81.3" cy="15.5" r="0.9" fill="#30c030"/><circle cx="81.3" cy="25.3" r="1.2" fill="#30c030"/><circle cx="81.3" cy="35.1" r="0.9" fill="#30c030"/><circle cx="81.3" cy="44.9" r="1.2" fill="#30c030"/><circle cx="81.3" cy="54.7" r="0.9" fill="#30c030"/><circle cx="81.3" cy="64.5" r="1.2" fill="#30c030"/><circle cx="81.3" cy="74.3" r="0.9" fill="#30c030"/><circle cx="81.3" cy="84.1" r="1.2" fill="#30c030"/><circle cx="81.3" cy="93.9" r="0.9" fill="#30c030"/><circle cx="91.0" cy="15.5" r="1.2" fill="#30c030"/><circle cx="91.0" cy="25.3" r="0.9" fill="#30c030"/><circle cx="91.0" cy="35.1" r="1.2" fill="#30c030"/><circle cx="91.0" cy="44.9" r="0.9" fill="#30c030"/><circle cx="91.0" cy="54.7" r="1.2" fill="#30c030"/><circle cx="91.0" cy="64.5" r="0.9" fill="#30c030"/><circle cx="91.0" cy="74.3" r="1.2" fill="#30c030"/><circle cx="91.0" cy="84.1" r="0.9" fill="#30c030"/><circle cx="91.0" cy="93.9" r="1.2" fill="#30c030"/><circle cx="100.8" cy="15.5" r="0.9" fill="#30c030"/><circle cx="100.8" cy="25.3" r="1.2" fill="#30c030"/><circle cx="100.8" cy="35.1" r="0.9" fill="#30c030"/><circle cx="100.8" cy="44.9" r="1.2" fill="#30c030"/><circle cx="100.8" cy="54.7" r="0.9" fill="#30c030"/><circle cx="100.8" cy="64.5" r="1.2" fill="#30c030"/><circle cx="100.8" cy="74.3" r="0.9" fill="#30c030"/><circle cx="100.8" cy="84.1" r="1.2" fill="#30c030"/><circle cx="100.8" cy="93.9" r="0.9" fill="#30c030"/><circle cx="110.5" cy="25.3" r="0.9" fill="#30c030"/><circle cx="110.5" cy="35.1" r="1.2" fill="#30c030"/><circle cx="110.5" cy="44.9" r="0.9" fill="#30c030"/><circle cx="110.5" cy="54.7" r="1.2" fill="#30c030"/><circle cx="110.5" cy="64.5" r="0.9" fill="#30c030"/><circle cx="110.5" cy="74.3" r="1.2" fill="#30c030"/><circle cx="110.5" cy="84.1" r="0.9" fill="#30c030"/><circle cx="36.0" cy="31.8" r="1.55" fill="url(#gy)"/><circle cx="39.0" cy="28.8" r="1.55" fill="url(#gy)"/><circle cx="36.0" cy="38.6" r="1.55" fill="url(#gy)"/><circle cx="39.0" cy="41.6" r="1.55" fill="url(#gy)"/><circle cx="36.0" cy="51.4" r="1.55" fill="url(#gy)"/><circle cx="39.0" cy="48.4" r="1.55" fill="url(#gy)"/><circle cx="36.0" cy="58.2" r="1.55" fill="url(#gy)"/><circle cx="39.0" cy="61.2" r="1.55" fill="url(#gy)"/><circle cx="36.0" cy="71.0" r="1.55" fill="url(#gy)"/><circle cx="39.0" cy="68.0" r="1.55" fill="url(#gy)"/><circle cx="36.0" cy="77.8" r="1.55" fill="url(#gy)"/><circle cx="39.0" cy="80.8" r="1.55" fill="url(#gy)"/><circle cx="45.7" cy="22.0" r="1.55" fill="url(#gy)"/><circle cx="48.7" cy="19.0" r="1.55" fill="url(#gy)"/><circle cx="45.7" cy="28.8" r="1.55" fill="url(#gy)"/><circle cx="48.7" cy="31.8" r="1.55" fill="url(#gy)"/><circle cx="45.7" cy="41.6" r="1.55" fill="url(#gy)"/><circle cx="48.7" cy="38.6" r="1.55" fill="url(#gy)"/><circle cx="45.7" cy="48.4" r="1.55" fill="url(#gy)"/><circle cx="48.7" cy="51.4" r="1.55" fill="url(#gy)"/><circle cx="45.7" cy="61.2" r="1.55" fill="url(#gy)"/><circle cx="48.7" cy="58.2" r="1.55" fill="url(#gy)"/><circle cx="45.7" cy="68.0" r="1.55" fill="url(#gy)"/><circle cx="48.7" cy="71.0" r="1.55" fill="url(#gy)"/><circle cx="45.7" cy="80.8" r="1.55" fill="url(#gy)"/><circle cx="48.7" cy="77.8" r="1.55" fill="url(#gy)"/><circle cx="45.7" cy="87.5" r="1.55" fill="url(#gy)"/><circle cx="48.7" cy="90.5" r="1.55" fill="url(#gy)"/><circle cx="55.5" cy="19.0" r="1.55" fill="url(#gy)"/><circle cx="58.5" cy="22.0" r="1.55" fill="url(#gy)"/><circle cx="55.5" cy="31.8" r="1.55" fill="url(#gy)"/><circle cx="58.5" cy="28.8" r="1.55" fill="url(#gy)"/><circle cx="55.5" cy="38.6" r="1.55" fill="url(#gy)"/><circle cx="58.5" cy="41.6" r="1.55" fill="url(#gy)"/><circle cx="55.5" cy="51.4" r="1.55" fill="url(#gy)"/><circle cx="58.5" cy="48.4" r="1.55" fill="url(#gy)"/><circle cx="55.5" cy="58.2" r="1.55" fill="url(#gy)"/><circle cx="58.5" cy="61.2" r="1.55" fill="url(#gy)"/><circle cx="55.5" cy="71.0" r="1.55" fill="url(#gy)"/><circle cx="58.5" cy="68.0" r="1.55" fill="url(#gy)"/><circle cx="55.5" cy="77.8" r="1.55" fill="url(#gy)"/><circle cx="58.5" cy="80.8" r="1.55" fill="url(#gy)"/><circle cx="55.5" cy="90.5" r="1.55" fill="url(#gy)"/><circle cx="58.5" cy="87.5" r="1.55" fill="url(#gy)"/><circle cx="65.2" cy="22.0" r="1.55" fill="url(#gy)"/><circle cx="68.2" cy="19.0" r="1.55" fill="url(#gy)"/><circle cx="65.2" cy="28.8" r="1.55" fill="url(#gy)"/><circle cx="68.2" cy="31.8" r="1.55" fill="url(#gy)"/><circle cx="65.2" cy="41.6" r="1.55" fill="url(#gy)"/><circle cx="68.2" cy="38.6" r="1.55" fill="url(#gy)"/><circle cx="65.2" cy="48.4" r="1.55" fill="url(#gy)"/><circle cx="68.2" cy="51.4" r="1.55" fill="url(#gy)"/><circle cx="65.2" cy="61.2" r="1.55" fill="url(#gy)"/><circle cx="68.2" cy="58.2" r="1.55" fill="url(#gy)"/><circle cx="65.2" cy="68.0" r="1.55" fill="url(#gy)"/><circle cx="68.2" cy="71.0" r="1.55" fill="url(#gy)"/><circle cx="65.2" cy="80.8" r="1.55" fill="url(#gy)"/><circle cx="68.2" cy="77.8" r="1.55" fill="url(#gy)"/><circle cx="65.2" cy="87.5" r="1.55" fill="url(#gy)"/><circle cx="68.2" cy="90.5" r="1.55" fill="url(#gy)"/><circle cx="75.0" cy="19.0" r="1.55" fill="url(#gy)"/><circle cx="78.0" cy="22.0" r="1.55" fill="url(#gy)"/><circle cx="75.0" cy="31.8" r="1.55" fill="url(#gy)"/><circle cx="78.0" cy="28.8" r="1.55" fill="url(#gy)"/><circle cx="75.0" cy="38.6" r="1.55" fill="url(#gy)"/><circle cx="78.0" cy="41.6" r="1.55" fill="url(#gy)"/><circle cx="75.0" cy="51.4" r="1.55" fill="url(#gy)"/><circle cx="78.0" cy="48.4" r="1.55" fill="url(#gy)"/><circle cx="75.0" cy="58.2" r="1.55" fill="url(#gy)"/><circle cx="78.0" cy="61.2" r="1.55" fill="url(#gy)"/><circle cx="75.0" cy="71.0" r="1.55" fill="url(#gy)"/><circle cx="78.0" cy="68.0" r="1.55" fill="url(#gy)"/><circle cx="75.0" cy="77.8" r="1.55" fill="url(#gy)"/><circle cx="78.0" cy="80.8" r="1.55" fill="url(#gy)"/><circle cx="75.0" cy="90.5" r="1.55" fill="url(#gy)"/><circle cx="78.0" cy="87.5" r="1.55" fill="url(#gy)"/><circle cx="84.7" cy="22.0" r="1.55" fill="url(#gy)"/><circle cx="87.7" cy="19.0" r="1.55" fill="url(#gy)"/><circle cx="84.7" cy="28.8" r="1.55" fill="url(#gy)"/><circle cx="87.7" cy="31.8" r="1.55" fill="url(#gy)"/><circle cx="84.7" cy="41.6" r="1.55" fill="url(#gy)"/><circle cx="87.7" cy="38.6" r="1.55" fill="url(#gy)"/><circle cx="84.7" cy="48.4" r="1.55" fill="url(#gy)"/><circle cx="87.7" cy="51.4" r="1.55" fill="url(#gy)"/><circle cx="84.7" cy="61.2" r="1.55" fill="url(#gy)"/><circle cx="87.7" cy="58.2" r="1.55" fill="url(#gy)"/><circle cx="84.7" cy="68.0" r="1.55" fill="url(#gy)"/><circle cx="87.7" cy="71.0" r="1.55" fill="url(#gy)"/><circle cx="84.7" cy="80.8" r="1.55" fill="url(#gy)"/><circle cx="87.7" cy="77.8" r="1.55" fill="url(#gy)"/><circle cx="84.7" cy="87.5" r="1.55" fill="url(#gy)"/><circle cx="87.7" cy="90.5" r="1.55" fill="url(#gy)"/><circle cx="94.5" cy="19.0" r="1.55" fill="url(#gy)"/><circle cx="97.5" cy="22.0" r="1.55" fill="url(#gy)"/><circle cx="94.5" cy="31.8" r="1.55" fill="url(#gy)"/><circle cx="97.5" cy="28.8" r="1.55" fill="url(#gy)"/><circle cx="94.5" cy="38.6" r="1.55" fill="url(#gy)"/><circle cx="97.5" cy="41.6" r="1.55" fill="url(#gy)"/><circle cx="94.5" cy="51.4" r="1.55" fill="url(#gy)"/><circle cx="97.5" cy="48.4" r="1.55" fill="url(#gy)"/><circle cx="94.5" cy="58.2" r="1.55" fill="url(#gy)"/><circle cx="97.5" cy="61.2" r="1.55" fill="url(#gy)"/><circle cx="94.5" cy="71.0" r="1.55" fill="url(#gy)"/><circle cx="97.5" cy="68.0" r="1.55" fill="url(#gy)"/><circle cx="94.5" cy="77.8" r="1.55" fill="url(#gy)"/><circle cx="97.5" cy="80.8" r="1.55" fill="url(#gy)"/><circle cx="94.5" cy="90.5" r="1.55" fill="url(#gy)"/><circle cx="97.5" cy="87.5" r="1.55" fill="url(#gy)"/><circle cx="104.2" cy="28.8" r="1.55" fill="url(#gy)"/><circle cx="107.2" cy="31.8" r="1.55" fill="url(#gy)"/><circle cx="104.2" cy="41.6" r="1.55" fill="url(#gy)"/><circle cx="107.2" cy="38.6" r="1.55" fill="url(#gy)"/><circle cx="104.2" cy="48.4" r="1.55" fill="url(#gy)"/><circle cx="107.2" cy="51.4" r="1.55" fill="url(#gy)"/><circle cx="104.2" cy="61.2" r="1.55" fill="url(#gy)"/><circle cx="107.2" cy="58.2" r="1.55" fill="url(#gy)"/><circle cx="104.2" cy="68.0" r="1.55" fill="url(#gy)"/><circle cx="107.2" cy="71.0" r="1.55" fill="url(#gy)"/><circle cx="104.2" cy="80.8" r="1.55" fill="url(#gy)"/><circle cx="107.2" cy="77.8" r="1.55" fill="url(#gy)"/><rect x="133.5" y="94.5" width="10" height="15" fill="#d8d8e8" stroke="#505050" stroke-width="0.5"/><circle cx="137.0" cy="97.5" r="1.8" fill="#e028d8"/><circle cx="137.0" cy="102.0" r="1.8" fill="#f0e800"/><circle cx="137.0" cy="106.5" r="1.8" fill="#30c030"/><line x1="139.5" y1="97.5" x2="142.5" y2="97.5" stroke="#c0c0c0" stroke-width="0.6" opacity="1"/><line x1="139.5" y1="102.0" x2="142.5" y2="102.0" stroke="#c0c0c0" stroke-width="0.6" opacity="1"/><line x1="139.5" y1="106.5" x2="142.5" y2="106.5" stroke="#c0c0c0" stroke-width="0.6" opacity="1"/></svg>
<div class="t" style="left:1256px;top:205.04px;font-size:11px;color:#000;font-weight:bold;letter-spacing:0.55px;">Network with broken-off b...</div>
<div class="t" style="left:1256px;top:218.04px;font-size:11px;color:#000;letter-spacing:-0.25px;-webkit-text-stroke:0.2px #000;">4 atom(s) in parameter list</div>
<div class="t" style="left:1256px;top:231.04px;font-size:11px;color:#000;letter-spacing:-0.25px;-webkit-text-stroke:0.2px #000;">0 molecular, 1 polymeric unit(s)</div>
<div class="t" style="left:1256px;top:244.04px;font-size:11px;color:#000;letter-spacing:-0.25px;-webkit-text-stroke:0.2px #000;">1409 created atom(s)</div>
<div class="t" style="left:1256px;top:257.05px;font-size:11px;color:#000;letter-spacing:-0.25px;-webkit-text-stroke:0.2px #000;">&nbsp;=&nbsp;137*P+5&nbsp;820*S-2&nbsp;452*Na+1</div>
<div class="t" style="left:1256px;top:270.05px;font-size:11px;color:#000;letter-spacing:-0.25px;-webkit-text-stroke:0.2px #000;">2964 created bond(s) (0 contacts,</div>
<div class="t" style="left:1256px;top:283.05px;font-size:11px;color:#000;letter-spacing:-0.25px;-webkit-text-stroke:0.2px #000;">0 H-bonds)</div>
<div class="t" style="left:1256px;top:296.05px;font-size:11px;color:#000;letter-spacing:-0.25px;-webkit-text-stroke:0.2px #000;">0 created molecule(s) (0 frag.)</div>
<div class="t" style="left:1256px;top:309.05px;font-size:11px;color:#000;letter-spacing:-0.25px;-webkit-text-stroke:0.2px #000;">0 cell edges</div>
<div class="t" style="left:1256px;top:322.05px;font-size:11px;color:#000;letter-spacing:-0.25px;-webkit-text-stroke:0.2px #000;">0 polyhedra (0 faces)</div>
<div class="t" style="left:1256px;top:335.05px;font-size:11px;color:#000;letter-spacing:-0.25px;-webkit-text-stroke:0.2px #000;">0 atom, 0 bond label(s)</div>
<div class="b" style="left:44px;top:375px;width:161px;height:141px;background:linear-gradient(180deg,#efefef 0,#e6e6e6 55%,#d4d4d4 100%);border:1px solid #a0a0a0;box-sizing:border-box;"></div>
<svg style="left:52px;top:395px" width="145" height="100" viewBox="0 0 145 100"><rect width="145" height="100" fill="#000"/><line x1="12.3" y1="2.0" x2="12.3" y2="13.0" stroke="#b0b0b0" stroke-width="0.5" opacity="1"/><line x1="12.3" y1="13.0" x2="21.0" y2="12.8" stroke="#b0b0b0" stroke-width="0.5" opacity="1"/><circle cx="12.3" cy="6.0" r="0.7" fill="#e0e0e0"/><circle cx="16.5" cy="12.8" r="0.7" fill="#e0e0e0"/><rect x="42.4" y="26.7" width="50.8" height="50.4" fill="none" stroke="#b8b8b8" stroke-width="0.9"/><rect x="49.5" y="21.2" width="50.8" height="50.8" fill="none" stroke="#b8b8b8" stroke-width="0.9"/><line x1="42.4" y1="26.7" x2="49.5" y2="21.2" stroke="#b8b8b8" stroke-width="0.9" opacity="1"/><line x1="93.2" y1="26.7" x2="100.3" y2="21.2" stroke="#b8b8b8" stroke-width="0.9" opacity="1"/><line x1="42.4" y1="77.1" x2="49.5" y2="72.0" stroke="#b8b8b8" stroke-width="0.9" opacity="1"/><line x1="93.2" y1="77.1" x2="100.3" y2="72.0" stroke="#b8b8b8" stroke-width="0.9" opacity="1"/><line x1="34.1" y1="17.4" x2="42.4" y2="26.3" stroke="#d89a28" stroke-width="0.85" opacity="1"/><line x1="49.1" y1="18.0" x2="42.4" y2="26.3" stroke="#d89a28" stroke-width="0.85" opacity="1"/><line x1="39.8" y1="31.5" x2="42.4" y2="26.3" stroke="#d89a28" stroke-width="0.85" opacity="1"/><line x1="52.7" y1="33.7" x2="42.4" y2="26.3" stroke="#d89a28" stroke-width="0.85" opacity="1"/><line x1="64.3" y1="39.2" x2="71.0" y2="49.1" stroke="#d89a28" stroke-width="0.85" opacity="1"/><line x1="79.0" y1="42.2" x2="71.0" y2="49.1" stroke="#d89a28" stroke-width="0.85" opacity="1"/><line x1="90.6" y1="31.5" x2="92.8" y2="26.7" stroke="#d89a28" stroke-width="0.85" opacity="1"/><line x1="102.8" y1="34.1" x2="92.8" y2="26.7" stroke="#d89a28" stroke-width="0.85" opacity="1"/><line x1="84.6" y1="17.4" x2="92.8" y2="26.7" stroke="#d89a28" stroke-width="0.85" opacity="1"/><line x1="99.2" y1="18.0" x2="92.8" y2="26.7" stroke="#d89a28" stroke-width="0.85" opacity="1"/><line x1="80.3" y1="57.6" x2="71.0" y2="49.1" stroke="#d89a28" stroke-width="0.85" opacity="1"/><line x1="34.4" y1="67.9" x2="42.7" y2="76.9" stroke="#d89a28" stroke-width="0.85" opacity="1"/><line x1="49.5" y1="68.4" x2="42.7" y2="76.9" stroke="#d89a28" stroke-width="0.85" opacity="1"/><line x1="40.5" y1="82.0" x2="42.7" y2="76.9" stroke="#d89a28" stroke-width="0.85" opacity="1"/><line x1="53.0" y1="84.2" x2="42.7" y2="76.9" stroke="#d89a28" stroke-width="0.85" opacity="1"/><line x1="84.8" y1="68.1" x2="93.2" y2="77.1" stroke="#d89a28" stroke-width="0.85" opacity="1"/><line x1="99.6" y1="68.8" x2="93.2" y2="77.1" stroke="#d89a28" stroke-width="0.85" opacity="1"/><line x1="90.6" y1="82.3" x2="93.2" y2="77.1" stroke="#d89a28" stroke-width="0.85" opacity="1"/><line x1="103.5" y1="84.6" x2="93.2" y2="77.1" stroke="#d89a28" stroke-width="0.85" opacity="1"/><line x1="60.7" y1="58.1" x2="46.5" y2="48.6" stroke="#d89a28" stroke-width="0.85" opacity="1"/><line x1="60.7" y1="58.1" x2="43.0" y2="51.2" stroke="#d89a28" stroke-width="0.85" opacity="1"/><line x1="60.7" y1="58.1" x2="67.5" y2="52.1" stroke="#d89a28" stroke-width="0.85" opacity="1"/><line x1="60.7" y1="58.1" x2="74.3" y2="46.5" stroke="#d89a28" stroke-width="0.85" opacity="1"/><line x1="60.7" y1="58.1" x2="46.3" y2="74.3" stroke="#d89a28" stroke-width="0.85" opacity="1"/><line x1="60.7" y1="58.1" x2="70.7" y2="74.8" stroke="#d89a28" stroke-width="0.85" opacity="1"/><line x1="60.7" y1="58.1" x2="74.3" y2="72.2" stroke="#d89a28" stroke-width="0.85" opacity="1"/><line x1="80.3" y1="57.6" x2="67.5" y2="52.1" stroke="#d89a28" stroke-width="0.85" opacity="1"/><line x1="80.3" y1="57.6" x2="74.3" y2="46.5" stroke="#d89a28" stroke-width="0.85" opacity="1"/><line x1="80.3" y1="57.6" x2="97.0" y2="48.8" stroke="#d89a28" stroke-width="0.85" opacity="1"/><line x1="80.3" y1="57.6" x2="93.6" y2="51.7" stroke="#d89a28" stroke-width="0.85" opacity="1"/><line x1="80.3" y1="57.6" x2="70.7" y2="74.8" stroke="#d89a28" stroke-width="0.85" opacity="1"/><line x1="80.3" y1="57.6" x2="74.3" y2="72.2" stroke="#d89a28" stroke-width="0.85" opacity="1"/><line x1="80.3" y1="57.6" x2="96.7" y2="74.3" stroke="#d89a28" stroke-width="0.85" opacity="1"/><line x1="64.3" y1="39.2" x2="45.6" y2="23.8" stroke="#d89a28" stroke-width="0.85" opacity="1"/><line x1="64.3" y1="39.2" x2="70.0" y2="24.2" stroke="#d89a28" stroke-width="0.85" opacity="1"/><line x1="64.3" y1="39.2" x2="73.9" y2="21.6" stroke="#d89a28" stroke-width="0.85" opacity="1"/><line x1="64.3" y1="39.2" x2="46.5" y2="48.6" stroke="#d89a28" stroke-width="0.85" opacity="1"/><line x1="64.3" y1="39.2" x2="43.0" y2="51.2" stroke="#d89a28" stroke-width="0.85" opacity="1"/><line x1="64.3" y1="39.2" x2="67.5" y2="52.1" stroke="#d89a28" stroke-width="0.85" opacity="1"/><line x1="64.3" y1="39.2" x2="74.3" y2="46.5" stroke="#d89a28" stroke-width="0.85" opacity="1"/><line x1="79.0" y1="42.2" x2="70.0" y2="24.2" stroke="#d89a28" stroke-width="0.85" opacity="1"/><line x1="79.0" y1="42.2" x2="73.9" y2="21.6" stroke="#d89a28" stroke-width="0.85" opacity="1"/><line x1="79.0" y1="42.2" x2="96.1" y2="23.8" stroke="#d89a28" stroke-width="0.85" opacity="1"/><line x1="79.0" y1="42.2" x2="67.5" y2="52.1" stroke="#d89a28" stroke-width="0.85" opacity="1"/><line x1="79.0" y1="42.2" x2="74.3" y2="46.5" stroke="#d89a28" stroke-width="0.85" opacity="1"/><line x1="79.0" y1="42.2" x2="97.0" y2="48.8" stroke="#d89a28" stroke-width="0.85" opacity="1"/><line x1="79.0" y1="42.2" x2="93.6" y2="51.7" stroke="#d89a28" stroke-width="0.85" opacity="1"/><line x1="59.8" y1="28.3" x2="45.6" y2="23.8" stroke="#d89a28" stroke-width="0.85" opacity="1"/><line x1="59.8" y1="28.3" x2="70.0" y2="24.2" stroke="#d89a28" stroke-width="0.85" opacity="1"/><line x1="59.8" y1="28.3" x2="73.9" y2="21.6" stroke="#d89a28" stroke-width="0.85" opacity="1"/><line x1="59.8" y1="28.3" x2="46.5" y2="48.6" stroke="#d89a28" stroke-width="0.85" opacity="1"/><line x1="59.8" y1="28.3" x2="43.0" y2="51.2" stroke="#d89a28" stroke-width="0.85" opacity="1"/><line x1="59.8" y1="28.3" x2="67.5" y2="52.1" stroke="#d89a28" stroke-width="0.85" opacity="1"/><line x1="59.8" y1="28.3" x2="74.3" y2="46.5" stroke="#d89a28" stroke-width="0.85" opacity="1"/><line x1="56.6" y1="63.6" x2="46.5" y2="48.6" stroke="#d89a28" stroke-width="0.85" opacity="1"/><line x1="56.6" y1="63.6" x2="43.0" y2="51.2" stroke="#d89a28" stroke-width="0.85" opacity="1"/><line x1="56.6" y1="63.6" x2="67.5" y2="52.1" stroke="#d89a28" stroke-width="0.85" opacity="1"/><line x1="56.6" y1="63.6" x2="74.3" y2="46.5" stroke="#d89a28" stroke-width="0.85" opacity="1"/><line x1="56.6" y1="63.6" x2="46.3" y2="74.3" stroke="#d89a28" stroke-width="0.85" opacity="1"/><line x1="56.6" y1="63.6" x2="70.7" y2="74.8" stroke="#d89a28" stroke-width="0.85" opacity="1"/><line x1="56.6" y1="63.6" x2="74.3" y2="72.2" stroke="#d89a28" stroke-width="0.85" opacity="1"/><line x1="83.5" y1="36.6" x2="70.0" y2="24.2" stroke="#d89a28" stroke-width="0.85" opacity="1"/><line x1="83.5" y1="36.6" x2="73.9" y2="21.6" stroke="#d89a28" stroke-width="0.85" opacity="1"/><line x1="83.5" y1="36.6" x2="96.1" y2="23.8" stroke="#d89a28" stroke-width="0.85" opacity="1"/><line x1="83.5" y1="36.6" x2="67.5" y2="52.1" stroke="#d89a28" stroke-width="0.85" opacity="1"/><line x1="83.5" y1="36.6" x2="74.3" y2="46.5" stroke="#d89a28" stroke-width="0.85" opacity="1"/><line x1="83.5" y1="36.6" x2="97.0" y2="48.8" stroke="#d89a28" stroke-width="0.85" opacity="1"/><line x1="83.5" y1="36.6" x2="93.6" y2="51.7" stroke="#d89a28" stroke-width="0.85" opacity="1"/><line x1="84.8" y1="68.1" x2="67.5" y2="52.1" stroke="#d89a28" stroke-width="0.85" opacity="1"/><line x1="84.8" y1="68.1" x2="74.3" y2="46.5" stroke="#d89a28" stroke-width="0.85" opacity="1"/><line x1="84.8" y1="68.1" x2="97.0" y2="48.8" stroke="#d89a28" stroke-width="0.85" opacity="1"/><line x1="84.8" y1="68.1" x2="93.6" y2="51.7" stroke="#d89a28" stroke-width="0.85" opacity="1"/><line x1="84.8" y1="68.1" x2="70.7" y2="74.8" stroke="#d89a28" stroke-width="0.85" opacity="1"/><line x1="84.8" y1="68.1" x2="74.3" y2="72.2" stroke="#d89a28" stroke-width="0.85" opacity="1"/><line x1="84.8" y1="68.1" x2="96.7" y2="74.3" stroke="#d89a28" stroke-width="0.85" opacity="1"/><circle cx="42.4" cy="26.3" r="2" fill="url(#gm)"/><circle cx="92.8" cy="26.7" r="2" fill="url(#gm)"/><circle cx="71.0" cy="49.1" r="2" fill="url(#gm)"/><circle cx="42.7" cy="76.9" r="2" fill="url(#gm)"/><circle cx="93.2" cy="77.1" r="2" fill="url(#gm)"/><circle cx="45.6" cy="23.8" r="2.6" fill="url(#gw)"/><circle cx="70.0" cy="24.2" r="2.6" fill="url(#gw)"/><circle cx="73.9" cy="21.6" r="2.6" fill="url(#gw)"/><circle cx="96.1" cy="23.8" r="2.6" fill="url(#gw)"/><circle cx="46.5" cy="48.6" r="2.6" fill="url(#gw)"/><circle cx="43.0" cy="51.2" r="2.6" fill="url(#gw)"/><circle cx="67.5" cy="52.1" r="2.6" fill="url(#gw)"/><circle cx="74.3" cy="46.5" r="2.6" fill="url(#gw)"/><circle cx="97.0" cy="48.8" r="2.6" fill="url(#gw)"/><circle cx="93.6" cy="51.7" r="2.6" fill="url(#gw)"/><circle cx="46.3" cy="74.3" r="2.6" fill="url(#gw)"/><circle cx="70.7" cy="74.8" r="2.6" fill="url(#gw)"/><circle cx="74.3" cy="72.2" r="2.6" fill="url(#gw)"/><circle cx="96.7" cy="74.3" r="2.6" fill="url(#gw)"/><circle cx="40.9" cy="12.2" r="3.9" fill="url(#gy)"/><circle cx="55.9" cy="12.9" r="3.9" fill="url(#gy)"/><circle cx="34.1" cy="17.4" r="3.9" fill="url(#gy)"/><circle cx="49.1" cy="18.0" r="3.9" fill="url(#gy)"/><circle cx="33.2" cy="36.6" r="3.9" fill="url(#gy)"/><circle cx="39.8" cy="31.5" r="3.9" fill="url(#gy)"/><circle cx="52.7" cy="33.7" r="3.9" fill="url(#gy)"/><circle cx="59.8" cy="28.3" r="3.9" fill="url(#gy)"/><circle cx="64.3" cy="39.2" r="3.9" fill="url(#gy)"/><circle cx="79.0" cy="42.2" r="3.9" fill="url(#gy)"/><circle cx="83.5" cy="36.6" r="3.9" fill="url(#gy)"/><circle cx="90.6" cy="31.5" r="3.9" fill="url(#gy)"/><circle cx="102.8" cy="34.1" r="3.9" fill="url(#gy)"/><circle cx="109.9" cy="28.5" r="3.9" fill="url(#gy)"/><circle cx="84.6" cy="17.4" r="3.9" fill="url(#gy)"/><circle cx="91.5" cy="12.2" r="3.9" fill="url(#gy)"/><circle cx="99.2" cy="18.0" r="3.9" fill="url(#gy)"/><circle cx="106.4" cy="12.9" r="3.9" fill="url(#gy)"/><circle cx="60.7" cy="58.1" r="3.9" fill="url(#gy)"/><circle cx="80.3" cy="57.6" r="3.9" fill="url(#gy)"/><circle cx="41.4" cy="62.7" r="3.9" fill="url(#gy)"/><circle cx="56.6" cy="63.6" r="3.9" fill="url(#gy)"/><circle cx="34.4" cy="67.9" r="3.9" fill="url(#gy)"/><circle cx="49.5" cy="68.4" r="3.9" fill="url(#gy)"/><circle cx="59.8" cy="78.7" r="3.9" fill="url(#gy)"/><circle cx="40.5" cy="82.0" r="3.9" fill="url(#gy)"/><circle cx="53.0" cy="84.2" r="3.9" fill="url(#gy)"/><circle cx="33.4" cy="87.1" r="3.9" fill="url(#gy)"/><circle cx="91.9" cy="63.0" r="3.9" fill="url(#gy)"/><circle cx="106.7" cy="63.6" r="3.9" fill="url(#gy)"/><circle cx="84.8" cy="68.1" r="3.9" fill="url(#gy)"/><circle cx="99.6" cy="68.8" r="3.9" fill="url(#gy)"/><circle cx="110.5" cy="79.0" r="3.9" fill="url(#gy)"/><circle cx="90.6" cy="82.3" r="3.9" fill="url(#gy)"/><circle cx="103.5" cy="84.6" r="3.9" fill="url(#gy)"/><circle cx="83.8" cy="87.4" r="3.9" fill="url(#gy)"/><rect x="133.5" y="84.5" width="10" height="15" fill="#202020" stroke="#505050" stroke-width="0.5"/><circle cx="137.0" cy="87.5" r="1.8" fill="#e028d8"/><circle cx="137.0" cy="92.0" r="1.8" fill="#f0e800"/><circle cx="137.0" cy="96.5" r="1.8" fill="#e8e8e8"/><line x1="139.5" y1="87.5" x2="142.5" y2="87.5" stroke="#c0c0c0" stroke-width="0.6" opacity="1"/><line x1="139.5" y1="92.0" x2="142.5" y2="92.0" stroke="#c0c0c0" stroke-width="0.6" opacity="1"/><line x1="139.5" y1="96.5" x2="142.5" y2="96.5" stroke="#c0c0c0" stroke-width="0.6" opacity="1"/></svg>
<div class="t" style="left:212px;top:375.05px;font-size:11px;color:#000;font-weight:bold;letter-spacing:0.55px;">Picture 5</div>
<div class="t" style="left:212px;top:388.05px;font-size:11px;color:#000;letter-spacing:-0.25px;-webkit-text-stroke:0.2px #000;">4 atom(s) in parameter list</div>
<div class="t" style="left:212px;top:401.05px;font-size:11px;color:#000;letter-spacing:-0.25px;-webkit-text-stroke:0.2px #000;">0 molecular, 1 polymeric unit(s)</div>
<div class="t" style="left:212px;top:414.05px;font-size:11px;color:#000;letter-spacing:-0.25px;-webkit-text-stroke:0.2px #000;">59 created atom(s)</div>
<div class="t" style="left:212px;top:427.05px;font-size:11px;color:#000;letter-spacing:-0.25px;-webkit-text-stroke:0.2px #000;">&nbsp;=&nbsp;9*P+5&nbsp;36*S-2&nbsp;14*Na+1</div>
<div class="t" style="left:212px;top:440.05px;font-size:11px;color:#000;letter-spacing:-0.25px;-webkit-text-stroke:0.2px #000;">64 created bond(s) (0 contacts, 0</div>
<div class="t" style="left:212px;top:453.05px;font-size:11px;color:#000;letter-spacing:-0.25px;-webkit-text-stroke:0.2px #000;">H-bonds)</div>
<div class="t" style="left:212px;top:466.05px;font-size:11px;color:#000;letter-spacing:-0.25px;-webkit-text-stroke:0.2px #000;">0 created molecule(s) (0 frag.)</div>
<div class="t" style="left:212px;top:479.05px;font-size:11px;color:#000;letter-spacing:-0.25px;-webkit-text-stroke:0.2px #000;">12 cell edges</div>
<div class="t" style="left:212px;top:492.05px;font-size:11px;color:#000;letter-spacing:-0.25px;-webkit-text-stroke:0.2px #000;">0 polyhedra (0 faces)</div>
<div class="t" style="left:212px;top:505.05px;font-size:11px;color:#000;letter-spacing:-0.25px;-webkit-text-stroke:0.2px #000;">0 atom, 0 bond label(s)</div>
<svg style="left:392px;top:369px" width="161" height="147"><path d="M0.5 146.5V0.5H80.5V6.5H160.5V146.5Z" fill="url(#cg)" stroke="#a0a0a0"/></svg>
<svg style="left:400px;top:395px" width="145" height="100" viewBox="0 0 145 100"><rect width="145" height="100" fill="#000"/><line x1="12.3" y1="2.0" x2="12.3" y2="13.0" stroke="#b0b0b0" stroke-width="0.5" opacity="1"/><line x1="12.3" y1="13.0" x2="21.0" y2="12.8" stroke="#b0b0b0" stroke-width="0.5" opacity="1"/><circle cx="12.3" cy="6.0" r="0.7" fill="#e0e0e0"/><circle cx="16.5" cy="12.8" r="0.7" fill="#e0e0e0"/><rect x="42.4" y="26.7" width="50.8" height="50.4" fill="none" stroke="#b8b8b8" stroke-width="0.9"/><rect x="49.5" y="21.2" width="50.8" height="50.8" fill="none" stroke="#b8b8b8" stroke-width="0.9"/><line x1="42.4" y1="26.7" x2="49.5" y2="21.2" stroke="#b8b8b8" stroke-width="0.9" opacity="1"/><line x1="93.2" y1="26.7" x2="100.3" y2="21.2" stroke="#b8b8b8" stroke-width="0.9" opacity="1"/><line x1="42.4" y1="77.1" x2="49.5" y2="72.0" stroke="#b8b8b8" stroke-width="0.9" opacity="1"/><line x1="93.2" y1="77.1" x2="100.3" y2="72.0" stroke="#b8b8b8" stroke-width="0.9" opacity="1"/><line x1="64.3" y1="39.2" x2="71.0" y2="49.1" stroke="#d89a28" stroke-width="0.85" opacity="1"/><line x1="79.0" y1="42.2" x2="71.0" y2="49.1" stroke="#d89a28" stroke-width="0.85" opacity="1"/><line x1="60.7" y1="58.1" x2="71.0" y2="49.1" stroke="#d89a28" stroke-width="0.85" opacity="1"/><line x1="80.3" y1="57.6" x2="71.0" y2="49.1" stroke="#d89a28" stroke-width="0.85" opacity="1"/><line x1="60.7" y1="58.1" x2="46.5" y2="48.6" stroke="#d89a28" stroke-width="0.85" opacity="1"/><line x1="60.7" y1="58.1" x2="43.0" y2="51.2" stroke="#d89a28" stroke-width="0.85" opacity="1"/><line x1="60.7" y1="58.1" x2="67.5" y2="52.1" stroke="#d89a28" stroke-width="0.85" opacity="1"/><line x1="60.7" y1="58.1" x2="74.3" y2="46.5" stroke="#d89a28" stroke-width="0.85" opacity="1"/><line x1="60.7" y1="58.1" x2="46.3" y2="74.3" stroke="#d89a28" stroke-width="0.85" opacity="1"/><line x1="60.7" y1="58.1" x2="70.7" y2="74.8" stroke="#d89a28" stroke-width="0.85" opacity="1"/><line x1="60.7" y1="58.1" x2="74.3" y2="72.2" stroke="#d89a28" stroke-width="0.85" opacity="1"/><line x1="80.3" y1="57.6" x2="67.5" y2="52.1" stroke="#d89a28" stroke-width="0.85" opacity="1"/><line x1="80.3" y1="57.6" x2="74.3" y2="46.5" stroke="#d89a28" stroke-width="0.85" opacity="1"/><line x1="80.3" y1="57.6" x2="97.0" y2="48.8" stroke="#d89a28" stroke-width="0.85" opacity="1"/><line x1="80.3" y1="57.6" x2="93.6" y2="51.7" stroke="#d89a28" stroke-width="0.85" opacity="1"/><line x1="80.3" y1="57.6" x2="70.7" y2="74.8" stroke="#d89a28" stroke-width="0.85" opacity="1"/><line x1="80.3" y1="57.6" x2="74.3" y2="72.2" stroke="#d89a28" stroke-width="0.85" opacity="1"/><line x1="80.3" y1="57.6" x2="96.7" y2="74.3" stroke="#d89a28" stroke-width="0.85" opacity="1"/><line x1="64.3" y1="39.2" x2="45.6" y2="23.8" stroke="#d89a28" stroke-width="0.85" opacity="1"/><line x1="64.3" y1="39.2" x2="70.0" y2="24.2" stroke="#d89a28" stroke-width="0.85" opacity="1"/><line x1="64.3" y1="39.2" x2="73.9" y2="21.6" stroke="#d89a28" stroke-width="0.85" opacity="1"/><line x1="64.3" y1="39.2" x2="46.5" y2="48.6" stroke="#d89a28" stroke-width="0.85" opacity="1"/><line x1="64.3" y1="39.2" x2="43.0" y2="51.2" stroke="#d89a28" stroke-width="0.85" opacity="1"/><line x1="64.3" y1="39.2" x2="67.5" y2="52.1" stroke="#d89a28" stroke-width="0.85" opacity="1"/><line x1="64.3" y1="39.2" x2="74.3" y2="46.5" stroke="#d89a28" stroke-width="0.85" opacity="1"/><line x1="79.0" y1="42.2" x2="70.0" y2="24.2" stroke="#d89a28" stroke-width="0.85" opacity="1"/><line x1="79.0" y1="42.2" x2="73.9" y2="21.6" stroke="#d89a28" stroke-width="0.85" opacity="1"/><line x1="79.0" y1="42.2" x2="96.1" y2="23.8" stroke="#d89a28" stroke-width="0.85" opacity="1"/><line x1="79.0" y1="42.2" x2="67.5" y2="52.1" stroke="#d89a28" stroke-width="0.85" opacity="1"/><line x1="79.0" y1="42.2" x2="74.3" y2="46.5" stroke="#d89a28" stroke-width="0.85" opacity="1"/><line x1="79.0" y1="42.2" x2="97.0" y2="48.8" stroke="#d89a28" stroke-width="0.85" opacity="1"/><line x1="79.0" y1="42.2" x2="93.6" y2="51.7" stroke="#d89a28" stroke-width="0.85" opacity="1"/><line x1="59.8" y1="28.3" x2="45.6" y2="23.8" stroke="#d89a28" stroke-width="0.85" opacity="1"/><line x1="59.8" y1="28.3" x2="70.0" y2="24.2" stroke="#d89a28" stroke-width="0.85" opacity="1"/><line x1="59.8" y1="28.3" x2="73.9" y2="21.6" stroke="#d89a28" stroke-width="0.85" opacity="1"/><line x1="59.8" y1="28.3" x2="46.5" y2="48.6" stroke="#d89a28" stroke-width="0.85" opacity="1"/><line x1="59.8" y1="28.3" x2="43.0" y2="51.2" stroke="#d89a28" stroke-width="0.85" opacity="1"/><line x1="59.8" y1="28.3" x2="67.5" y2="52.1" stroke="#d89a28" stroke-width="0.85" opacity="1"/><line x1="59.8" y1="28.3" x2="74.3" y2="46.5" stroke="#d89a28" stroke-width="0.85" opacity="1"/><line x1="56.6" y1="63.6" x2="46.5" y2="48.6" stroke="#d89a28" stroke-width="0.85" opacity="1"/><line x1="56.6" y1="63.6" x2="43.0" y2="51.2" stroke="#d89a28" stroke-width="0.85" opacity="1"/><line x1="56.6" y1="63.6" x2="67.5" y2="52.1" stroke="#d89a28" stroke-width="0.85" opacity="1"/><line x1="56.6" y1="63.6" x2="74.3" y2="46.5" stroke="#d89a28" stroke-width="0.85" opacity="1"/><line x1="56.6" y1="63.6" x2="46.3" y2="74.3" stroke="#d89a28" stroke-width="0.85" opacity="1"/><line x1="56.6" y1="63.6" x2="70.7" y2="74.8" stroke="#d89a28" stroke-width="0.85" opacity="1"/><line x1="56.6" y1="63.6" x2="74.3" y2="72.2" stroke="#d89a28" stroke-width="0.85" opacity="1"/><polygon points="34.1,17.4 48.8,18.0 52.1,32.8 33.4,36.6" fill="#9a6a90" opacity="1" stroke="none" stroke-width="0.6"/><polygon points="34.1,17.4 52.1,32.8 33.4,36.6" fill="#c49a88" opacity="0.55" stroke="none" stroke-width="0.6"/><circle cx="34.1" cy="17.4" r="1.3" fill="#f0e800"/><circle cx="48.8" cy="18.0" r="1.3" fill="#f0e800"/><circle cx="52.1" cy="32.8" r="1.3" fill="#f0e800"/><circle cx="33.4" cy="36.6" r="1.3" fill="#f0e800"/><polygon points="84.2,17.4 99.6,18.0 102.8,34.1 83.5,36.6" fill="#9a6a90" opacity="1" stroke="none" stroke-width="0.6"/><polygon points="84.2,17.4 102.8,34.1 83.5,36.6" fill="#c49a88" opacity="0.55" stroke="none" stroke-width="0.6"/><circle cx="84.2" cy="17.4" r="1.3" fill="#f0e800"/><circle cx="99.6" cy="18.0" r="1.3" fill="#f0e800"/><circle cx="102.8" cy="34.1" r="1.3" fill="#f0e800"/><circle cx="83.5" cy="36.6" r="1.3" fill="#f0e800"/><polygon points="34.1,67.5 49.5,68.1 52.7,84.2 33.7,86.8" fill="#9a6a90" opacity="1" stroke="none" stroke-width="0.6"/><polygon points="34.1,67.5 52.7,84.2 33.7,86.8" fill="#c49a88" opacity="0.55" stroke="none" stroke-width="0.6"/><circle cx="34.1" cy="67.5" r="1.3" fill="#f0e800"/><circle cx="49.5" cy="68.1" r="1.3" fill="#f0e800"/><circle cx="52.7" cy="84.2" r="1.3" fill="#f0e800"/><circle cx="33.7" cy="86.8" r="1.3" fill="#f0e800"/><polygon points="84.2,68.1 99.6,68.8 103.5,84.2 84.2,87.4" fill="#9a6a90" opacity="1" stroke="none" stroke-width="0.6"/><polygon points="84.2,68.1 103.5,84.2 84.2,87.4" fill="#c49a88" opacity="0.55" stroke="none" stroke-width="0.6"/><circle cx="84.2" cy="68.1" r="1.3" fill="#f0e800"/><circle cx="99.6" cy="68.8" r="1.3" fill="#f0e800"/><circle cx="103.5" cy="84.2" r="1.3" fill="#f0e800"/><circle cx="84.2" cy="87.4" r="1.3" fill="#f0e800"/><circle cx="42.4" cy="26.3" r="1.8" fill="url(#gm)"/><circle cx="92.8" cy="26.7" r="1.8" fill="url(#gm)"/><circle cx="71.0" cy="49.1" r="1.8" fill="url(#gm)"/><circle cx="42.7" cy="76.9" r="1.8" fill="url(#gm)"/><circle cx="93.2" cy="77.1" r="1.8" fill="url(#gm)"/><circle cx="70.0" cy="24.2" r="2.6" fill="url(#gw)"/><circle cx="73.9" cy="21.6" r="2.6" fill="url(#gw)"/><circle cx="46.5" cy="48.6" r="2.6" fill="url(#gw)"/><circle cx="43.0" cy="51.2" r="2.6" fill="url(#gw)"/><circle cx="67.5" cy="52.1" r="2.6" fill="url(#gw)"/><circle cx="74.3" cy="46.5" r="2.6" fill="url(#gw)"/><circle cx="97.0" cy="48.8" r="2.6" fill="url(#gw)"/><circle cx="93.6" cy="51.7" r="2.6" fill="url(#gw)"/><circle cx="70.7" cy="74.8" r="2.6" fill="url(#gw)"/><circle cx="74.3" cy="72.2" r="2.6" fill="url(#gw)"/><circle cx="40.9" cy="12.2" r="3.9" fill="url(#gy)"/><circle cx="55.9" cy="12.9" r="3.9" fill="url(#gy)"/><circle cx="59.8" cy="28.3" r="3.9" fill="url(#gy)"/><circle cx="64.3" cy="39.2" r="3.9" fill="url(#gy)"/><circle cx="79.0" cy="42.2" r="3.9" fill="url(#gy)"/><circle cx="91.5" cy="12.2" r="3.9" fill="url(#gy)"/><circle cx="106.4" cy="12.9" r="3.9" fill="url(#gy)"/><circle cx="109.9" cy="28.5" r="3.9" fill="url(#gy)"/><circle cx="60.7" cy="58.1" r="3.9" fill="url(#gy)"/><circle cx="80.3" cy="57.6" r="3.9" fill="url(#gy)"/><circle cx="41.4" cy="62.7" r="3.9" fill="url(#gy)"/><circle cx="56.6" cy="63.6" r="3.9" fill="url(#gy)"/><circle cx="59.8" cy="78.7" r="3.9" fill="url(#gy)"/><circle cx="91.9" cy="63.0" r="3.9" fill="url(#gy)"/><circle cx="106.7" cy="63.6" r="3.9" fill="url(#gy)"/><circle cx="110.5" cy="79.0" r="3.9" fill="url(#gy)"/><rect x="133.5" y="84.5" width="10" height="15" fill="#202020" stroke="#505050" stroke-width="0.5"/><circle cx="137.0" cy="87.5" r="1.8" fill="#e028d8"/><circle cx="137.0" cy="92.0" r="1.8" fill="#f0e800"/><circle cx="137.0" cy="96.5" r="1.8" fill="#e8e8e8"/><line x1="139.5" y1="87.5" x2="142.5" y2="87.5" stroke="#c0c0c0" stroke-width="0.6" opacity="1"/><line x1="139.5" y1="92.0" x2="142.5" y2="92.0" stroke="#c0c0c0" stroke-width="0.6" opacity="1"/><line x1="139.5" y1="96.5" x2="142.5" y2="96.5" stroke="#c0c0c0" stroke-width="0.6" opacity="1"/></svg>
<div class="t" style="left:560px;top:375.05px;font-size:11px;color:#000;font-weight:bold;letter-spacing:0.55px;">Picture 6</div>
<div class="t" style="left:560px;top:388.05px;font-size:11px;color:#000;letter-spacing:-0.25px;-webkit-text-stroke:0.2px #000;">4 atom(s) in parameter list</div>
<div class="t" style="left:560px;top:401.05px;font-size:11px;color:#000;letter-spacing:-0.25px;-webkit-text-stroke:0.2px #000;">0 molecular, 1 polymeric unit(s)</div>
<div class="t" style="left:560px;top:414.05px;font-size:11px;color:#000;letter-spacing:-0.25px;-webkit-text-stroke:0.2px #000;">59 created atom(s)</div>
<div class="t" style="left:560px;top:427.05px;font-size:11px;color:#000;letter-spacing:-0.25px;-webkit-text-stroke:0.2px #000;">&nbsp;=&nbsp;9*P+5&nbsp;36*S-2&nbsp;14*Na+1</div>
<div class="t" style="left:560px;top:440.05px;font-size:11px;color:#000;letter-spacing:-0.25px;-webkit-text-stroke:0.2px #000;">64 created bond(s) (0 contacts, 0</div>
<div class="t" style="left:560px;top:453.05px;font-size:11px;color:#000;letter-spacing:-0.25px;-webkit-text-stroke:0.2px #000;">H-bonds)</div>
<div class="t" style="left:560px;top:466.05px;font-size:11px;color:#000;letter-spacing:-0.25px;-webkit-text-stroke:0.2px #000;">0 created molecule(s) (0 frag.)</div>
<div class="t" style="left:560px;top:479.05px;font-size:11px;color:#000;letter-spacing:-0.25px;-webkit-text-stroke:0.2px #000;">12 cell edges</div>
<div class="t" style="left:560px;top:492.05px;font-size:11px;color:#000;letter-spacing:-0.25px;-webkit-text-stroke:0.2px #000;">4 polyhedra (16 faces)</div>
<div class="t" style="left:560px;top:505.05px;font-size:11px;color:#000;letter-spacing:-0.25px;-webkit-text-stroke:0.2px #000;">0 atom, 0 bond label(s)</div>
<svg style="left:740px;top:369px" width="161" height="147"><path d="M0.5 146.5V0.5H80.5V6.5H160.5V146.5Z" fill="url(#cg)" stroke="#a0a0a0"/></svg>
<svg style="left:748px;top:395px" width="145" height="100" viewBox="0 0 145 100"><rect width="145" height="100" fill="#000"/><line x1="12.3" y1="2.0" x2="12.3" y2="13.0" stroke="#b0b0b0" stroke-width="0.5" opacity="1"/><line x1="12.3" y1="13.0" x2="21.0" y2="12.8" stroke="#b0b0b0" stroke-width="0.5" opacity="1"/><circle cx="12.3" cy="6.0" r="0.7" fill="#e0e0e0"/><circle cx="16.5" cy="12.8" r="0.7" fill="#e0e0e0"/><rect x="42.4" y="26.7" width="50.8" height="50.4" fill="none" stroke="#b8b8b8" stroke-width="0.9"/><rect x="49.5" y="21.2" width="50.8" height="50.8" fill="none" stroke="#b8b8b8" stroke-width="0.9"/><line x1="42.4" y1="26.7" x2="49.5" y2="21.2" stroke="#b8b8b8" stroke-width="0.9" opacity="1"/><line x1="93.2" y1="26.7" x2="100.3" y2="21.2" stroke="#b8b8b8" stroke-width="0.9" opacity="1"/><line x1="42.4" y1="77.1" x2="49.5" y2="72.0" stroke="#b8b8b8" stroke-width="0.9" opacity="1"/><line x1="93.2" y1="77.1" x2="100.3" y2="72.0" stroke="#b8b8b8" stroke-width="0.9" opacity="1"/><line x1="40.9" y1="12.2" x2="36.9" y2="20.2" stroke="#d08a18" stroke-width="0.9" opacity="1"/><line x1="40.9" y1="12.2" x2="36.0" y2="5.4" stroke="#d08a18" stroke-width="0.9" opacity="1"/><line x1="40.9" y1="12.2" x2="31.0" y2="9.9" stroke="#d08a18" stroke-width="0.9" opacity="1"/><line x1="55.9" y1="12.9" x2="66.2" y2="16.8" stroke="#d08a18" stroke-width="0.9" opacity="1"/><line x1="55.9" y1="12.9" x2="66.2" y2="15.4" stroke="#d08a18" stroke-width="0.9" opacity="1"/><line x1="55.9" y1="12.9" x2="63.6" y2="16.5" stroke="#d08a18" stroke-width="0.9" opacity="1"/><line x1="59.8" y1="28.3" x2="48.3" y2="34.2" stroke="#d08a18" stroke-width="0.9" opacity="1"/><line x1="59.8" y1="28.3" x2="66.5" y2="34.9" stroke="#d08a18" stroke-width="0.9" opacity="1"/><line x1="59.8" y1="28.3" x2="50.3" y2="18.5" stroke="#d08a18" stroke-width="0.9" opacity="1"/><line x1="64.3" y1="39.2" x2="55.1" y2="34.4" stroke="#d08a18" stroke-width="0.9" opacity="1"/><line x1="64.3" y1="39.2" x2="72.5" y2="37.9" stroke="#d08a18" stroke-width="0.9" opacity="1"/><line x1="64.3" y1="39.2" x2="70.4" y2="31.6" stroke="#d08a18" stroke-width="0.9" opacity="1"/><line x1="79.0" y1="42.2" x2="84.4" y2="49.1" stroke="#d08a18" stroke-width="0.9" opacity="1"/><line x1="79.0" y1="42.2" x2="74.4" y2="54.2" stroke="#d08a18" stroke-width="0.9" opacity="1"/><line x1="79.0" y1="42.2" x2="83.9" y2="52.6" stroke="#d08a18" stroke-width="0.9" opacity="1"/><line x1="91.5" y1="12.2" x2="84.9" y2="4.4" stroke="#d08a18" stroke-width="0.9" opacity="1"/><line x1="91.5" y1="12.2" x2="83.5" y2="9.7" stroke="#d08a18" stroke-width="0.9" opacity="1"/><line x1="91.5" y1="12.2" x2="100.1" y2="15.6" stroke="#d08a18" stroke-width="0.9" opacity="1"/><line x1="106.4" y1="12.9" x2="101.9" y2="3.3" stroke="#d08a18" stroke-width="0.9" opacity="1"/><line x1="106.4" y1="12.9" x2="101.9" y2="23.5" stroke="#d08a18" stroke-width="0.9" opacity="1"/><line x1="106.4" y1="12.9" x2="97.0" y2="15.8" stroke="#d08a18" stroke-width="0.9" opacity="1"/><line x1="109.9" y1="28.5" x2="113.2" y2="16.8" stroke="#d08a18" stroke-width="0.9" opacity="1"/><line x1="109.9" y1="28.5" x2="110.3" y2="39.9" stroke="#d08a18" stroke-width="0.9" opacity="1"/><line x1="109.9" y1="28.5" x2="96.8" y2="26.4" stroke="#d08a18" stroke-width="0.9" opacity="1"/><line x1="60.7" y1="58.1" x2="59.4" y2="48.5" stroke="#d08a18" stroke-width="0.9" opacity="1"/><line x1="60.7" y1="58.1" x2="69.3" y2="57.0" stroke="#d08a18" stroke-width="0.9" opacity="1"/><line x1="60.7" y1="58.1" x2="49.8" y2="64.3" stroke="#d08a18" stroke-width="0.9" opacity="1"/><line x1="80.3" y1="57.6" x2="86.6" y2="66.5" stroke="#d08a18" stroke-width="0.9" opacity="1"/><line x1="80.3" y1="57.6" x2="91.9" y2="60.5" stroke="#d08a18" stroke-width="0.9" opacity="1"/><line x1="80.3" y1="57.6" x2="81.3" y2="46.2" stroke="#d08a18" stroke-width="0.9" opacity="1"/><line x1="41.4" y1="62.7" x2="48.4" y2="55.7" stroke="#d08a18" stroke-width="0.9" opacity="1"/><line x1="41.4" y1="62.7" x2="37.5" y2="51.8" stroke="#d08a18" stroke-width="0.9" opacity="1"/><line x1="41.4" y1="62.7" x2="32.0" y2="57.6" stroke="#d08a18" stroke-width="0.9" opacity="1"/><line x1="56.6" y1="63.6" x2="63.9" y2="52.0" stroke="#d08a18" stroke-width="0.9" opacity="1"/><line x1="56.6" y1="63.6" x2="44.8" y2="65.6" stroke="#d08a18" stroke-width="0.9" opacity="1"/><line x1="56.6" y1="63.6" x2="67.9" y2="68.1" stroke="#d08a18" stroke-width="0.9" opacity="1"/><line x1="59.8" y1="78.7" x2="51.4" y2="67.6" stroke="#d08a18" stroke-width="0.9" opacity="1"/><line x1="59.8" y1="78.7" x2="64.0" y2="70.0" stroke="#d08a18" stroke-width="0.9" opacity="1"/><line x1="59.8" y1="78.7" x2="50.8" y2="86.6" stroke="#d08a18" stroke-width="0.9" opacity="1"/><line x1="91.9" y1="63.0" x2="102.6" y2="64.5" stroke="#d08a18" stroke-width="0.9" opacity="1"/><line x1="91.9" y1="63.0" x2="96.2" y2="70.6" stroke="#d08a18" stroke-width="0.9" opacity="1"/><line x1="91.9" y1="63.0" x2="103.7" y2="67.6" stroke="#d08a18" stroke-width="0.9" opacity="1"/><line x1="106.7" y1="63.6" x2="113.2" y2="70.5" stroke="#d08a18" stroke-width="0.9" opacity="1"/><line x1="106.7" y1="63.6" x2="96.5" y2="72.0" stroke="#d08a18" stroke-width="0.9" opacity="1"/><line x1="106.7" y1="63.6" x2="116.1" y2="68.8" stroke="#d08a18" stroke-width="0.9" opacity="1"/><line x1="110.5" y1="79.0" x2="97.8" y2="75.0" stroke="#d08a18" stroke-width="0.9" opacity="1"/><line x1="110.5" y1="79.0" x2="116.0" y2="67.0" stroke="#d08a18" stroke-width="0.9" opacity="1"/><line x1="110.5" y1="79.0" x2="108.6" y2="89.3" stroke="#d08a18" stroke-width="0.9" opacity="1"/><line x1="64.3" y1="39.2" x2="71.0" y2="49.1" stroke="#d89a28" stroke-width="0.85" opacity="1"/><line x1="79.0" y1="42.2" x2="71.0" y2="49.1" stroke="#d89a28" stroke-width="0.85" opacity="1"/><line x1="60.7" y1="58.1" x2="71.0" y2="49.1" stroke="#d89a28" stroke-width="0.85" opacity="1"/><line x1="80.3" y1="57.6" x2="71.0" y2="49.1" stroke="#d89a28" stroke-width="0.85" opacity="1"/><line x1="60.7" y1="58.1" x2="46.5" y2="48.6" stroke="#d89a28" stroke-width="0.85" opacity="1"/><line x1="60.7" y1="58.1" x2="43.0" y2="51.2" stroke="#d89a28" stroke-width="0.85" opacity="1"/><line x1="60.7" y1="58.1" x2="67.5" y2="52.1" stroke="#d89a28" stroke-width="0.85" opacity="1"/><line x1="60.7" y1="58.1" x2="74.3" y2="46.5" stroke="#d89a28" stroke-width="0.85" opacity="1"/><line x1="60.7" y1="58.1" x2="46.3" y2="74.3" stroke="#d89a28" stroke-width="0.85" opacity="1"/><line x1="60.7" y1="58.1" x2="70.7" y2="74.8" stroke="#d89a28" stroke-width="0.85" opacity="1"/><line x1="60.7" y1="58.1" x2="74.3" y2="72.2" stroke="#d89a28" stroke-width="0.85" opacity="1"/><line x1="80.3" y1="57.6" x2="67.5" y2="52.1" stroke="#d89a28" stroke-width="0.85" opacity="1"/><line x1="80.3" y1="57.6" x2="74.3" y2="46.5" stroke="#d89a28" stroke-width="0.85" opacity="1"/><line x1="80.3" y1="57.6" x2="97.0" y2="48.8" stroke="#d89a28" stroke-width="0.85" opacity="1"/><line x1="80.3" y1="57.6" x2="93.6" y2="51.7" stroke="#d89a28" stroke-width="0.85" opacity="1"/><line x1="80.3" y1="57.6" x2="70.7" y2="74.8" stroke="#d89a28" stroke-width="0.85" opacity="1"/><line x1="80.3" y1="57.6" x2="74.3" y2="72.2" stroke="#d89a28" stroke-width="0.85" opacity="1"/><line x1="80.3" y1="57.6" x2="96.7" y2="74.3" stroke="#d89a28" stroke-width="0.85" opacity="1"/><line x1="64.3" y1="39.2" x2="45.6" y2="23.8" stroke="#d89a28" stroke-width="0.85" opacity="1"/><line x1="64.3" y1="39.2" x2="70.0" y2="24.2" stroke="#d89a28" stroke-width="0.85" opacity="1"/><line x1="64.3" y1="39.2" x2="73.9" y2="21.6" stroke="#d89a28" stroke-width="0.85" opacity="1"/><line x1="64.3" y1="39.2" x2="46.5" y2="48.6" stroke="#d89a28" stroke-width="0.85" opacity="1"/><line x1="64.3" y1="39.2" x2="43.0" y2="51.2" stroke="#d89a28" stroke-width="0.85" opacity="1"/><line x1="64.3" y1="39.2" x2="67.5" y2="52.1" stroke="#d89a28" stroke-width="0.85" opacity="1"/><line x1="64.3" y1="39.2" x2="74.3" y2="46.5" stroke="#d89a28" stroke-width="0.85" opacity="1"/><line x1="79.0" y1="42.2" x2="70.0" y2="24.2" stroke="#d89a28" stroke-width="0.85" opacity="1"/><line x1="79.0" y1="42.2" x2="73.9" y2="21.6" stroke="#d89a28" stroke-width="0.85" opacity="1"/><line x1="79.0" y1="42.2" x2="96.1" y2="23.8" stroke="#d89a28" stroke-width="0.85" opacity="1"/><line x1="79.0" y1="42.2" x2="67.5" y2="52.1" stroke="#d89a28" stroke-width="0.85" opacity="1"/><line x1="79.0" y1="42.2" x2="74.3" y2="46.5" stroke="#d89a28" stroke-width="0.85" opacity="1"/><line x1="79.0" y1="42.2" x2="97.0" y2="48.8" stroke="#d89a28" stroke-width="0.85" opacity="1"/><line x1="79.0" y1="42.2" x2="93.6" y2="51.7" stroke="#d89a28" stroke-width="0.85" opacity="1"/><line x1="59.8" y1="28.3" x2="45.6" y2="23.8" stroke="#d89a28" stroke-width="0.85" opacity="1"/><line x1="59.8" y1="28.3" x2="70.0" y2="24.2" stroke="#d89a28" stroke-width="0.85" opacity="1"/><line x1="59.8" y1="28.3" x2="73.9" y2="21.6" stroke="#d89a28" stroke-width="0.85" opacity="1"/><line x1="59.8" y1="28.3" x2="46.5" y2="48.6" stroke="#d89a28" stroke-width="0.85" opacity="1"/><line x1="59.8" y1="28.3" x2="43.0" y2="51.2" stroke="#d89a28" stroke-width="0.85" opacity="1"/><line x1="59.8" y1="28.3" x2="67.5" y2="52.1" stroke="#d89a28" stroke-width="0.85" opacity="1"/><line x1="59.8" y1="28.3" x2="74.3" y2="46.5" stroke="#d89a28" stroke-width="0.85" opacity="1"/><line x1="56.6" y1="63.6" x2="46.5" y2="48.6" stroke="#d89a28" stroke-width="0.85" opacity="1"/><line x1="56.6" y1="63.6" x2="43.0" y2="51.2" stroke="#d89a28" stroke-width="0.85" opacity="1"/><line x1="56.6" y1="63.6" x2="67.5" y2="52.1" stroke="#d89a28" stroke-width="0.85" opacity="1"/><line x1="56.6" y1="63.6" x2="74.3" y2="46.5" stroke="#d89a28" stroke-width="0.85" opacity="1"/><line x1="56.6" y1="63.6" x2="46.3" y2="74.3" stroke="#d89a28" stroke-width="0.85" opacity="1"/><line x1="56.6" y1="63.6" x2="70.7" y2="74.8" stroke="#d89a28" stroke-width="0.85" opacity="1"/><line x1="56.6" y1="63.6" x2="74.3" y2="72.2" stroke="#d89a28" stroke-width="0.85" opacity="1"/><polygon points="34.1,17.4 48.8,18.0 52.1,32.8 33.4,36.6" fill="#9a6a90" opacity="1" stroke="none" stroke-width="0.6"/><polygon points="34.1,17.4 52.1,32.8 33.4,36.6" fill="#c49a88" opacity="0.55" stroke="none" stroke-width="0.6"/><circle cx="34.1" cy="17.4" r="1.3" fill="#f0e800"/><circle cx="48.8" cy="18.0" r="1.3" fill="#f0e800"/><circle cx="52.1" cy="32.8" r="1.3" fill="#f0e800"/><circle cx="33.4" cy="36.6" r="1.3" fill="#f0e800"/><polygon points="84.2,17.4 99.6,18.0 102.8,34.1 83.5,36.6" fill="#9a6a90" opacity="1" stroke="none" stroke-width="0.6"/><polygon points="84.2,17.4 102.8,34.1 83.5,36.6" fill="#c49a88" opacity="0.55" stroke="none" stroke-width="0.6"/><circle cx="84.2" cy="17.4" r="1.3" fill="#f0e800"/><circle cx="99.6" cy="18.0" r="1.3" fill="#f0e800"/><circle cx="102.8" cy="34.1" r="1.3" fill="#f0e800"/><circle cx="83.5" cy="36.6" r="1.3" fill="#f0e800"/><polygon points="34.1,67.5 49.5,68.1 52.7,84.2 33.7,86.8" fill="#9a6a90" opacity="1" stroke="none" stroke-width="0.6"/><polygon points="34.1,67.5 52.7,84.2 33.7,86.8" fill="#c49a88" opacity="0.55" stroke="none" stroke-width="0.6"/><circle cx="34.1" cy="67.5" r="1.3" fill="#f0e800"/><circle cx="49.5" cy="68.1" r="1.3" fill="#f0e800"/><circle cx="52.7" cy="84.2" r="1.3" fill="#f0e800"/><circle cx="33.7" cy="86.8" r="1.3" fill="#f0e800"/><polygon points="84.2,68.1 99.6,68.8 103.5,84.2 84.2,87.4" fill="#9a6a90" opacity="1" stroke="none" stroke-width="0.6"/><polygon points="84.2,68.1 103.5,84.2 84.2,87.4" fill="#c49a88" opacity="0.55" stroke="none" stroke-width="0.6"/><circle cx="84.2" cy="68.1" r="1.3" fill="#f0e800"/><circle cx="99.6" cy="68.8" r="1.3" fill="#f0e800"/><circle cx="103.5" cy="84.2" r="1.3" fill="#f0e800"/><circle cx="84.2" cy="87.4" r="1.3" fill="#f0e800"/><circle cx="42.4" cy="26.3" r="1.8" fill="url(#gm)"/><circle cx="92.8" cy="26.7" r="1.8" fill="url(#gm)"/><circle cx="71.0" cy="49.1" r="1.8" fill="url(#gm)"/><circle cx="42.7" cy="76.9" r="1.8" fill="url(#gm)"/><circle cx="93.2" cy="77.1" r="1.8" fill="url(#gm)"/><circle cx="70.0" cy="24.2" r="2.6" fill="url(#gw)"/><circle cx="73.9" cy="21.6" r="2.6" fill="url(#gw)"/><circle cx="46.5" cy="48.6" r="2.6" fill="url(#gw)"/><circle cx="43.0" cy="51.2" r="2.6" fill="url(#gw)"/><circle cx="67.5" cy="52.1" r="2.6" fill="url(#gw)"/><circle cx="74.3" cy="46.5" r="2.6" fill="url(#gw)"/><circle cx="97.0" cy="48.8" r="2.6" fill="url(#gw)"/><circle cx="93.6" cy="51.7" r="2.6" fill="url(#gw)"/><circle cx="70.7" cy="74.8" r="2.6" fill="url(#gw)"/><circle cx="74.3" cy="72.2" r="2.6" fill="url(#gw)"/><circle cx="40.9" cy="12.2" r="3.9" fill="url(#gy)"/><circle cx="55.9" cy="12.9" r="3.9" fill="url(#gy)"/><circle cx="59.8" cy="28.3" r="3.9" fill="url(#gy)"/><circle cx="64.3" cy="39.2" r="3.9" fill="url(#gy)"/><circle cx="79.0" cy="42.2" r="3.9" fill="url(#gy)"/><circle cx="91.5" cy="12.2" r="3.9" fill="url(#gy)"/><circle cx="106.4" cy="12.9" r="3.9" fill="url(#gy)"/><circle cx="109.9" cy="28.5" r="3.9" fill="url(#gy)"/><circle cx="60.7" cy="58.1" r="3.9" fill="url(#gy)"/><circle cx="80.3" cy="57.6" r="3.9" fill="url(#gy)"/><circle cx="41.4" cy="62.7" r="3.9" fill="url(#gy)"/><circle cx="56.6" cy="63.6" r="3.9" fill="url(#gy)"/><circle cx="59.8" cy="78.7" r="3.9" fill="url(#gy)"/><circle cx="91.9" cy="63.0" r="3.9" fill="url(#gy)"/><circle cx="106.7" cy="63.6" r="3.9" fill="url(#gy)"/><circle cx="110.5" cy="79.0" r="3.9" fill="url(#gy)"/><rect x="133.5" y="84.5" width="10" height="15" fill="#202020" stroke="#505050" stroke-width="0.5"/><circle cx="137.0" cy="87.5" r="1.8" fill="#e028d8"/><circle cx="137.0" cy="92.0" r="1.8" fill="#f0e800"/><circle cx="137.0" cy="96.5" r="1.8" fill="#e8e8e8"/><line x1="139.5" y1="87.5" x2="142.5" y2="87.5" stroke="#c0c0c0" stroke-width="0.6" opacity="1"/><line x1="139.5" y1="92.0" x2="142.5" y2="92.0" stroke="#c0c0c0" stroke-width="0.6" opacity="1"/><line x1="139.5" y1="96.5" x2="142.5" y2="96.5" stroke="#c0c0c0" stroke-width="0.6" opacity="1"/></svg>
<div class="t" style="left:908px;top:375.05px;font-size:11px;color:#000;font-weight:bold;letter-spacing:0.55px;">Picture 7</div>
<div class="t" style="left:908px;top:388.05px;font-size:11px;color:#000;letter-spacing:-0.25px;-webkit-text-stroke:0.2px #000;">4 atom(s) in parameter list</div>
<div class="t" style="left:908px;top:401.05px;font-size:11px;color:#000;letter-spacing:-0.25px;-webkit-text-stroke:0.2px #000;">0 molecular, 1 polymeric unit(s)</div>
<div class="t" style="left:908px;top:414.05px;font-size:11px;color:#000;letter-spacing:-0.25px;-webkit-text-stroke:0.2px #000;">81 created atom(s)</div>
<div class="t" style="left:908px;top:427.05px;font-size:11px;color:#000;letter-spacing:-0.25px;-webkit-text-stroke:0.2px #000;">&nbsp;=&nbsp;9*P+5&nbsp;36*S-2&nbsp;36*Na+1</div>
<div class="t" style="left:908px;top:440.05px;font-size:11px;color:#000;letter-spacing:-0.25px;-webkit-text-stroke:0.2px #000;">109 created bond(s) (0 contacts,</div>
<div class="t" style="left:908px;top:453.05px;font-size:11px;color:#000;letter-spacing:-0.25px;-webkit-text-stroke:0.2px #000;">0 H-bonds)</div>
<div class="t" style="left:908px;top:466.05px;font-size:11px;color:#000;letter-spacing:-0.25px;-webkit-text-stroke:0.2px #000;">0 created molecule(s) (0 frag.)</div>
<div class="t" style="left:908px;top:479.05px;font-size:11px;color:#000;letter-spacing:-0.25px;-webkit-text-stroke:0.2px #000;">12 cell edges</div>
<div class="t" style="left:908px;top:492.05px;font-size:11px;color:#000;letter-spacing:-0.25px;-webkit-text-stroke:0.2px #000;">4 polyhedra (16 faces)</div>
<div class="t" style="left:908px;top:505.05px;font-size:11px;color:#000;letter-spacing:-0.25px;-webkit-text-stroke:0.2px #000;">0 atom, 0 bond label(s)</div>
<div class="b" style="left:1088px;top:375px;width:161px;height:141px;background:linear-gradient(180deg,#efefef 0,#e6e6e6 55%,#d4d4d4 100%);border:1px solid #a0a0a0;box-sizing:border-box;"></div>
<svg style="left:1096px;top:395px" width="145" height="100" viewBox="0 0 145 100"><rect width="145" height="100" fill="#000"/><line x1="12.3" y1="2.0" x2="12.3" y2="13.0" stroke="#b0b0b0" stroke-width="0.5" opacity="1"/><line x1="12.3" y1="13.0" x2="21.0" y2="12.8" stroke="#b0b0b0" stroke-width="0.5" opacity="1"/><circle cx="12.3" cy="6.0" r="0.7" fill="#e0e0e0"/><circle cx="16.5" cy="12.8" r="0.7" fill="#e0e0e0"/><rect x="31.5" y="17.4" width="71.3" height="71.9" fill="none" stroke="#b8b8b8" stroke-width="0.9"/><rect x="41.4" y="10.3" width="71.7" height="72.0" fill="none" stroke="#b8b8b8" stroke-width="0.9"/><line x1="31.5" y1="17.4" x2="41.4" y2="10.3" stroke="#b8b8b8" stroke-width="0.9" opacity="1"/><line x1="102.8" y1="17.4" x2="113.1" y2="10.3" stroke="#b8b8b8" stroke-width="0.9" opacity="1"/><line x1="31.5" y1="89.3" x2="41.4" y2="82.3" stroke="#b8b8b8" stroke-width="0.9" opacity="1"/><line x1="102.8" y1="89.3" x2="113.1" y2="82.3" stroke="#b8b8b8" stroke-width="0.9" opacity="1"/><line x1="62.3" y1="35.7" x2="75.8" y2="10.9" stroke="#d89a28" stroke-width="0.85" opacity="1"/><line x1="62.3" y1="35.7" x2="71.0" y2="14.8" stroke="#d89a28" stroke-width="0.85" opacity="1"/><line x1="62.3" y1="35.7" x2="37.3" y2="48.8" stroke="#d89a28" stroke-width="0.85" opacity="1"/><line x1="62.3" y1="35.7" x2="66.8" y2="53.3" stroke="#d89a28" stroke-width="0.85" opacity="1"/><line x1="83.5" y1="39.8" x2="75.8" y2="10.9" stroke="#d89a28" stroke-width="0.85" opacity="1"/><line x1="83.5" y1="39.8" x2="71.0" y2="14.8" stroke="#d89a28" stroke-width="0.85" opacity="1"/><line x1="83.5" y1="39.8" x2="66.8" y2="53.3" stroke="#d89a28" stroke-width="0.85" opacity="1"/><line x1="83.5" y1="39.8" x2="108.2" y2="49.5" stroke="#d89a28" stroke-width="0.85" opacity="1"/><line x1="83.5" y1="39.8" x2="103.5" y2="53.0" stroke="#d89a28" stroke-width="0.85" opacity="1"/><line x1="84.8" y1="62.0" x2="66.8" y2="53.3" stroke="#d89a28" stroke-width="0.85" opacity="1"/><line x1="84.8" y1="62.0" x2="108.2" y2="49.5" stroke="#d89a28" stroke-width="0.85" opacity="1"/><line x1="84.8" y1="62.0" x2="103.5" y2="53.0" stroke="#d89a28" stroke-width="0.85" opacity="1"/><line x1="84.8" y1="62.0" x2="72.0" y2="85.9" stroke="#d89a28" stroke-width="0.85" opacity="1"/><line x1="84.8" y1="62.0" x2="76.9" y2="82.3" stroke="#d89a28" stroke-width="0.85" opacity="1"/><line x1="57.6" y1="62.3" x2="37.3" y2="48.8" stroke="#d89a28" stroke-width="0.85" opacity="1"/><line x1="57.6" y1="62.3" x2="32.4" y2="52.7" stroke="#d89a28" stroke-width="0.85" opacity="1"/><line x1="57.6" y1="62.3" x2="66.8" y2="53.3" stroke="#d89a28" stroke-width="0.85" opacity="1"/><line x1="57.6" y1="62.3" x2="36.6" y2="85.1" stroke="#d89a28" stroke-width="0.85" opacity="1"/><line x1="57.6" y1="62.3" x2="72.0" y2="85.9" stroke="#d89a28" stroke-width="0.85" opacity="1"/><line x1="57.6" y1="62.3" x2="76.9" y2="82.3" stroke="#d89a28" stroke-width="0.85" opacity="1"/><line x1="46.0" y1="27.6" x2="36.6" y2="13.5" stroke="#d89a28" stroke-width="0.85" opacity="1"/><line x1="46.0" y1="27.6" x2="71.0" y2="14.8" stroke="#d89a28" stroke-width="0.85" opacity="1"/><line x1="46.0" y1="27.6" x2="37.3" y2="48.8" stroke="#d89a28" stroke-width="0.85" opacity="1"/><line x1="46.0" y1="27.6" x2="32.4" y2="52.7" stroke="#d89a28" stroke-width="0.85" opacity="1"/><line x1="99.2" y1="25.1" x2="75.8" y2="10.9" stroke="#d89a28" stroke-width="0.85" opacity="1"/><line x1="99.2" y1="25.1" x2="107.3" y2="14.4" stroke="#d89a28" stroke-width="0.85" opacity="1"/><line x1="99.2" y1="25.1" x2="108.2" y2="49.5" stroke="#d89a28" stroke-width="0.85" opacity="1"/><line x1="99.2" y1="25.1" x2="103.5" y2="53.0" stroke="#d89a28" stroke-width="0.85" opacity="1"/><line x1="51.2" y1="69.7" x2="37.3" y2="48.8" stroke="#d89a28" stroke-width="0.85" opacity="1"/><line x1="51.2" y1="69.7" x2="32.4" y2="52.7" stroke="#d89a28" stroke-width="0.85" opacity="1"/><line x1="51.2" y1="69.7" x2="66.8" y2="53.3" stroke="#d89a28" stroke-width="0.85" opacity="1"/><line x1="51.2" y1="69.7" x2="36.6" y2="85.1" stroke="#d89a28" stroke-width="0.85" opacity="1"/><line x1="51.2" y1="69.7" x2="72.0" y2="85.9" stroke="#d89a28" stroke-width="0.85" opacity="1"/><line x1="51.2" y1="69.7" x2="76.9" y2="82.3" stroke="#d89a28" stroke-width="0.85" opacity="1"/><line x1="91.3" y1="76.5" x2="103.5" y2="53.0" stroke="#d89a28" stroke-width="0.85" opacity="1"/><line x1="91.3" y1="76.5" x2="72.0" y2="85.9" stroke="#d89a28" stroke-width="0.85" opacity="1"/><line x1="91.3" y1="76.5" x2="76.9" y2="82.3" stroke="#d89a28" stroke-width="0.85" opacity="1"/><line x1="91.3" y1="76.5" x2="107.7" y2="85.5" stroke="#d89a28" stroke-width="0.85" opacity="1"/><line x1="99.2" y1="25.1" x2="102.2" y2="18.3" stroke="#d89a28" stroke-width="0.85" opacity="1"/><polygon points="62.3,35.7 83.5,39.8 84.8,62.0 57.6,62.3" fill="#2a98a4" opacity="1" stroke="none" stroke-width="0.6"/><polygon points="62.3,35.7 83.5,39.8 84.8,62.0" fill="#35b0bc" opacity="0.6" stroke="none" stroke-width="0.6"/><line x1="83.5" y1="39.8" x2="57.6" y2="62.3" stroke="#e8c040" stroke-width="0.7" opacity="1"/><circle cx="41.1" cy="10.3" r="2.1" fill="url(#gm)"/><circle cx="31.5" cy="17.7" r="2.1" fill="url(#gm)"/><circle cx="112.1" cy="10.9" r="2.1" fill="url(#gm)"/><circle cx="102.2" cy="18.3" r="2.1" fill="url(#gm)"/><circle cx="112.9" cy="81.6" r="2.1" fill="url(#gm)"/><circle cx="102.6" cy="88.9" r="2.1" fill="url(#gm)"/><circle cx="32.1" cy="88.7" r="2.1" fill="url(#gm)"/><circle cx="41.8" cy="81.6" r="2.1" fill="url(#gm)"/><circle cx="36.6" cy="13.5" r="2.9" fill="url(#gw)"/><circle cx="75.8" cy="10.9" r="2.9" fill="url(#gw)"/><circle cx="71.0" cy="14.8" r="2.9" fill="url(#gw)"/><circle cx="107.3" cy="14.4" r="2.9" fill="url(#gw)"/><circle cx="37.3" cy="48.8" r="2.9" fill="url(#gw)"/><circle cx="32.4" cy="52.7" r="2.9" fill="url(#gw)"/><circle cx="66.8" cy="53.3" r="2.9" fill="url(#gw)"/><circle cx="108.2" cy="49.5" r="2.9" fill="url(#gw)"/><circle cx="103.5" cy="53.0" r="2.9" fill="url(#gw)"/><circle cx="36.6" cy="85.1" r="2.9" fill="url(#gw)"/><circle cx="72.0" cy="85.9" r="2.9" fill="url(#gw)"/><circle cx="76.9" cy="82.3" r="2.9" fill="url(#gw)"/><circle cx="107.7" cy="85.5" r="2.9" fill="url(#gw)"/><circle cx="46.0" cy="27.6" r="5.2" fill="url(#gy)"/><circle cx="99.2" cy="25.1" r="5.2" fill="url(#gy)"/><circle cx="51.2" cy="69.7" r="5.2" fill="url(#gy)"/><circle cx="91.3" cy="76.5" r="5.2" fill="url(#gy)"/><circle cx="62.3" cy="35.7" r="1.3" fill="#f0e800"/><circle cx="83.5" cy="39.8" r="1.3" fill="#f0e800"/><circle cx="84.8" cy="62.0" r="1.3" fill="#f0e800"/><circle cx="57.6" cy="62.3" r="1.3" fill="#f0e800"/><rect x="133.5" y="84.5" width="10" height="15" fill="#202020" stroke="#505050" stroke-width="0.5"/><circle cx="137.0" cy="87.5" r="1.8" fill="#e028d8"/><circle cx="137.0" cy="92.0" r="1.8" fill="#f0e800"/><circle cx="137.0" cy="96.5" r="1.8" fill="#e8e8e8"/><line x1="139.5" y1="87.5" x2="142.5" y2="87.5" stroke="#c0c0c0" stroke-width="0.6" opacity="1"/><line x1="139.5" y1="92.0" x2="142.5" y2="92.0" stroke="#c0c0c0" stroke-width="0.6" opacity="1"/><line x1="139.5" y1="96.5" x2="142.5" y2="96.5" stroke="#c0c0c0" stroke-width="0.6" opacity="1"/></svg>
<div class="t" style="left:1256px;top:375.05px;font-size:11px;color:#000;font-weight:bold;letter-spacing:0.55px;">Picture 8</div>
<div class="t" style="left:1256px;top:388.05px;font-size:11px;color:#000;letter-spacing:-0.25px;-webkit-text-stroke:0.2px #000;">4 atom(s) in parameter list</div>
<div class="t" style="left:1256px;top:401.05px;font-size:11px;color:#000;letter-spacing:-0.25px;-webkit-text-stroke:0.2px #000;">0 molecular, 1 polymeric unit(s)</div>
<div class="t" style="left:1256px;top:414.05px;font-size:11px;color:#000;letter-spacing:-0.25px;-webkit-text-stroke:0.2px #000;">31 created atom(s)</div>
<div class="t" style="left:1256px;top:427.05px;font-size:11px;color:#000;letter-spacing:-0.25px;-webkit-text-stroke:0.2px #000;">&nbsp;=&nbsp;9*P+5&nbsp;8*S-2&nbsp;14*Na+1</div>
<div class="t" style="left:1256px;top:440.05px;font-size:11px;color:#000;letter-spacing:-0.25px;-webkit-text-stroke:0.2px #000;">36 created bond(s) (0 contacts, 0</div>
<div class="t" style="left:1256px;top:453.05px;font-size:11px;color:#000;letter-spacing:-0.25px;-webkit-text-stroke:0.2px #000;">H-bonds)</div>
<div class="t" style="left:1256px;top:466.05px;font-size:11px;color:#000;letter-spacing:-0.25px;-webkit-text-stroke:0.2px #000;">0 created molecule(s) (0 frag.)</div>
<div class="t" style="left:1256px;top:479.05px;font-size:11px;color:#000;letter-spacing:-0.25px;-webkit-text-stroke:0.2px #000;">12 cell edges</div>
<div class="t" style="left:1256px;top:492.05px;font-size:11px;color:#000;letter-spacing:-0.25px;-webkit-text-stroke:0.2px #000;">1 polyhedra (4 faces)</div>
<div class="t" style="left:1256px;top:505.05px;font-size:11px;color:#000;letter-spacing:-0.25px;-webkit-text-stroke:0.2px #000;">0 atom, 0 bond label(s)</div>
<div class="b" style="left:44px;top:545px;width:161px;height:141px;background:linear-gradient(180deg,#efefef 0,#e6e6e6 55%,#d4d4d4 100%);border:1px solid #a0a0a0;box-sizing:border-box;"></div>
<svg style="left:52px;top:565px" width="145" height="100" viewBox="0 0 145 100"><rect width="145" height="100" fill="#000"/><line x1="12.3" y1="2.0" x2="12.3" y2="13.0" stroke="#b0b0b0" stroke-width="0.5" opacity="1"/><line x1="12.3" y1="13.0" x2="21.0" y2="12.8" stroke="#b0b0b0" stroke-width="0.5" opacity="1"/><circle cx="12.3" cy="6.0" r="0.7" fill="#e0e0e0"/><circle cx="16.5" cy="12.8" r="0.7" fill="#e0e0e0"/><rect x="31.5" y="17.4" width="71.3" height="71.9" fill="none" stroke="#b8b8b8" stroke-width="0.9"/><rect x="41.4" y="10.3" width="71.7" height="72.0" fill="none" stroke="#b8b8b8" stroke-width="0.9"/><line x1="31.5" y1="17.4" x2="41.4" y2="10.3" stroke="#b8b8b8" stroke-width="0.9" opacity="1"/><line x1="102.8" y1="17.4" x2="113.1" y2="10.3" stroke="#b8b8b8" stroke-width="0.9" opacity="1"/><line x1="31.5" y1="89.3" x2="41.4" y2="82.3" stroke="#b8b8b8" stroke-width="0.9" opacity="1"/><line x1="102.8" y1="89.3" x2="113.1" y2="82.3" stroke="#b8b8b8" stroke-width="0.9" opacity="1"/><line x1="36.6" y1="13.5" x2="24.9" y2="16.3" stroke="#d08a18" stroke-width="0.9" opacity="1"/><line x1="36.6" y1="13.5" x2="46.9" y2="25.7" stroke="#d08a18" stroke-width="0.9" opacity="1"/><line x1="36.6" y1="13.5" x2="49.6" y2="14.0" stroke="#d08a18" stroke-width="0.9" opacity="1"/><line x1="36.6" y1="13.5" x2="44.3" y2="7.7" stroke="#d08a18" stroke-width="0.9" opacity="1"/><line x1="36.6" y1="13.5" x2="23.5" y2="8.9" stroke="#d08a18" stroke-width="0.9" opacity="1"/><line x1="75.8" y1="10.9" x2="87.4" y2="14.0" stroke="#d08a18" stroke-width="0.9" opacity="1"/><line x1="75.8" y1="10.9" x2="72.1" y2="-1.2" stroke="#d08a18" stroke-width="0.9" opacity="1"/><line x1="75.8" y1="10.9" x2="74.2" y2="0.8" stroke="#d08a18" stroke-width="0.9" opacity="1"/><line x1="75.8" y1="10.9" x2="76.6" y2="20.8" stroke="#d08a18" stroke-width="0.9" opacity="1"/><line x1="75.8" y1="10.9" x2="59.4" y2="10.3" stroke="#d08a18" stroke-width="0.9" opacity="1"/><line x1="71.0" y1="14.8" x2="58.2" y2="6.6" stroke="#d08a18" stroke-width="0.9" opacity="1"/><line x1="71.0" y1="14.8" x2="59.9" y2="24.8" stroke="#d08a18" stroke-width="0.9" opacity="1"/><line x1="71.0" y1="14.8" x2="80.1" y2="21.6" stroke="#d08a18" stroke-width="0.9" opacity="1"/><line x1="71.0" y1="14.8" x2="64.2" y2="1.7" stroke="#d08a18" stroke-width="0.9" opacity="1"/><line x1="71.0" y1="14.8" x2="62.5" y2="19.4" stroke="#d08a18" stroke-width="0.9" opacity="1"/><line x1="107.3" y1="14.4" x2="106.2" y2="25.0" stroke="#d08a18" stroke-width="0.9" opacity="1"/><line x1="107.3" y1="14.4" x2="104.3" y2="29.6" stroke="#d08a18" stroke-width="0.9" opacity="1"/><line x1="107.3" y1="14.4" x2="112.3" y2="29.7" stroke="#d08a18" stroke-width="0.9" opacity="1"/><line x1="107.3" y1="14.4" x2="114.1" y2="7.9" stroke="#d08a18" stroke-width="0.9" opacity="1"/><line x1="107.3" y1="14.4" x2="97.9" y2="23.3" stroke="#d08a18" stroke-width="0.9" opacity="1"/><line x1="37.3" y1="48.8" x2="49.6" y2="50.6" stroke="#d08a18" stroke-width="0.9" opacity="1"/><line x1="37.3" y1="48.8" x2="45.5" y2="43.3" stroke="#d08a18" stroke-width="0.9" opacity="1"/><line x1="37.3" y1="48.8" x2="29.1" y2="43.1" stroke="#d08a18" stroke-width="0.9" opacity="1"/><line x1="37.3" y1="48.8" x2="23.1" y2="41.2" stroke="#d08a18" stroke-width="0.9" opacity="1"/><line x1="37.3" y1="48.8" x2="39.9" y2="57.5" stroke="#d08a18" stroke-width="0.9" opacity="1"/><line x1="32.4" y1="52.7" x2="43.9" y2="59.4" stroke="#d08a18" stroke-width="0.9" opacity="1"/><line x1="32.4" y1="52.7" x2="42.0" y2="53.8" stroke="#d08a18" stroke-width="0.9" opacity="1"/><line x1="32.4" y1="52.7" x2="16.0" y2="53.1" stroke="#d08a18" stroke-width="0.9" opacity="1"/><line x1="32.4" y1="52.7" x2="21.7" y2="58.6" stroke="#d08a18" stroke-width="0.9" opacity="1"/><line x1="32.4" y1="52.7" x2="26.1" y2="45.3" stroke="#d08a18" stroke-width="0.9" opacity="1"/><line x1="66.8" y1="53.3" x2="57.7" y2="48.3" stroke="#d08a18" stroke-width="0.9" opacity="1"/><line x1="66.8" y1="53.3" x2="53.9" y2="42.8" stroke="#d08a18" stroke-width="0.9" opacity="1"/><line x1="66.8" y1="53.3" x2="79.5" y2="57.8" stroke="#d08a18" stroke-width="0.9" opacity="1"/><line x1="66.8" y1="53.3" x2="58.8" y2="47.0" stroke="#d08a18" stroke-width="0.9" opacity="1"/><line x1="66.8" y1="53.3" x2="64.9" y2="70.1" stroke="#d08a18" stroke-width="0.9" opacity="1"/><line x1="108.2" y1="49.5" x2="118.2" y2="49.3" stroke="#d08a18" stroke-width="0.9" opacity="1"/><line x1="108.2" y1="49.5" x2="103.6" y2="33.5" stroke="#d08a18" stroke-width="0.9" opacity="1"/><line x1="108.2" y1="49.5" x2="109.4" y2="63.3" stroke="#d08a18" stroke-width="0.9" opacity="1"/><line x1="108.2" y1="49.5" x2="119.7" y2="52.7" stroke="#d08a18" stroke-width="0.9" opacity="1"/><line x1="108.2" y1="49.5" x2="101.9" y2="37.3" stroke="#d08a18" stroke-width="0.9" opacity="1"/><line x1="103.5" y1="53.0" x2="105.0" y2="43.4" stroke="#d08a18" stroke-width="0.9" opacity="1"/><line x1="103.5" y1="53.0" x2="94.4" y2="66.0" stroke="#d08a18" stroke-width="0.9" opacity="1"/><line x1="103.5" y1="53.0" x2="92.6" y2="46.7" stroke="#d08a18" stroke-width="0.9" opacity="1"/><line x1="103.5" y1="53.0" x2="89.7" y2="62.8" stroke="#d08a18" stroke-width="0.9" opacity="1"/><line x1="103.5" y1="53.0" x2="95.3" y2="48.9" stroke="#d08a18" stroke-width="0.9" opacity="1"/><line x1="36.6" y1="85.1" x2="40.1" y2="74.0" stroke="#d08a18" stroke-width="0.9" opacity="1"/><line x1="36.6" y1="85.1" x2="26.8" y2="89.5" stroke="#d08a18" stroke-width="0.9" opacity="1"/><line x1="36.6" y1="85.1" x2="25.7" y2="89.1" stroke="#d08a18" stroke-width="0.9" opacity="1"/><line x1="36.6" y1="85.1" x2="48.5" y2="92.5" stroke="#d08a18" stroke-width="0.9" opacity="1"/><line x1="36.6" y1="85.1" x2="48.8" y2="94.3" stroke="#d08a18" stroke-width="0.9" opacity="1"/><line x1="72.0" y1="85.9" x2="87.1" y2="88.3" stroke="#d08a18" stroke-width="0.9" opacity="1"/><line x1="72.0" y1="85.9" x2="76.6" y2="73.7" stroke="#d08a18" stroke-width="0.9" opacity="1"/><line x1="72.0" y1="85.9" x2="69.2" y2="75.3" stroke="#d08a18" stroke-width="0.9" opacity="1"/><line x1="72.0" y1="85.9" x2="71.0" y2="73.5" stroke="#d08a18" stroke-width="0.9" opacity="1"/><line x1="72.0" y1="85.9" x2="74.0" y2="102.5" stroke="#d08a18" stroke-width="0.9" opacity="1"/><line x1="76.9" y1="82.3" x2="67.2" y2="89.3" stroke="#d08a18" stroke-width="0.9" opacity="1"/><line x1="76.9" y1="82.3" x2="84.5" y2="73.1" stroke="#d08a18" stroke-width="0.9" opacity="1"/><line x1="76.9" y1="82.3" x2="71.7" y2="73.3" stroke="#d08a18" stroke-width="0.9" opacity="1"/><line x1="76.9" y1="82.3" x2="83.0" y2="73.1" stroke="#d08a18" stroke-width="0.9" opacity="1"/><line x1="76.9" y1="82.3" x2="92.9" y2="87.5" stroke="#d08a18" stroke-width="0.9" opacity="1"/><line x1="107.7" y1="85.5" x2="115.4" y2="100.2" stroke="#d08a18" stroke-width="0.9" opacity="1"/><line x1="107.7" y1="85.5" x2="121.5" y2="84.3" stroke="#d08a18" stroke-width="0.9" opacity="1"/><line x1="107.7" y1="85.5" x2="117.2" y2="86.2" stroke="#d08a18" stroke-width="0.9" opacity="1"/><line x1="107.7" y1="85.5" x2="110.8" y2="97.2" stroke="#d08a18" stroke-width="0.9" opacity="1"/><line x1="107.7" y1="85.5" x2="94.9" y2="74.7" stroke="#d08a18" stroke-width="0.9" opacity="1"/><line x1="62.3" y1="35.7" x2="56.1" y2="43.7" stroke="#d08a18" stroke-width="0.9" opacity="1"/><line x1="62.3" y1="35.7" x2="52.9" y2="31.9" stroke="#d08a18" stroke-width="0.9" opacity="1"/><line x1="62.3" y1="35.7" x2="73.8" y2="42.7" stroke="#d08a18" stroke-width="0.9" opacity="1"/><line x1="62.3" y1="35.7" x2="59.1" y2="26.7" stroke="#d08a18" stroke-width="0.9" opacity="1"/><line x1="62.3" y1="35.7" x2="48.4" y2="40.1" stroke="#d08a18" stroke-width="0.9" opacity="1"/><line x1="83.5" y1="39.8" x2="84.5" y2="27.8" stroke="#d08a18" stroke-width="0.9" opacity="1"/><line x1="83.5" y1="39.8" x2="91.3" y2="33.0" stroke="#d08a18" stroke-width="0.9" opacity="1"/><line x1="83.5" y1="39.8" x2="80.2" y2="25.0" stroke="#d08a18" stroke-width="0.9" opacity="1"/><line x1="83.5" y1="39.8" x2="92.9" y2="30.9" stroke="#d08a18" stroke-width="0.9" opacity="1"/><line x1="83.5" y1="39.8" x2="91.1" y2="45.3" stroke="#d08a18" stroke-width="0.9" opacity="1"/><line x1="84.8" y1="62.0" x2="74.6" y2="60.1" stroke="#d08a18" stroke-width="0.9" opacity="1"/><line x1="84.8" y1="62.0" x2="78.1" y2="55.0" stroke="#d08a18" stroke-width="0.9" opacity="1"/><line x1="84.8" y1="62.0" x2="86.8" y2="51.4" stroke="#d08a18" stroke-width="0.9" opacity="1"/><line x1="84.8" y1="62.0" x2="95.2" y2="62.8" stroke="#d08a18" stroke-width="0.9" opacity="1"/><line x1="84.8" y1="62.0" x2="71.8" y2="65.6" stroke="#d08a18" stroke-width="0.9" opacity="1"/><line x1="57.6" y1="62.3" x2="49.7" y2="69.0" stroke="#d08a18" stroke-width="0.9" opacity="1"/><line x1="57.6" y1="62.3" x2="41.1" y2="64.2" stroke="#d08a18" stroke-width="0.9" opacity="1"/><line x1="57.6" y1="62.3" x2="41.5" y2="58.7" stroke="#d08a18" stroke-width="0.9" opacity="1"/><line x1="57.6" y1="62.3" x2="74.3" y2="65.3" stroke="#d08a18" stroke-width="0.9" opacity="1"/><line x1="57.6" y1="62.3" x2="67.8" y2="53.7" stroke="#d08a18" stroke-width="0.9" opacity="1"/><line x1="62.3" y1="35.7" x2="75.8" y2="10.9" stroke="#d89a28" stroke-width="0.85" opacity="1"/><line x1="62.3" y1="35.7" x2="71.0" y2="14.8" stroke="#d89a28" stroke-width="0.85" opacity="1"/><line x1="62.3" y1="35.7" x2="37.3" y2="48.8" stroke="#d89a28" stroke-width="0.85" opacity="1"/><line x1="62.3" y1="35.7" x2="66.8" y2="53.3" stroke="#d89a28" stroke-width="0.85" opacity="1"/><line x1="83.5" y1="39.8" x2="75.8" y2="10.9" stroke="#d89a28" stroke-width="0.85" opacity="1"/><line x1="83.5" y1="39.8" x2="71.0" y2="14.8" stroke="#d89a28" stroke-width="0.85" opacity="1"/><line x1="83.5" y1="39.8" x2="66.8" y2="53.3" stroke="#d89a28" stroke-width="0.85" opacity="1"/><line x1="83.5" y1="39.8" x2="108.2" y2="49.5" stroke="#d89a28" stroke-width="0.85" opacity="1"/><line x1="83.5" y1="39.8" x2="103.5" y2="53.0" stroke="#d89a28" stroke-width="0.85" opacity="1"/><line x1="84.8" y1="62.0" x2="66.8" y2="53.3" stroke="#d89a28" stroke-width="0.85" opacity="1"/><line x1="84.8" y1="62.0" x2="108.2" y2="49.5" stroke="#d89a28" stroke-width="0.85" opacity="1"/><line x1="84.8" y1="62.0" x2="103.5" y2="53.0" stroke="#d89a28" stroke-width="0.85" opacity="1"/><line x1="84.8" y1="62.0" x2="72.0" y2="85.9" stroke="#d89a28" stroke-width="0.85" opacity="1"/><line x1="84.8" y1="62.0" x2="76.9" y2="82.3" stroke="#d89a28" stroke-width="0.85" opacity="1"/><line x1="57.6" y1="62.3" x2="37.3" y2="48.8" stroke="#d89a28" stroke-width="0.85" opacity="1"/><line x1="57.6" y1="62.3" x2="32.4" y2="52.7" stroke="#d89a28" stroke-width="0.85" opacity="1"/><line x1="57.6" y1="62.3" x2="66.8" y2="53.3" stroke="#d89a28" stroke-width="0.85" opacity="1"/><line x1="57.6" y1="62.3" x2="36.6" y2="85.1" stroke="#d89a28" stroke-width="0.85" opacity="1"/><line x1="57.6" y1="62.3" x2="72.0" y2="85.9" stroke="#d89a28" stroke-width="0.85" opacity="1"/><line x1="57.6" y1="62.3" x2="76.9" y2="82.3" stroke="#d89a28" stroke-width="0.85" opacity="1"/><line x1="46.0" y1="27.6" x2="36.6" y2="13.5" stroke="#d89a28" stroke-width="0.85" opacity="1"/><line x1="46.0" y1="27.6" x2="71.0" y2="14.8" stroke="#d89a28" stroke-width="0.85" opacity="1"/><line x1="46.0" y1="27.6" x2="37.3" y2="48.8" stroke="#d89a28" stroke-width="0.85" opacity="1"/><line x1="46.0" y1="27.6" x2="32.4" y2="52.7" stroke="#d89a28" stroke-width="0.85" opacity="1"/><line x1="99.2" y1="25.1" x2="75.8" y2="10.9" stroke="#d89a28" stroke-width="0.85" opacity="1"/><line x1="99.2" y1="25.1" x2="107.3" y2="14.4" stroke="#d89a28" stroke-width="0.85" opacity="1"/><line x1="99.2" y1="25.1" x2="108.2" y2="49.5" stroke="#d89a28" stroke-width="0.85" opacity="1"/><line x1="99.2" y1="25.1" x2="103.5" y2="53.0" stroke="#d89a28" stroke-width="0.85" opacity="1"/><line x1="51.2" y1="69.7" x2="37.3" y2="48.8" stroke="#d89a28" stroke-width="0.85" opacity="1"/><line x1="51.2" y1="69.7" x2="32.4" y2="52.7" stroke="#d89a28" stroke-width="0.85" opacity="1"/><line x1="51.2" y1="69.7" x2="66.8" y2="53.3" stroke="#d89a28" stroke-width="0.85" opacity="1"/><line x1="51.2" y1="69.7" x2="36.6" y2="85.1" stroke="#d89a28" stroke-width="0.85" opacity="1"/><line x1="51.2" y1="69.7" x2="72.0" y2="85.9" stroke="#d89a28" stroke-width="0.85" opacity="1"/><line x1="51.2" y1="69.7" x2="76.9" y2="82.3" stroke="#d89a28" stroke-width="0.85" opacity="1"/><line x1="91.3" y1="76.5" x2="103.5" y2="53.0" stroke="#d89a28" stroke-width="0.85" opacity="1"/><line x1="91.3" y1="76.5" x2="72.0" y2="85.9" stroke="#d89a28" stroke-width="0.85" opacity="1"/><line x1="91.3" y1="76.5" x2="76.9" y2="82.3" stroke="#d89a28" stroke-width="0.85" opacity="1"/><line x1="91.3" y1="76.5" x2="107.7" y2="85.5" stroke="#d89a28" stroke-width="0.85" opacity="1"/><line x1="99.2" y1="25.1" x2="102.2" y2="18.3" stroke="#d89a28" stroke-width="0.85" opacity="1"/><polygon points="62.3,35.7 83.5,39.8 84.8,62.0 57.6,62.3" fill="#2a98a4" opacity="1" stroke="none" stroke-width="0.6"/><polygon points="62.3,35.7 83.5,39.8 84.8,62.0" fill="#35b0bc" opacity="0.6" stroke="none" stroke-width="0.6"/><line x1="83.5" y1="39.8" x2="57.6" y2="62.3" stroke="#e8c040" stroke-width="0.7" opacity="1"/><circle cx="41.1" cy="10.3" r="2.1" fill="url(#gm)"/><circle cx="31.5" cy="17.7" r="2.1" fill="url(#gm)"/><circle cx="112.1" cy="10.9" r="2.1" fill="url(#gm)"/><circle cx="102.2" cy="18.3" r="2.1" fill="url(#gm)"/><circle cx="112.9" cy="81.6" r="2.1" fill="url(#gm)"/><circle cx="102.6" cy="88.9" r="2.1" fill="url(#gm)"/><circle cx="32.1" cy="88.7" r="2.1" fill="url(#gm)"/><circle cx="41.8" cy="81.6" r="2.1" fill="url(#gm)"/><circle cx="36.6" cy="13.5" r="2.9" fill="url(#gw)"/><circle cx="75.8" cy="10.9" r="2.9" fill="url(#gw)"/><circle cx="71.0" cy="14.8" r="2.9" fill="url(#gw)"/><circle cx="107.3" cy="14.4" r="2.9" fill="url(#gw)"/><circle cx="37.3" cy="48.8" r="2.9" fill="url(#gw)"/><circle cx="32.4" cy="52.7" r="2.9" fill="url(#gw)"/><circle cx="66.8" cy="53.3" r="2.9" fill="url(#gw)"/><circle cx="108.2" cy="49.5" r="2.9" fill="url(#gw)"/><circle cx="103.5" cy="53.0" r="2.9" fill="url(#gw)"/><circle cx="36.6" cy="85.1" r="2.9" fill="url(#gw)"/><circle cx="72.0" cy="85.9" r="2.9" fill="url(#gw)"/><circle cx="76.9" cy="82.3" r="2.9" fill="url(#gw)"/><circle cx="107.7" cy="85.5" r="2.9" fill="url(#gw)"/><circle cx="46.0" cy="27.6" r="4.2" fill="url(#gy)"/><circle cx="99.2" cy="25.1" r="4.2" fill="url(#gy)"/><circle cx="51.2" cy="69.7" r="4.2" fill="url(#gy)"/><circle cx="91.3" cy="76.5" r="4.2" fill="url(#gy)"/><circle cx="62.3" cy="35.7" r="1.3" fill="#f0e800"/><circle cx="83.5" cy="39.8" r="1.3" fill="#f0e800"/><circle cx="84.8" cy="62.0" r="1.3" fill="#f0e800"/><circle cx="57.6" cy="62.3" r="1.3" fill="#f0e800"/><rect x="133.5" y="84.5" width="10" height="15" fill="#202020" stroke="#505050" stroke-width="0.5"/><circle cx="137.0" cy="87.5" r="1.8" fill="#e028d8"/><circle cx="137.0" cy="92.0" r="1.8" fill="#f0e800"/><circle cx="137.0" cy="96.5" r="1.8" fill="#e8e8e8"/><line x1="139.5" y1="87.5" x2="142.5" y2="87.5" stroke="#c0c0c0" stroke-width="0.6" opacity="1"/><line x1="139.5" y1="92.0" x2="142.5" y2="92.0" stroke="#c0c0c0" stroke-width="0.6" opacity="1"/><line x1="139.5" y1="96.5" x2="142.5" y2="96.5" stroke="#c0c0c0" stroke-width="0.6" opacity="1"/></svg>
<div class="t" style="left:212px;top:545.04px;font-size:11px;color:#000;font-weight:bold;letter-spacing:0.55px;">Picture 9</div>
<div class="t" style="left:212px;top:558.04px;font-size:11px;color:#000;letter-spacing:-0.25px;-webkit-text-stroke:0.2px #000;">4 atom(s) in parameter list</div>
<div class="t" style="left:212px;top:571.04px;font-size:11px;color:#000;letter-spacing:-0.25px;-webkit-text-stroke:0.2px #000;">0 molecular, 1 polymeric unit(s)</div>
<div class="t" style="left:212px;top:584.04px;font-size:11px;color:#000;letter-spacing:-0.25px;-webkit-text-stroke:0.2px #000;">63 created atom(s)</div>
<div class="t" style="left:212px;top:597.04px;font-size:11px;color:#000;letter-spacing:-0.25px;-webkit-text-stroke:0.2px #000;">&nbsp;=&nbsp;9*P+5&nbsp;40*S-2&nbsp;14*Na+1</div>
<div class="t" style="left:212px;top:610.04px;font-size:11px;color:#000;letter-spacing:-0.25px;-webkit-text-stroke:0.2px #000;">80 created bond(s) (0 contacts, 0</div>
<div class="t" style="left:212px;top:623.04px;font-size:11px;color:#000;letter-spacing:-0.25px;-webkit-text-stroke:0.2px #000;">H-bonds)</div>
<div class="t" style="left:212px;top:636.04px;font-size:11px;color:#000;letter-spacing:-0.25px;-webkit-text-stroke:0.2px #000;">0 created molecule(s) (0 frag.)</div>
<div class="t" style="left:212px;top:649.04px;font-size:11px;color:#000;letter-spacing:-0.25px;-webkit-text-stroke:0.2px #000;">12 cell edges</div>
<div class="t" style="left:212px;top:662.04px;font-size:11px;color:#000;letter-spacing:-0.25px;-webkit-text-stroke:0.2px #000;">1 polyhedra (4 faces)</div>
<div class="t" style="left:212px;top:675.04px;font-size:11px;color:#000;letter-spacing:-0.25px;-webkit-text-stroke:0.2px #000;">0 atom, 0 bond label(s)</div>
<div class="b" style="left:392px;top:545px;width:161px;height:141px;background:linear-gradient(180deg,#efefef 0,#e6e6e6 55%,#d4d4d4 100%);border:1px solid #a0a0a0;box-sizing:border-box;"></div>
<svg style="left:400px;top:555px" width="145" height="120" viewBox="0 0 145 120"><rect width="145" height="120" fill="#000"/><line x1="12.3" y1="2.0" x2="12.3" y2="13.0" stroke="#b0b0b0" stroke-width="0.5" opacity="1"/><line x1="12.3" y1="13.0" x2="21.0" y2="12.8" stroke="#b0b0b0" stroke-width="0.5" opacity="1"/><circle cx="12.3" cy="6.0" r="0.7" fill="#e0e0e0"/><circle cx="16.5" cy="12.8" r="0.7" fill="#e0e0e0"/><line x1="53.4" y1="62.9" x2="49.0" y2="67.6" stroke="#a8701c" stroke-width="0.7" opacity="1"/><line x1="80.2" y1="31.3" x2="87.5" y2="31.9" stroke="#a8701c" stroke-width="0.7" opacity="1"/><line x1="54.9" y1="42.5" x2="60.8" y2="42.3" stroke="#a8701c" stroke-width="0.7" opacity="1"/><line x1="94.7" y1="58.4" x2="91.8" y2="54.9" stroke="#a8701c" stroke-width="0.7" opacity="1"/><line x1="80.8" y1="84.3" x2="73.9" y2="83.3" stroke="#a8701c" stroke-width="0.7" opacity="1"/><line x1="83.3" y1="31.2" x2="83.6" y2="24.9" stroke="#a8701c" stroke-width="0.7" opacity="1"/><line x1="57.8" y1="29.0" x2="61.7" y2="24.6" stroke="#a8701c" stroke-width="0.7" opacity="1"/><line x1="86.6" y1="85.0" x2="84.9" y2="77.5" stroke="#a8701c" stroke-width="0.7" opacity="1"/><line x1="64.3" y1="79.9" x2="57.0" y2="82.5" stroke="#a8701c" stroke-width="0.7" opacity="1"/><line x1="97.6" y1="33.4" x2="100.8" y2="37.1" stroke="#a8701c" stroke-width="0.7" opacity="1"/><line x1="103.6" y1="55.8" x2="100.0" y2="52.1" stroke="#a8701c" stroke-width="0.7" opacity="1"/><line x1="72.0" y1="52.5" x2="68.2" y2="57.6" stroke="#a8701c" stroke-width="0.7" opacity="1"/><line x1="77.3" y1="86.7" x2="74.1" y2="79.7" stroke="#a8701c" stroke-width="0.7" opacity="1"/><line x1="96.1" y1="92.4" x2="93.9" y2="88.3" stroke="#a8701c" stroke-width="0.7" opacity="1"/><line x1="96.4" y1="90.7" x2="101.6" y2="87.1" stroke="#a8701c" stroke-width="0.7" opacity="1"/><line x1="86.3" y1="40.9" x2="89.3" y2="35.4" stroke="#a8701c" stroke-width="0.7" opacity="1"/><line x1="56.7" y1="31.2" x2="61.5" y2="24.9" stroke="#a8701c" stroke-width="0.7" opacity="1"/><line x1="43.1" y1="79.8" x2="39.2" y2="82.3" stroke="#a8701c" stroke-width="0.7" opacity="1"/><line x1="57.3" y1="77.7" x2="60.2" y2="74.7" stroke="#a8701c" stroke-width="0.7" opacity="1"/><line x1="79.4" y1="30.0" x2="78.3" y2="24.7" stroke="#a8701c" stroke-width="0.7" opacity="1"/><line x1="97.8" y1="91.7" x2="89.8" y2="91.5" stroke="#a8701c" stroke-width="0.7" opacity="1"/><line x1="58.4" y1="32.1" x2="55.0" y2="29.7" stroke="#a8701c" stroke-width="0.7" opacity="1"/><line x1="50.6" y1="53.9" x2="47.1" y2="51.0" stroke="#a8701c" stroke-width="0.7" opacity="1"/><line x1="39.9" y1="84.3" x2="36.9" y2="91.5" stroke="#a8701c" stroke-width="0.7" opacity="1"/><line x1="98.9" y1="51.9" x2="93.0" y2="53.4" stroke="#a8701c" stroke-width="0.7" opacity="1"/><line x1="81.4" y1="66.3" x2="75.4" y2="64.0" stroke="#a8701c" stroke-width="0.7" opacity="1"/><line x1="101.9" y1="60.5" x2="95.7" y2="63.4" stroke="#a8701c" stroke-width="0.7" opacity="1"/><line x1="53.4" y1="46.9" x2="59.4" y2="46.0" stroke="#a8701c" stroke-width="0.7" opacity="1"/><line x1="74.8" y1="27.8" x2="69.4" y2="31.0" stroke="#a8701c" stroke-width="0.7" opacity="1"/><line x1="38.4" y1="67.6" x2="35.5" y2="64.5" stroke="#a8701c" stroke-width="0.7" opacity="1"/><line x1="80.3" y1="57.8" x2="78.0" y2="52.9" stroke="#a8701c" stroke-width="0.7" opacity="1"/><line x1="85.8" y1="75.7" x2="90.0" y2="76.3" stroke="#a8701c" stroke-width="0.7" opacity="1"/><line x1="83.6" y1="90.6" x2="83.6" y2="96.4" stroke="#a8701c" stroke-width="0.7" opacity="1"/><line x1="77.9" y1="48.1" x2="74.5" y2="52.1" stroke="#a8701c" stroke-width="0.7" opacity="1"/><line x1="62.5" y1="66.3" x2="60.8" y2="71.5" stroke="#a8701c" stroke-width="0.7" opacity="1"/><line x1="90.3" y1="28.8" x2="84.0" y2="25.9" stroke="#a8701c" stroke-width="0.7" opacity="1"/><line x1="58.4" y1="41.7" x2="60.0" y2="37.0" stroke="#a8701c" stroke-width="0.7" opacity="1"/><line x1="49.9" y1="55.7" x2="48.5" y2="51.6" stroke="#a8701c" stroke-width="0.7" opacity="1"/><line x1="59.2" y1="49.0" x2="62.1" y2="44.0" stroke="#a8701c" stroke-width="0.7" opacity="1"/><line x1="96.0" y1="38.2" x2="92.6" y2="43.8" stroke="#a8701c" stroke-width="0.7" opacity="1"/><line x1="98.1" y1="56.8" x2="98.8" y2="61.2" stroke="#a8701c" stroke-width="0.7" opacity="1"/><line x1="73.5" y1="39.6" x2="76.1" y2="32.7" stroke="#a8701c" stroke-width="0.7" opacity="1"/><line x1="49.7" y1="45.4" x2="52.0" y2="39.2" stroke="#a8701c" stroke-width="0.7" opacity="1"/><line x1="92.6" y1="49.8" x2="96.2" y2="53.5" stroke="#a8701c" stroke-width="0.7" opacity="1"/><line x1="91.8" y1="44.9" x2="88.6" y2="49.6" stroke="#a8701c" stroke-width="0.7" opacity="1"/><line x1="66.0" y1="54.0" x2="70.0" y2="51.8" stroke="#a8701c" stroke-width="0.7" opacity="1"/><line x1="37.3" y1="89.3" x2="43.1" y2="83.8" stroke="#a8701c" stroke-width="0.7" opacity="1"/><line x1="67.0" y1="89.7" x2="71.4" y2="87.5" stroke="#a8701c" stroke-width="0.7" opacity="1"/><line x1="88.4" y1="82.2" x2="85.3" y2="77.0" stroke="#a8701c" stroke-width="0.7" opacity="1"/><line x1="56.9" y1="49.5" x2="57.5" y2="53.7" stroke="#a8701c" stroke-width="0.7" opacity="1"/><line x1="77.6" y1="45.9" x2="79.2" y2="42.1" stroke="#a8701c" stroke-width="0.7" opacity="1"/><line x1="99.3" y1="72.8" x2="106.1" y2="69.3" stroke="#a8701c" stroke-width="0.7" opacity="1"/><line x1="99.1" y1="65.1" x2="106.0" y2="65.7" stroke="#a8701c" stroke-width="0.7" opacity="1"/><line x1="48.9" y1="46.8" x2="45.7" y2="41.6" stroke="#a8701c" stroke-width="0.7" opacity="1"/><line x1="65.5" y1="89.0" x2="61.5" y2="85.5" stroke="#a8701c" stroke-width="0.7" opacity="1"/><line x1="54.4" y1="83.9" x2="47.4" y2="84.9" stroke="#a8701c" stroke-width="0.7" opacity="1"/><line x1="61.3" y1="40.0" x2="54.2" y2="38.5" stroke="#a8701c" stroke-width="0.7" opacity="1"/><line x1="48.8" y1="79.3" x2="55.2" y2="75.8" stroke="#a8701c" stroke-width="0.7" opacity="1"/><line x1="93.8" y1="27.5" x2="88.7" y2="22.1" stroke="#a8701c" stroke-width="0.7" opacity="1"/><line x1="40.4" y1="44.9" x2="39.7" y2="51.0" stroke="#a8701c" stroke-width="0.7" opacity="1"/><line x1="66.2" y1="58.2" x2="66.8" y2="54.3" stroke="#a8701c" stroke-width="0.7" opacity="1"/><line x1="40.8" y1="35.4" x2="43.8" y2="38.4" stroke="#a8701c" stroke-width="0.7" opacity="1"/><line x1="104.3" y1="83.4" x2="109.4" y2="86.5" stroke="#a8701c" stroke-width="0.7" opacity="1"/><line x1="58.8" y1="47.8" x2="54.9" y2="53.1" stroke="#a8701c" stroke-width="0.7" opacity="1"/><line x1="77.5" y1="50.8" x2="79.4" y2="55.8" stroke="#a8701c" stroke-width="0.7" opacity="1"/><line x1="45.5" y1="63.7" x2="44.4" y2="58.3" stroke="#a8701c" stroke-width="0.7" opacity="1"/><line x1="42.5" y1="38.8" x2="38.0" y2="43.4" stroke="#a8701c" stroke-width="0.7" opacity="1"/><line x1="91.0" y1="52.1" x2="93.0" y2="45.9" stroke="#a8701c" stroke-width="0.7" opacity="1"/><line x1="66.8" y1="51.6" x2="60.0" y2="51.8" stroke="#a8701c" stroke-width="0.7" opacity="1"/><line x1="66.0" y1="72.8" x2="61.2" y2="74.0" stroke="#a8701c" stroke-width="0.7" opacity="1"/><rect x="35.5" y="30.8" width="64.8" height="64.1" fill="none" stroke="#b8b8b8" stroke-width="0.8"/><rect x="42.4" y="24.7" width="65.6" height="64.0" fill="none" stroke="#b8b8b8" stroke-width="0.8"/><line x1="35.5" y1="30.8" x2="42.4" y2="24.7" stroke="#b8b8b8" stroke-width="0.8" opacity="1"/><line x1="100.3" y1="30.8" x2="108.0" y2="24.7" stroke="#b8b8b8" stroke-width="0.8" opacity="1"/><line x1="35.5" y1="94.9" x2="42.4" y2="88.7" stroke="#b8b8b8" stroke-width="0.8" opacity="1"/><line x1="100.3" y1="94.9" x2="108.0" y2="88.7" stroke="#b8b8b8" stroke-width="0.8" opacity="1"/><line x1="67.9" y1="30.8" x2="67.9" y2="94.9" stroke="#b8b8b8" stroke-width="0.8" opacity="1"/><line x1="74.8" y1="24.7" x2="74.8" y2="88.7" stroke="#b8b8b8" stroke-width="0.8" opacity="1"/><line x1="35.5" y1="62.5" x2="100.3" y2="62.5" stroke="#b8b8b8" stroke-width="0.8" opacity="1"/><line x1="42.4" y1="56.3" x2="108.0" y2="56.3" stroke="#b8b8b8" stroke-width="0.8" opacity="1"/><circle cx="35.5" cy="30.8" r="1.4" fill="#e028d8"/><circle cx="67.9" cy="30.8" r="1.4" fill="#e028d8"/><circle cx="100.3" cy="30.8" r="1.4" fill="#e028d8"/><circle cx="35.5" cy="62.5" r="1.4" fill="#e028d8"/><circle cx="100.3" cy="62.5" r="1.4" fill="#e028d8"/><circle cx="35.5" cy="94.9" r="1.4" fill="#e028d8"/><circle cx="67.9" cy="94.9" r="1.4" fill="#e028d8"/><circle cx="100.3" cy="94.9" r="1.4" fill="#e028d8"/><circle cx="42.4" cy="24.7" r="1.4" fill="#e028d8"/><circle cx="74.8" cy="24.7" r="1.4" fill="#e028d8"/><circle cx="108.0" cy="24.7" r="1.4" fill="#e028d8"/><circle cx="108.0" cy="56.3" r="1.4" fill="#e028d8"/><circle cx="108.0" cy="88.7" r="1.4" fill="#e028d8"/><circle cx="67.9" cy="62.5" r="1.4" fill="#e028d8"/><circle cx="38.0" cy="28.0" r="1.5" fill="#e8e8e8"/><circle cx="41.0" cy="26.0" r="1.5" fill="#e8e8e8"/><circle cx="56.0" cy="27.0" r="1.5" fill="#e8e8e8"/><circle cx="59.0" cy="25.0" r="1.5" fill="#e8e8e8"/><circle cx="88.0" cy="27.0" r="1.5" fill="#e8e8e8"/><circle cx="91.0" cy="25.0" r="1.5" fill="#e8e8e8"/><circle cx="36.0" cy="46.0" r="1.5" fill="#e8e8e8"/><circle cx="39.0" cy="44.0" r="1.5" fill="#e8e8e8"/><circle cx="70.0" cy="45.0" r="1.5" fill="#e8e8e8"/><circle cx="104.0" cy="44.0" r="1.5" fill="#e8e8e8"/><circle cx="36.0" cy="78.0" r="1.5" fill="#e8e8e8"/><circle cx="70.0" cy="78.0" r="1.5" fill="#e8e8e8"/><circle cx="104.0" cy="76.0" r="1.5" fill="#e8e8e8"/><circle cx="52.0" cy="93.0" r="1.5" fill="#e8e8e8"/><circle cx="86.0" cy="93.0" r="1.5" fill="#e8e8e8"/><circle cx="46.2" cy="32.4" r="2.3" fill="url(#gy)"/><circle cx="42.3" cy="35.6" r="2.3" fill="url(#gy)"/><circle cx="53.6" cy="35.6" r="2.3" fill="url(#gy)"/><circle cx="66.0" cy="34.3" r="2.3" fill="url(#gy)"/><circle cx="49.4" cy="39.1" r="2.3" fill="url(#gy)"/><circle cx="63.4" cy="37.8" r="2.3" fill="url(#gy)"/><circle cx="58.5" cy="41.0" r="2.3" fill="url(#gy)"/><circle cx="51.4" cy="47.8" r="2.3" fill="url(#gy)"/><circle cx="64.0" cy="47.4" r="2.3" fill="url(#gy)"/><circle cx="47.5" cy="51.0" r="2.3" fill="url(#gy)"/><circle cx="59.8" cy="50.6" r="2.3" fill="url(#gy)"/><circle cx="44.2" cy="54.5" r="2.3" fill="url(#gy)"/><circle cx="66.6" cy="54.2" r="2.3" fill="url(#gy)"/><circle cx="62.1" cy="57.0" r="2.3" fill="url(#gy)"/><circle cx="42.0" cy="60.6" r="2.3" fill="url(#gy)"/><circle cx="53.3" cy="60.2" r="2.3" fill="url(#gy)"/><circle cx="46.2" cy="64.4" r="2.3" fill="url(#gy)"/><circle cx="42.3" cy="67.6" r="2.3" fill="url(#gy)"/><circle cx="53.6" cy="67.6" r="2.3" fill="url(#gy)"/><circle cx="66.0" cy="66.3" r="2.3" fill="url(#gy)"/><circle cx="49.4" cy="71.1" r="2.3" fill="url(#gy)"/><circle cx="63.4" cy="69.8" r="2.3" fill="url(#gy)"/><circle cx="58.5" cy="73.0" r="2.3" fill="url(#gy)"/><circle cx="51.4" cy="79.8" r="2.3" fill="url(#gy)"/><circle cx="64.0" cy="79.4" r="2.3" fill="url(#gy)"/><circle cx="47.5" cy="83.0" r="2.3" fill="url(#gy)"/><circle cx="59.8" cy="82.6" r="2.3" fill="url(#gy)"/><circle cx="44.2" cy="86.5" r="2.3" fill="url(#gy)"/><circle cx="66.6" cy="86.2" r="2.3" fill="url(#gy)"/><circle cx="62.1" cy="89.0" r="2.3" fill="url(#gy)"/><circle cx="42.0" cy="92.6" r="2.3" fill="url(#gy)"/><circle cx="53.3" cy="92.2" r="2.3" fill="url(#gy)"/><circle cx="78.6" cy="32.4" r="2.3" fill="url(#gy)"/><circle cx="74.7" cy="35.6" r="2.3" fill="url(#gy)"/><circle cx="86.0" cy="35.6" r="2.3" fill="url(#gy)"/><circle cx="98.4" cy="34.3" r="2.3" fill="url(#gy)"/><circle cx="81.8" cy="39.1" r="2.3" fill="url(#gy)"/><circle cx="95.8" cy="37.8" r="2.3" fill="url(#gy)"/><circle cx="90.9" cy="41.0" r="2.3" fill="url(#gy)"/><circle cx="83.8" cy="47.8" r="2.3" fill="url(#gy)"/><circle cx="96.4" cy="47.4" r="2.3" fill="url(#gy)"/><circle cx="79.9" cy="51.0" r="2.3" fill="url(#gy)"/><circle cx="92.2" cy="50.6" r="2.3" fill="url(#gy)"/><circle cx="76.6" cy="54.5" r="2.3" fill="url(#gy)"/><circle cx="99.0" cy="54.2" r="2.3" fill="url(#gy)"/><circle cx="94.5" cy="57.0" r="2.3" fill="url(#gy)"/><circle cx="74.4" cy="60.6" r="2.3" fill="url(#gy)"/><circle cx="85.7" cy="60.2" r="2.3" fill="url(#gy)"/><circle cx="78.6" cy="64.4" r="2.3" fill="url(#gy)"/><circle cx="74.7" cy="67.6" r="2.3" fill="url(#gy)"/><circle cx="86.0" cy="67.6" r="2.3" fill="url(#gy)"/><circle cx="98.4" cy="66.3" r="2.3" fill="url(#gy)"/><circle cx="81.8" cy="71.1" r="2.3" fill="url(#gy)"/><circle cx="95.8" cy="69.8" r="2.3" fill="url(#gy)"/><circle cx="90.9" cy="73.0" r="2.3" fill="url(#gy)"/><circle cx="83.8" cy="79.8" r="2.3" fill="url(#gy)"/><circle cx="96.4" cy="79.4" r="2.3" fill="url(#gy)"/><circle cx="79.9" cy="83.0" r="2.3" fill="url(#gy)"/><circle cx="92.2" cy="82.6" r="2.3" fill="url(#gy)"/><circle cx="76.6" cy="86.5" r="2.3" fill="url(#gy)"/><circle cx="99.0" cy="86.2" r="2.3" fill="url(#gy)"/><circle cx="94.5" cy="89.0" r="2.3" fill="url(#gy)"/><circle cx="74.4" cy="92.6" r="2.3" fill="url(#gy)"/><circle cx="85.7" cy="92.2" r="2.3" fill="url(#gy)"/><rect x="133.5" y="104.5" width="10" height="15" fill="#202020" stroke="#505050" stroke-width="0.5"/><circle cx="137.0" cy="107.5" r="1.8" fill="#e028d8"/><circle cx="137.0" cy="112.0" r="1.8" fill="#f0e800"/><circle cx="137.0" cy="116.5" r="1.8" fill="#e8e8e8"/><line x1="139.5" y1="107.5" x2="142.5" y2="107.5" stroke="#c0c0c0" stroke-width="0.6" opacity="1"/><line x1="139.5" y1="112.0" x2="142.5" y2="112.0" stroke="#c0c0c0" stroke-width="0.6" opacity="1"/><line x1="139.5" y1="116.5" x2="142.5" y2="116.5" stroke="#c0c0c0" stroke-width="0.6" opacity="1"/></svg>
<div class="t" style="left:560px;top:545.04px;font-size:11px;color:#000;font-weight:bold;letter-spacing:0.55px;">Picture 10</div>
<div class="t" style="left:560px;top:558.04px;font-size:11px;color:#000;letter-spacing:-0.25px;-webkit-text-stroke:0.2px #000;">4 atom(s) in parameter list</div>
<div class="t" style="left:560px;top:571.04px;font-size:11px;color:#000;letter-spacing:-0.25px;-webkit-text-stroke:0.2px #000;">0 molecular, 1 polymeric unit(s)</div>
<div class="t" style="left:560px;top:584.04px;font-size:11px;color:#000;letter-spacing:-0.25px;-webkit-text-stroke:0.2px #000;">177 created atom(s)</div>
<div class="t" style="left:560px;top:597.04px;font-size:11px;color:#000;letter-spacing:-0.25px;-webkit-text-stroke:0.2px #000;">&nbsp;=&nbsp;35*P+5&nbsp;64*S-2&nbsp;78*Na+1</div>
<div class="t" style="left:560px;top:610.04px;font-size:11px;color:#000;letter-spacing:-0.25px;-webkit-text-stroke:0.2px #000;">304 created bond(s) (0 contacts,</div>
<div class="t" style="left:560px;top:623.04px;font-size:11px;color:#000;letter-spacing:-0.25px;-webkit-text-stroke:0.2px #000;">0 H-bonds)</div>
<div class="t" style="left:560px;top:636.04px;font-size:11px;color:#000;letter-spacing:-0.25px;-webkit-text-stroke:0.2px #000;">0 created molecule(s) (0 frag.)</div>
<div class="t" style="left:560px;top:649.04px;font-size:11px;color:#000;letter-spacing:-0.25px;-webkit-text-stroke:0.2px #000;">54 cell edges</div>
<div class="t" style="left:560px;top:662.04px;font-size:11px;color:#000;letter-spacing:-0.25px;-webkit-text-stroke:0.2px #000;">0 polyhedra (0 faces)</div>
<div class="t" style="left:560px;top:675.04px;font-size:11px;color:#000;letter-spacing:-0.25px;-webkit-text-stroke:0.2px #000;">0 atom, 0 bond label(s)</div>
<svg width="0" height="0" style="left:0;top:0"><defs><linearGradient id="cg" x1="0" y1="0" x2="0" y2="1"><stop offset="0" stop-color="#efefef"/><stop offset="0.55" stop-color="#e6e6e6"/><stop offset="1" stop-color="#d4d4d4"/></linearGradient></defs></svg>
<div class="b" style="left:7px;top:723px;width:1429px;height:27px;background:#9eacc4;"></div>
<div class="b" style="left:10px;top:725px;width:695px;height:25px;background:linear-gradient(180deg,#dfe4ed 0,#d0d7e3 40%,#c3cbda 100%);border-radius:3px;border:1px solid #b4bdcd;box-sizing:border-box;"></div>
<div class="b" style="left:14px;top:729px;width:2px;height:2px;background:#5d6c86;"></div>
<div class="b" style="left:14px;top:733px;width:2px;height:2px;background:#5d6c86;"></div>
<div class="b" style="left:14px;top:737px;width:2px;height:2px;background:#5d6c86;"></div>
<div class="b" style="left:14px;top:741px;width:2px;height:2px;background:#5d6c86;"></div>
<svg style="left:42px;top:728px" width="17" height="17" viewBox="0 0 17 17"><rect x="0.5" y="0.5" width="14" height="12" fill="#fff" stroke="#101840"/><rect x="1" y="1" width="13" height="2" fill="#2040a0"/><path d="M3 5.5H11M3 7.5H9M3 9.5H8" stroke="#404040" stroke-width=".8"/><path d="M7 11H12V9L16 12.5L12 16V14H7Z" fill="#30d0f0" stroke="#1080a0" stroke-width=".6"/></svg><svg style="left:64px;top:728px" width="18" height="17" viewBox="0 0 18 17"><circle cx="4" cy="8" r="2.6" fill="#f0f000" stroke="#606000" stroke-width=".5"/><circle cx="4" cy="13.5" r="2.6" fill="#f0f000" stroke="#606000" stroke-width=".5"/><circle cx="8.5" cy="11" r="2.6" fill="#909020" stroke="#606000" stroke-width=".5"/><path d="M8 4L15.5 13" stroke="#101830" stroke-width="2.2"/><path d="M8 4L10 6.5" stroke="#f8e020" stroke-width="2.2"/><path d="M13 1L13.8 3L16 3.5L14 4.5L14 6.5L12.5 5" fill="#101030"/></svg><svg style="left:86px;top:728px" width="17" height="17" viewBox="0 0 17 17"><rect x="0.5" y="0.5" width="15" height="13" fill="#fff" stroke="#101840"/><rect x="1" y="1" width="14" height="2" fill="#2040a0"/><path d="M2 15L8.5 8" stroke="#6a1a10" stroke-width="1.8"/><path d="M6 5L10 3.5L13 6.5L11 9L9 7Z" fill="#f0d030" stroke="#806010" stroke-width=".6"/></svg><svg style="left:108px;top:736px" width="6" height="4" viewBox="0 0 6 4"><path d="M0 0H5L2.5 3Z" fill="#1a1a2a"/></svg><div class="b" style="left:119px;top:728px;width:1px;height:19px;background:#8a96ab;"></div><div class="b" style="left:120px;top:728px;width:1px;height:19px;background:#eef1f6;"></div><svg style="left:127px;top:728px" width="15" height="16" viewBox="0 0 15 16"><path d="M1 10L6 3L13 7L9 13Z" fill="#f0f0f0" stroke="#101010" stroke-width="1.2"/><path d="M6 3L13 7L11 10L4 6.5Z" fill="#b8b890"/><path d="M8 4.5L12 7" stroke="#e8e870" stroke-width="1.6"/></svg><svg style="left:147px;top:728px" width="18" height="17" viewBox="0 0 18 17"><circle cx="5" cy="6" r="3.4" fill="#f8f000" stroke="#101010" stroke-width=".7"/><circle cx="12" cy="6" r="3.4" fill="#f8f000" stroke="#101010" stroke-width=".7"/><circle cx="5" cy="12.5" r="3.4" fill="#f8f000" stroke="#101010" stroke-width=".7"/><circle cx="12" cy="12.5" r="3.4" fill="#f8f000" stroke="#101010" stroke-width=".7"/><path d="M1 2H5M3 0V4" stroke="#000" stroke-width="1.2"/></svg><svg style="left:169px;top:728px" width="18" height="17" viewBox="0 0 18 17"><path d="M1 9H8M4.5 5.5V12.5" stroke="#000" stroke-width="1.8"/><circle cx="12.5" cy="9" r="3.6" fill="#f8f000" stroke="#101010" stroke-width=".8"/></svg><svg style="left:191px;top:728px" width="18" height="17" viewBox="0 0 18 17"><circle cx="4" cy="13" r="2.6" fill="#fff" stroke="#101010"/><circle cx="13" cy="13" r="2.6" fill="#fff" stroke="#101010"/><path d="M6 4Q7 1 9.5 1.5Q12 2.5 10 5L8.5 6.5V8" fill="none" stroke="#101010" stroke-width="1.5"/><circle cx="8.5" cy="10" r=".9" fill="#101010"/></svg><svg style="left:213px;top:728px" width="18" height="17" viewBox="0 0 18 17"><rect x="3" y="3" width="11" height="11" fill="none" stroke="#1a28a0" stroke-width="1.2"/><path d="M3 3L14 14M14 3L3 14" stroke="#1a28a0" stroke-width="1.1"/><circle cx="3" cy="3" r="2.2" fill="#fff" stroke="#101010" stroke-width=".8"/><circle cx="14" cy="3" r="2.2" fill="#fff" stroke="#101010" stroke-width=".8"/><circle cx="3" cy="14" r="2.2" fill="#fff" stroke="#101010" stroke-width=".8"/><circle cx="14" cy="14" r="2.2" fill="#fff" stroke="#101010" stroke-width=".8"/></svg><svg style="left:236px;top:728px" width="17" height="17" viewBox="0 0 17 17"><path d="M6 1H10V6H12L8 10L4 6H6Z" fill="#e0e0e0" stroke="#a0a0a0" stroke-width=".8"/><circle cx="4.5" cy="13" r="2.6" fill="#e8e8e8" stroke="#a0a0a0"/><circle cx="11.5" cy="13" r="2.6" fill="#e8e8e8" stroke="#a0a0a0"/></svg><svg style="left:258px;top:728px" width="16" height="17" viewBox="0 0 16 17"><circle cx="8" cy="9" r="6.5" fill="#fff" stroke="#202020" stroke-width="1" stroke-dasharray="1.2 1"/><circle cx="8" cy="9" r="4" fill="#787018" stroke="#202010" stroke-width=".7"/></svg><svg style="left:280px;top:736px" width="6" height="4" viewBox="0 0 6 4"><path d="M0 0H5L2.5 3Z" fill="#1a1a2a"/></svg><div class="b" style="left:290px;top:728px;width:1px;height:19px;background:#8a96ab;"></div><div class="b" style="left:291px;top:728px;width:1px;height:19px;background:#eef1f6;"></div><svg style="left:296px;top:728px" width="17" height="17" viewBox="0 0 17 17"><path d="M4.5 3H12.5L16 9L12.5 15H4.5L1 9Z" fill="none" stroke="#1a28e0" stroke-width="1.8"/></svg><svg style="left:318px;top:728px" width="18" height="17" viewBox="0 0 18 17"><path d="M4.5 3H12.5L16 9L12.5 15H4.5L1 9Z" fill="none" stroke="#e8e030" stroke-width="1.8"/><path d="M4.5 3L1 9L4.5 15" fill="none" stroke="#1a28e0" stroke-width="1.8"/></svg><div class="t" style="left:341px;top:731px;font-size:11px;color:#101010;letter-spacing:-0.4px;">Pg.</div><div class="t" style="left:362px;top:731px;font-size:11px;color:#101010;letter-spacing:-0.6px;">Gw.</div><div class="t" style="left:384px;top:731px;font-size:11px;color:#101010;letter-spacing:-0.6px;">Cut</div><div class="b" style="left:406px;top:728px;width:1px;height:19px;background:#8a96ab;"></div><div class="b" style="left:407px;top:728px;width:1px;height:19px;background:#eef1f6;"></div><div class="t" style="left:412px;top:731px;font-size:11px;color:#101010;">X<span style="font-size:10px;position:relative;top:3px;">A</span></div><div class="t" style="left:434px;top:731px;font-size:11px;color:#101010;">X<span style="font-size:10px;position:relative;top:3px;">M</span></div><div class="t" style="left:456px;top:731px;font-size:11px;color:#101010;letter-spacing:-0.5px;">M<span style="font-size:10px;position:relative;top:3px;">M</span></div><div class="t" style="left:478px;top:731px;font-size:11px;color:#a0a0a0;letter-spacing:-0.4px;">Rd.</div><div class="b" style="left:500px;top:728px;width:1px;height:19px;background:#8a96ab;"></div><div class="b" style="left:501px;top:728px;width:1px;height:19px;background:#eef1f6;"></div><svg style="left:506px;top:728px" width="18" height="17" viewBox="0 0 18 17"><rect x="1.5" y="4.5" width="11" height="11" fill="none" stroke="#1a28c0" stroke-width="1.2"/><rect x="4.5" y="1.5" width="11" height="11" fill="none" stroke="#1a28c0" stroke-width="1.2"/><path d="M1.5 4.5L4.5 1.5M12.5 4.5L15.5 1.5M1.5 15.5L4.5 12.5M12.5 15.5L15.5 12.5" stroke="#1a28c0" stroke-width="1.2"/></svg><svg style="left:529px;top:728px" width="16" height="17" viewBox="0 0 16 17"><path d="M8 1L15 8.5L8 16L1 8.5Z M8 1V16M1 8.5H15" fill="none" stroke="#808080" stroke-width="1.1"/></svg><svg style="left:550px;top:728px" width="19" height="17" viewBox="0 0 19 17"><path d="M2 5Q9 2 16 6M2 12Q9 8 16 11" fill="none" stroke="#303030" stroke-width="1.2"/><circle cx="5" cy="4.5" r="1.6" fill="#f0f000"/><circle cx="10" cy="4" r="1.6" fill="#f0f000"/><circle cx="14" cy="5.5" r="1.6" fill="#f0f000"/><path d="M2 2L16 14M16 2L2 14" stroke="#e01010" stroke-width="2"/></svg><svg style="left:573px;top:736px" width="6" height="4" viewBox="0 0 6 4"><path d="M0 0H5L2.5 3Z" fill="#1a1a2a"/></svg><svg style="left:583px;top:728px" width="18" height="17" viewBox="0 0 18 17"><circle cx="4" cy="12" r="3" fill="none" stroke="#808080"/><path d="M6 10L9 7" stroke="#808080"/></svg><div class="t" style="left:591px;top:730px;font-size:9px;font-weight:bold;color:#808080;">Fe</div><div class="b" style="left:605px;top:728px;width:1px;height:19px;background:#8a96ab;"></div><div class="b" style="left:606px;top:728px;width:1px;height:19px;background:#eef1f6;"></div><svg style="left:611px;top:728px" width="18" height="17" viewBox="0 0 18 17"><rect x="0.5" y="0.5" width="16" height="16" fill="#fff" stroke="#1a28a0"/><path d="M8.5 2L11.5 5H5.5ZM8.5 15L11.5 12H5.5ZM2 8.5L5 5.5V11.5ZM15 8.5L12 5.5V11.5Z" fill="#101010"/><circle cx="8.5" cy="8.5" r="2.4" fill="#f0f000" stroke="#606000" stroke-width=".5"/></svg><svg style="left:634px;top:736px" width="6" height="4" viewBox="0 0 6 4"><path d="M0 0H5L2.5 3Z" fill="#1a1a2a"/></svg><div class="b" style="left:644px;top:728px;width:1px;height:19px;background:#8a96ab;"></div><div class="b" style="left:645px;top:728px;width:1px;height:19px;background:#eef1f6;"></div><div class="t" style="left:651px;top:729px;font-size:14px;font-weight:bold;font-style:italic;color:#1a28b0;font-family:'Liberation Serif',serif;">M</div><svg style="left:672px;top:728px" width="18" height="17" viewBox="0 0 18 17"><rect x="0.5" y="1.5" width="15" height="14" fill="#fff" stroke="#101850"/><circle cx="6.5" cy="7" r="3.6" fill="none" stroke="#e02020" stroke-width="1.3"/><circle cx="9.5" cy="9.5" r="3.6" fill="#108080"/></svg><svg style="left:696px;top:735px" width="9" height="12" viewBox="0 0 9 12"><path d="M1.5 2H7.5" stroke="#202020"/><path d="M1 5H8L4.5 9Z" fill="#202020"/></svg>
<div class="b" style="left:7px;top:750px;width:1429px;height:20px;background:#2b3753;"></div>
<div class="t" style="left:11px;top:755.59px;font-size:11.5px;color:#fff;letter-spacing:-0.235px;word-spacing:0.235px;">For Help, press F1</div>
<div class="b" style="left:713px;top:752px;width:1px;height:17px;background:#c9d0dc;"></div>
<div class="b" style="left:816px;top:752px;width:1px;height:17px;background:#c9d0dc;"></div>
<div class="b" style="left:843px;top:752px;width:1px;height:17px;background:#c9d0dc;"></div>
<div class="b" style="left:871px;top:752px;width:1px;height:17px;background:#c9d0dc;"></div>
<div class="b" style="left:899px;top:752px;width:1px;height:17px;background:#c9d0dc;"></div>
<div class="b" style="left:1003px;top:752px;width:1px;height:17px;background:#c9d0dc;"></div>
<div class="b" style="left:1031px;top:752px;width:1px;height:17px;background:#c9d0dc;"></div>
<div class="b" style="left:1075px;top:752px;width:1px;height:17px;background:#c9d0dc;"></div>
<div class="b" style="left:1146px;top:752px;width:1px;height:17px;background:#c9d0dc;"></div>
<div class="b" style="left:1217px;top:752px;width:1px;height:17px;background:#c9d0dc;"></div>
<div class="b" style="left:1288px;top:752px;width:1px;height:17px;background:#c9d0dc;"></div>
<div class="b" style="left:1352px;top:752px;width:1px;height:17px;background:#c9d0dc;"></div>
<div class="b" style="left:873px;top:750px;width:25px;height:20px;overflow:hidden;"><div class="t" style="left:4px;top:5.14px;font-size:12px;color:#fff;">APC</div></div>
<div class="b" style="left:1005px;top:750px;width:26px;height:20px;overflow:hidden;"><div class="t" style="left:4px;top:5.14px;font-size:12px;color:#fff;letter-spacing:-1.016px;">OFF</div></div>
<div class="t" style="left:905px;top:755.14px;font-size:12px;color:#fff;letter-spacing:0.260px;word-spacing:-0.260px;">Auto Picture</div>
<div class="t" style="left:1037px;top:755.14px;font-size:12px;color:#fff;letter-spacing:0.478px;">BMP</div>
<div class="t" style="left:1080px;top:755.14px;font-size:12px;color:#fff;letter-spacing:0.323px;word-spacing:-0.323px;">4 parms</div>
<div class="b" style="left:764px;top:340px;width:208px;height:34px;background:rgba(0,0,0,0.18);border-radius:3px;filter:blur(1.5px);"></div>
<div class="b" style="left:762px;top:337px;width:208px;height:34px;background:linear-gradient(180deg,#ffffff 0,#f2f2f6 50%,#e4e5f0 100%);border:1px solid #767676;border-radius:3px;box-sizing:border-box;"></div>
<div class="t" style="left:768.5px;top:340.14px;font-size:12px;color:#4c4c4c;letter-spacing:-1.097px;word-spacing:1.097px;">Na3 P S4</div>
<div class="t" style="left:768.5px;top:354.64px;font-size:12px;color:#4c4c4c;letter-spacing:-0.227px;word-spacing:0.227px;">Super cell 2x2x2 with NaS polyhedron</div>
<svg style="left:1342px;top:0px" width="95" height="20"><defs><linearGradient id="wb" x1="0" y1="0" x2="0" y2="1"><stop offset="0" stop-color="#c4dbe8"/><stop offset="0.45" stop-color="#9fbfd2"/><stop offset="0.5" stop-color="#5d8aa6"/><stop offset="1" stop-color="#8cb6cf"/></linearGradient><linearGradient id="wc" x1="0" y1="0" x2="0" y2="1"><stop offset="0" stop-color="#e8a090"/><stop offset="0.45" stop-color="#d8705a"/><stop offset="0.5" stop-color="#b83a20"/><stop offset="1" stop-color="#e09070"/></linearGradient></defs><path d="M1.5 0V13.5Q1.5 17.5 5.5 17.5H51.5V0Z" fill="url(#wb)" stroke="#3a4a5a"/><path d="M51.5 0V17.5H92.5Q93.5 17.5 93.5 14V0Z" fill="url(#wc)" stroke="#3a4a5a"/><line x1="26.5" y1="0" x2="26.5" y2="17" stroke="#3a4a5a"/><rect x="2.5" y="0.5" width="23" height="16" fill="none" stroke="rgba(255,255,255,.5)"/><rect x="27.5" y="0.5" width="23" height="16" fill="none" stroke="rgba(255,255,255,.5)"/><rect x="52.5" y="0.5" width="40" height="16" fill="none" stroke="rgba(255,255,255,.45)"/><rect x="10.5" y="9.5" width="10" height="3" fill="#fff" stroke="#333" stroke-width="0.8"/><rect x="35.5" y="4.5" width="10" height="8" fill="none" stroke="#333" stroke-width="0.8"/><rect x="36.5" y="5.5" width="8" height="6" fill="none" stroke="#fff" stroke-width="1.6"/><path d="M67 4L76 13M76 4L67 13" stroke="#333" stroke-width="3.6"/><path d="M67 4L76 13M76 4L67 13" stroke="#fff" stroke-width="2.2"/></svg>
<svg style="left:1385px;top:32px" width="48" height="16"><rect x="3" y="10" width="7" height="2" fill="#15233a"/><path d="M19.5 6.5H26.5V12.5H19.5ZM21.5 6.5V3.5H28.5V9.5H26.5" fill="none" stroke="#15233a" stroke-width="1.1"/><path d="M35 3L42 10M42 3L35 10" stroke="#15233a" stroke-width="2"/></svg>
<svg style="left:36px;top:86px" width="30" height="12"><path d="M1.5 1.5L9.5 9.5M9.5 1.5L1.5 9.5" stroke="#707070" stroke-width="1.8"/><path d="M19 2L26 9M26 4.5V9H21.5" fill="none" stroke="#808080" stroke-width="1.6"/></svg>
<svg style="left:1413px;top:117px" width="14" height="10"><path d="M1 1L5 4.5L1 8M6 1L10 4.5L6 8" fill="none" stroke="#7a7a7a" stroke-width="1.8"/></svg>
<div class="b" style="left:1431px;top:757px;width:2px;height:2px;background:#d8dde6;"></div>
<div class="b" style="left:1428px;top:760px;width:2px;height:2px;background:#d8dde6;"></div>
<div class="b" style="left:1431px;top:760px;width:2px;height:2px;background:#d8dde6;"></div>
<div class="b" style="left:1425px;top:763px;width:2px;height:2px;background:#d8dde6;"></div>
<div class="b" style="left:1428px;top:763px;width:2px;height:2px;background:#d8dde6;"></div>
<div class="b" style="left:1431px;top:763px;width:2px;height:2px;background:#d8dde6;"></div>
<div class="b" style="left:1422px;top:766px;width:2px;height:2px;background:#d8dde6;"></div>
<div class="b" style="left:1425px;top:766px;width:2px;height:2px;background:#d8dde6;"></div>
<div class="b" style="left:1428px;top:766px;width:2px;height:2px;background:#d8dde6;"></div>
<div class="b" style="left:1431px;top:766px;width:2px;height:2px;background:#d8dde6;"></div>
</body></html>
